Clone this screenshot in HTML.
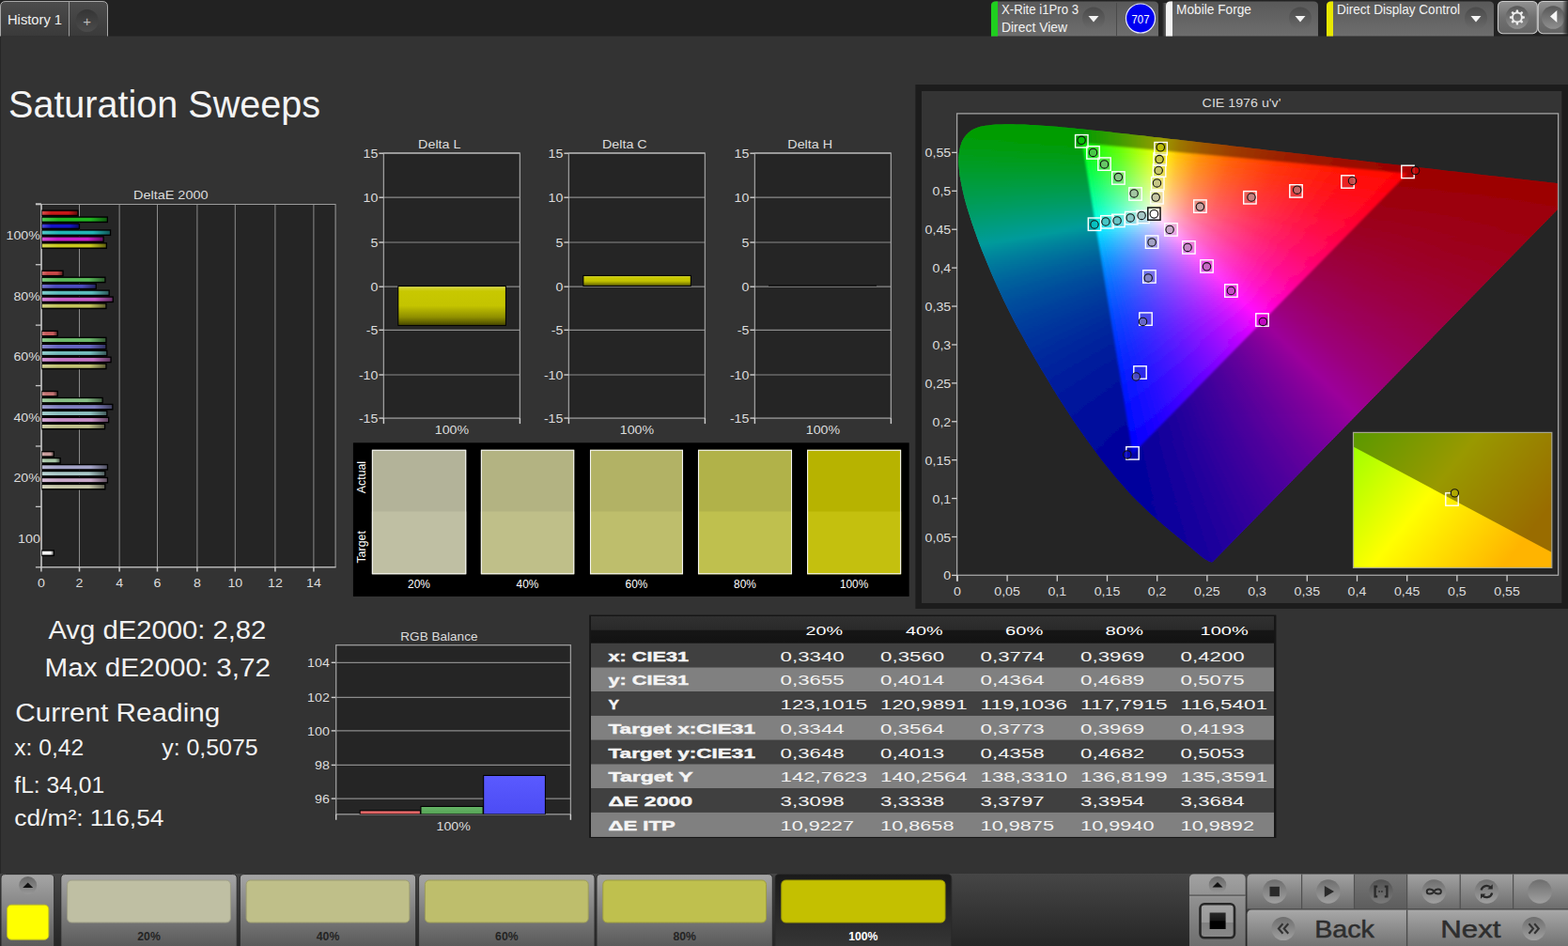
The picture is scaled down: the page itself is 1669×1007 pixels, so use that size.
<!DOCTYPE html>
<html><head><meta charset="utf-8"><title>Saturation Sweeps</title>
<style>html,body{margin:0;padding:0;background:#333;overflow:hidden}svg{display:block;font-family:"Liberation Sans", sans-serif}</style>
</head><body>
<svg width="1669" height="1007" viewBox="0 0 1669 1007">
<defs>
<linearGradient id="gTab" x1="0" y1="0" x2="0" y2="1"><stop offset="0" stop-color="#4c4c4c"/><stop offset="1" stop-color="#3a3a3a"/></linearGradient>
<linearGradient id="gPlus" x1="0" y1="0" x2="0" y2="1"><stop offset="0" stop-color="#353535"/><stop offset="1" stop-color="#4b4b4b"/></linearGradient>
<linearGradient id="gDev" x1="0" y1="0" x2="0" y2="1"><stop offset="0" stop-color="#595959"/><stop offset="1" stop-color="#6e6e6e"/></linearGradient>
<linearGradient id="gDevBtn" x1="0" y1="0" x2="0" y2="1"><stop offset="0" stop-color="#4a4a4a"/><stop offset="1" stop-color="#6a6a6a"/></linearGradient>
<linearGradient id="gGlow" x1="0" y1="0" x2="1" y2="0"><stop offset="0" stop-color="#fff" stop-opacity="0"/><stop offset="1" stop-color="#fff" stop-opacity="0.35"/></linearGradient>
<linearGradient id="gBtn" x1="0" y1="0" x2="0" y2="1"><stop offset="0" stop-color="#929292"/><stop offset="0.5" stop-color="#707070"/><stop offset="1" stop-color="#646464"/></linearGradient>
<linearGradient id="gBtnC" x1="0" y1="0" x2="0" y2="1"><stop offset="0" stop-color="#565656"/><stop offset="1" stop-color="#909090"/></linearGradient>
<linearGradient id="gEdge" x1="0" y1="0" x2="0" y2="1"><stop offset="0" stop-color="#000000"/><stop offset="1" stop-color="#000000"/></linearGradient>
<linearGradient id="gREdge" x1="0" y1="0" x2="1" y2="0"><stop offset="0" stop-color="#202020" stop-opacity="0"/><stop offset="1" stop-color="#202020" stop-opacity="0.9"/></linearGradient>
<linearGradient id="hb100_0" x1="0" y1="0" x2="1" y2="0"><stop offset="0" stop-color="#d44b4b"/><stop offset="0.25" stop-color="#c81818"/><stop offset="0.75" stop-color="#c81818"/><stop offset="1" stop-color="#640c0c"/></linearGradient>
<linearGradient id="hb100_1" x1="0" y1="0" x2="1" y2="0"><stop offset="0" stop-color="#51c451"/><stop offset="0.25" stop-color="#20b420"/><stop offset="0.75" stop-color="#20b420"/><stop offset="1" stop-color="#105a10"/></linearGradient>
<linearGradient id="hb100_2" x1="0" y1="0" x2="1" y2="0"><stop offset="0" stop-color="#4848d4"/><stop offset="0.25" stop-color="#1414c8"/><stop offset="0.75" stop-color="#1414c8"/><stop offset="1" stop-color="#0a0a64"/></linearGradient>
<linearGradient id="hb100_3" x1="0" y1="0" x2="1" y2="0"><stop offset="0" stop-color="#51c4c4"/><stop offset="0.25" stop-color="#20b4b4"/><stop offset="0.75" stop-color="#20b4b4"/><stop offset="1" stop-color="#105a5a"/></linearGradient>
<linearGradient id="hb100_4" x1="0" y1="0" x2="1" y2="0"><stop offset="0" stop-color="#d450d4"/><stop offset="0.25" stop-color="#c81ec8"/><stop offset="0.75" stop-color="#c81ec8"/><stop offset="1" stop-color="#640f64"/></linearGradient>
<linearGradient id="hb100_5" x1="0" y1="0" x2="1" y2="0"><stop offset="0" stop-color="#d4d450"/><stop offset="0.25" stop-color="#c8c81e"/><stop offset="0.75" stop-color="#c8c81e"/><stop offset="1" stop-color="#64640f"/></linearGradient>
<linearGradient id="hb80_0" x1="0" y1="0" x2="1" y2="0"><stop offset="0" stop-color="#d47070"/><stop offset="0.25" stop-color="#c84848"/><stop offset="0.75" stop-color="#c84848"/><stop offset="1" stop-color="#642424"/></linearGradient>
<linearGradient id="hb80_1" x1="0" y1="0" x2="1" y2="0"><stop offset="0" stop-color="#7dc87d"/><stop offset="0.25" stop-color="#58b858"/><stop offset="0.75" stop-color="#58b858"/><stop offset="1" stop-color="#2c5c2c"/></linearGradient>
<linearGradient id="hb80_2" x1="0" y1="0" x2="1" y2="0"><stop offset="0" stop-color="#7373ce"/><stop offset="0.25" stop-color="#4c4cc0"/><stop offset="0.75" stop-color="#4c4cc0"/><stop offset="1" stop-color="#262660"/></linearGradient>
<linearGradient id="hb80_3" x1="0" y1="0" x2="1" y2="0"><stop offset="0" stop-color="#80cbcb"/><stop offset="0.25" stop-color="#5cbcbc"/><stop offset="0.75" stop-color="#5cbcbc"/><stop offset="1" stop-color="#2e5e5e"/></linearGradient>
<linearGradient id="hb80_4" x1="0" y1="0" x2="1" y2="0"><stop offset="0" stop-color="#d480d4"/><stop offset="0.25" stop-color="#c85cc8"/><stop offset="0.75" stop-color="#c85cc8"/><stop offset="1" stop-color="#642e64"/></linearGradient>
<linearGradient id="hb80_5" x1="0" y1="0" x2="1" y2="0"><stop offset="0" stop-color="#d1d180"/><stop offset="0.25" stop-color="#c4c45c"/><stop offset="0.75" stop-color="#c4c45c"/><stop offset="1" stop-color="#62622e"/></linearGradient>
<linearGradient id="hb60_0" x1="0" y1="0" x2="1" y2="0"><stop offset="0" stop-color="#d38080"/><stop offset="0.25" stop-color="#c65c5c"/><stop offset="0.75" stop-color="#c65c5c"/><stop offset="1" stop-color="#632e2e"/></linearGradient>
<linearGradient id="hb60_1" x1="0" y1="0" x2="1" y2="0"><stop offset="0" stop-color="#8cc98c"/><stop offset="0.25" stop-color="#6cba6c"/><stop offset="0.75" stop-color="#6cba6c"/><stop offset="1" stop-color="#365d36"/></linearGradient>
<linearGradient id="hb60_2" x1="0" y1="0" x2="1" y2="0"><stop offset="0" stop-color="#8888cf"/><stop offset="0.25" stop-color="#6666c2"/><stop offset="0.75" stop-color="#6666c2"/><stop offset="1" stop-color="#333361"/></linearGradient>
<linearGradient id="hb60_3" x1="0" y1="0" x2="1" y2="0"><stop offset="0" stop-color="#93cbcb"/><stop offset="0.25" stop-color="#74bcbc"/><stop offset="0.75" stop-color="#74bcbc"/><stop offset="1" stop-color="#3a5e5e"/></linearGradient>
<linearGradient id="hb60_4" x1="0" y1="0" x2="1" y2="0"><stop offset="0" stop-color="#d193d1"/><stop offset="0.25" stop-color="#c474c4"/><stop offset="0.75" stop-color="#c474c4"/><stop offset="1" stop-color="#623a62"/></linearGradient>
<linearGradient id="hb60_5" x1="0" y1="0" x2="1" y2="0"><stop offset="0" stop-color="#cfcf93"/><stop offset="0.25" stop-color="#c2c274"/><stop offset="0.75" stop-color="#c2c274"/><stop offset="1" stop-color="#61613a"/></linearGradient>
<linearGradient id="hb40_0" x1="0" y1="0" x2="1" y2="0"><stop offset="0" stop-color="#d19393"/><stop offset="0.25" stop-color="#c47474"/><stop offset="0.75" stop-color="#c47474"/><stop offset="1" stop-color="#623a3a"/></linearGradient>
<linearGradient id="hb40_1" x1="0" y1="0" x2="1" y2="0"><stop offset="0" stop-color="#a1cca1"/><stop offset="0.25" stop-color="#86be86"/><stop offset="0.75" stop-color="#86be86"/><stop offset="1" stop-color="#435f43"/></linearGradient>
<linearGradient id="hb40_2" x1="0" y1="0" x2="1" y2="0"><stop offset="0" stop-color="#9c9cce"/><stop offset="0.25" stop-color="#8080c0"/><stop offset="0.75" stop-color="#8080c0"/><stop offset="1" stop-color="#404060"/></linearGradient>
<linearGradient id="hb40_3" x1="0" y1="0" x2="1" y2="0"><stop offset="0" stop-color="#a5cece"/><stop offset="0.25" stop-color="#8cc0c0"/><stop offset="0.75" stop-color="#8cc0c0"/><stop offset="1" stop-color="#466060"/></linearGradient>
<linearGradient id="hb40_4" x1="0" y1="0" x2="1" y2="0"><stop offset="0" stop-color="#d1a5d1"/><stop offset="0.25" stop-color="#c48cc4"/><stop offset="0.75" stop-color="#c48cc4"/><stop offset="1" stop-color="#624662"/></linearGradient>
<linearGradient id="hb40_5" x1="0" y1="0" x2="1" y2="0"><stop offset="0" stop-color="#cecea5"/><stop offset="0.25" stop-color="#c0c08c"/><stop offset="0.75" stop-color="#c0c08c"/><stop offset="1" stop-color="#606046"/></linearGradient>
<linearGradient id="hb20_0" x1="0" y1="0" x2="1" y2="0"><stop offset="0" stop-color="#d4b2b2"/><stop offset="0.25" stop-color="#c89c9c"/><stop offset="0.75" stop-color="#c89c9c"/><stop offset="1" stop-color="#644e4e"/></linearGradient>
<linearGradient id="hb20_1" x1="0" y1="0" x2="1" y2="0"><stop offset="0" stop-color="#b8d1b8"/><stop offset="0.25" stop-color="#a4c4a4"/><stop offset="0.75" stop-color="#a4c4a4"/><stop offset="1" stop-color="#526252"/></linearGradient>
<linearGradient id="hb20_2" x1="0" y1="0" x2="1" y2="0"><stop offset="0" stop-color="#b8b8d4"/><stop offset="0.25" stop-color="#a4a4c8"/><stop offset="0.75" stop-color="#a4a4c8"/><stop offset="1" stop-color="#525264"/></linearGradient>
<linearGradient id="hb20_3" x1="0" y1="0" x2="1" y2="0"><stop offset="0" stop-color="#bbd4d4"/><stop offset="0.25" stop-color="#a8c8c8"/><stop offset="0.75" stop-color="#a8c8c8"/><stop offset="1" stop-color="#546464"/></linearGradient>
<linearGradient id="hb20_4" x1="0" y1="0" x2="1" y2="0"><stop offset="0" stop-color="#d4bbd4"/><stop offset="0.25" stop-color="#c8a8c8"/><stop offset="0.75" stop-color="#c8a8c8"/><stop offset="1" stop-color="#645464"/></linearGradient>
<linearGradient id="hb20_5" x1="0" y1="0" x2="1" y2="0"><stop offset="0" stop-color="#d3d3bb"/><stop offset="0.25" stop-color="#c6c6a8"/><stop offset="0.75" stop-color="#c6c6a8"/><stop offset="1" stop-color="#636354"/></linearGradient>
<linearGradient id="hbw" x1="0" y1="0" x2="1" y2="0"><stop offset="0" stop-color="#f6f6f6"/><stop offset="0.25" stop-color="#f4f4f4"/><stop offset="0.75" stop-color="#f4f4f4"/><stop offset="1" stop-color="#7a7a7a"/></linearGradient>
<linearGradient id="gYbar" x1="0" y1="0" x2="0" y2="1"><stop offset="0" stop-color="#dede58"/><stop offset="0.04" stop-color="#d2d230"/><stop offset="0.12" stop-color="#c8c800"/><stop offset="0.5" stop-color="#c4c400"/><stop offset="0.8" stop-color="#8e8e00"/><stop offset="1" stop-color="#4a4a00"/></linearGradient>
<clipPath id="cLocus"><path d="M1290.9,598.0 L1290.7,598.1 L1290.4,598.3 L1290.1,598.5 L1289.6,598.6 L1288.7,598.3 L1287.6,597.8 L1286.2,597.2 L1284.5,596.3 L1282.7,595.2 L1280.8,593.9 L1278.6,592.2 L1276.0,590.1 L1273.4,587.9 L1270.9,585.7 L1268.6,583.8 L1266.7,582.2 L1265.0,580.8 L1263.5,579.5 L1261.9,578.2 L1260.0,576.7 L1258.0,575.0 L1255.8,573.2 L1253.6,571.4 L1251.2,569.5 L1248.8,567.4 L1246.3,565.4 L1243.7,563.2 L1241.0,561.0 L1238.2,558.7 L1235.3,556.1 L1232.2,553.4 L1229.0,550.6 L1225.7,547.7 L1222.2,544.5 L1218.6,541.1 L1215.0,537.6 L1211.2,533.9 L1207.3,530.0 L1203.1,525.7 L1198.7,520.8 L1193.9,515.3 L1188.8,509.4 L1183.4,503.0 L1177.9,496.2 L1172.2,488.9 L1166.3,481.1 L1160.2,472.7 L1153.9,464.0 L1147.4,454.8 L1140.9,445.2 L1134.3,435.1 L1127.5,424.4 L1120.6,413.4 L1113.8,402.1 L1107.0,390.8 L1100.3,379.3 L1093.5,367.5 L1086.9,355.6 L1080.4,343.7 L1074.4,332.0 L1068.7,320.4 L1063.3,308.8 L1058.1,297.4 L1053.3,286.2 L1048.9,275.6 L1044.7,265.3 L1040.9,255.3 L1037.5,245.7 L1034.3,236.6 L1031.6,228.0 L1029.1,219.9 L1027.0,212.4 L1025.3,205.4 L1023.8,198.8 L1022.6,192.6 L1021.6,186.9 L1021.0,181.6 L1020.6,176.8 L1020.4,172.2 L1020.4,168.0 L1020.7,164.0 L1021.2,160.4 L1021.9,157.0 L1022.8,153.9 L1023.8,151.1 L1025.1,148.4 L1026.6,146.1 L1028.2,143.9 L1030.1,142.0 L1032.0,140.3 L1034.0,138.8 L1036.2,137.6 L1038.6,136.5 L1041.0,135.6 L1043.5,134.8 L1046.1,134.2 L1048.8,133.7 L1051.5,133.4 L1054.4,133.1 L1057.2,132.8 L1060.1,132.6 L1063.1,132.5 L1066.1,132.4 L1069.1,132.3 L1072.2,132.3 L1075.2,132.3 L1078.2,132.3 L1081.2,132.4 L1084.3,132.4 L1087.4,132.5 L1090.5,132.6 L1093.6,132.7 L1096.7,132.9 L1099.9,133.1 L1103.2,133.2 L1106.5,133.5 L1109.9,133.7 L1113.3,133.9 L1116.7,134.2 L1120.3,134.5 L1123.9,134.8 L1127.5,135.1 L1131.2,135.4 L1135.0,135.8 L1138.8,136.2 L1142.7,136.5 L1146.7,136.9 L1150.8,137.3 L1154.9,137.8 L1159.2,138.2 L1163.5,138.7 L1168.0,139.1 L1172.5,139.6 L1177.1,140.1 L1181.8,140.6 L1186.6,141.2 L1191.5,141.7 L1196.5,142.3 L1201.6,142.8 L1206.8,143.4 L1212.1,144.0 L1217.5,144.6 L1223.1,145.3 L1228.7,145.9 L1234.5,146.5 L1240.3,147.2 L1246.3,147.9 L1252.4,148.6 L1258.6,149.3 L1264.9,150.0 L1271.3,150.8 L1277.8,151.5 L1284.4,152.3 L1291.2,153.1 L1298.0,153.8 L1305.0,154.6 L1312.1,155.5 L1319.2,156.3 L1326.5,157.1 L1333.8,158.0 L1341.2,158.8 L1348.7,159.7 L1356.3,160.5 L1364.0,161.4 L1371.6,162.3 L1379.4,163.2 L1387.2,164.1 L1395.0,165.0 L1402.8,165.9 L1410.5,166.8 L1418.1,167.7 L1425.7,168.5 L1433.3,169.4 L1440.7,170.3 L1448.2,171.1 L1455.7,172.0 L1463.1,172.8 L1470.5,173.7 L1477.8,174.5 L1484.9,175.3 L1491.8,176.1 L1498.6,176.9 L1505.3,177.6 L1511.8,178.4 L1518.1,179.1 L1524.3,179.8 L1530.3,180.5 L1536.2,181.2 L1541.9,181.9 L1547.5,182.5 L1552.8,183.1 L1558.0,183.7 L1563.0,184.3 L1567.8,184.8 L1572.5,185.4 L1577.0,185.9 L1581.3,186.4 L1585.4,186.9 L1589.5,187.3 L1593.4,187.8 L1596.9,188.2 L1600.2,188.6 L1603.4,188.9 L1606.9,189.3 L1611.0,189.8 L1616.1,190.4 L1622.0,191.1 L1628.1,191.8 L1634.1,192.5 L1639.3,193.1 L1643.7,193.6 L1647.7,194.0 L1651.4,194.4 L1654.7,194.8 L1657.8,195.2 L1660.5,195.5 L1662.9,195.8 L1664.9,196.0 L1666.9,196.2 L1668.9,196.5 L1671.0,196.7 L1673.1,196.9 L1675.1,197.2 L1677.0,197.4 L1678.5,197.6 L1679.6,197.7 L1680.6,197.8 L1681.3,197.9 L1681.8,197.9 L1682.2,198.0 Z"/></clipPath>
<clipPath id="cPlot"><rect x="1018.6" y="120.9" width="639.9999999999999" height="491.4"/></clipPath>
<linearGradient id="r0" gradientUnits="userSpaceOnUse" x1="1055.4" y1="0" x2="1097.7" y2="0"><stop offset="0.0000" stop-color="#00ff00"/><stop offset="1.0000" stop-color="#00ff00"/></linearGradient>
<linearGradient id="r1" gradientUnits="userSpaceOnUse" x1="1042.4" y1="0" x2="1126.1" y2="0"><stop offset="0.0000" stop-color="#00ff00"/><stop offset="1.0000" stop-color="#00ff00"/></linearGradient>
<linearGradient id="r2" gradientUnits="userSpaceOnUse" x1="1036.8" y1="0" x2="1147.3" y2="0"><stop offset="0.0000" stop-color="#00ff00"/><stop offset="1.0000" stop-color="#00ff00"/></linearGradient>
<linearGradient id="r3" gradientUnits="userSpaceOnUse" x1="1032.9" y1="0" x2="1166.7" y2="0"><stop offset="0.0000" stop-color="#00ff00"/><stop offset="0.8806" stop-color="#02ff00"/><stop offset="1.0000" stop-color="#28ff00"/></linearGradient>
<linearGradient id="r4" gradientUnits="userSpaceOnUse" x1="1030.3" y1="0" x2="1185.1" y2="0"><stop offset="0.0000" stop-color="#00ff00"/><stop offset="0.7806" stop-color="#03ff00"/><stop offset="1.0000" stop-color="#57ff00"/></linearGradient>
<linearGradient id="r5" gradientUnits="userSpaceOnUse" x1="1028.2" y1="0" x2="1203.0" y2="0"><stop offset="0.0000" stop-color="#00ff02"/><stop offset="0.7029" stop-color="#02ff00"/><stop offset="0.9371" stop-color="#6aff00"/><stop offset="1.0000" stop-color="#8aff00"/></linearGradient>
<linearGradient id="r6" gradientUnits="userSpaceOnUse" x1="1026.5" y1="0" x2="1220.8" y2="0"><stop offset="0.0000" stop-color="#00ff06"/><stop offset="0.4154" stop-color="#00ff00"/><stop offset="0.6410" stop-color="#01ff00"/><stop offset="0.8513" stop-color="#6aff00"/><stop offset="1.0000" stop-color="#c4ff00"/></linearGradient>
<linearGradient id="r7" gradientUnits="userSpaceOnUse" x1="1025.1" y1="0" x2="1238.5" y2="0"><stop offset="0.0000" stop-color="#00ff09"/><stop offset="0.4206" stop-color="#00ff00"/><stop offset="0.5935" stop-color="#02ff00"/><stop offset="0.7850" stop-color="#6bff00"/><stop offset="0.9486" stop-color="#dbff00"/><stop offset="0.9953" stop-color="#fffe00"/><stop offset="1.0000" stop-color="#fffa00"/></linearGradient>
<linearGradient id="r8" gradientUnits="userSpaceOnUse" x1="1023.9" y1="0" x2="1255.9" y2="0"><stop offset="0.0000" stop-color="#00ff0c"/><stop offset="0.4678" stop-color="#00ff00"/><stop offset="0.5536" stop-color="#03ff00"/><stop offset="0.7296" stop-color="#6dff00"/><stop offset="0.8755" stop-color="#daff00"/><stop offset="0.9185" stop-color="#ffff00"/><stop offset="1.0000" stop-color="#ffc400"/></linearGradient>
<linearGradient id="r9" gradientUnits="userSpaceOnUse" x1="1022.9" y1="0" x2="1273.4" y2="0"><stop offset="0.0000" stop-color="#00ff10"/><stop offset="0.5139" stop-color="#00ff00"/><stop offset="0.6733" stop-color="#68ff00"/><stop offset="0.8088" stop-color="#d5ff00"/><stop offset="0.8566" stop-color="#fffd00"/><stop offset="0.9323" stop-color="#ffc200"/><stop offset="1.0000" stop-color="#ff9d00"/></linearGradient>
<linearGradient id="r10" gradientUnits="userSpaceOnUse" x1="1022.2" y1="0" x2="1290.7" y2="0"><stop offset="0.0000" stop-color="#00ff13"/><stop offset="0.4870" stop-color="#03ff00"/><stop offset="0.6357" stop-color="#6bff00"/><stop offset="0.7621" stop-color="#daff00"/><stop offset="0.7993" stop-color="#fffe00"/><stop offset="0.8662" stop-color="#ffc500"/><stop offset="0.9591" stop-color="#ff9000"/><stop offset="1.0000" stop-color="#ff7f00"/></linearGradient>
<linearGradient id="r11" gradientUnits="userSpaceOnUse" x1="1021.5" y1="0" x2="1308.1" y2="0"><stop offset="0.0000" stop-color="#00ff17"/><stop offset="0.4599" stop-color="#03ff04"/><stop offset="0.5993" stop-color="#6cff00"/><stop offset="0.7178" stop-color="#dcff00"/><stop offset="0.7526" stop-color="#fffc00"/><stop offset="0.8188" stop-color="#ffc100"/><stop offset="0.9094" stop-color="#ff8c00"/><stop offset="1.0000" stop-color="#ff6800"/></linearGradient>
<linearGradient id="r12" gradientUnits="userSpaceOnUse" x1="1020.9" y1="0" x2="1325.5" y2="0"><stop offset="0.0000" stop-color="#00ff1a"/><stop offset="0.4361" stop-color="#03ff08"/><stop offset="0.5639" stop-color="#6aff00"/><stop offset="0.6754" stop-color="#daff00"/><stop offset="0.7082" stop-color="#fffe00"/><stop offset="0.7672" stop-color="#ffc400"/><stop offset="0.8492" stop-color="#ff8f00"/><stop offset="0.9672" stop-color="#ff5f00"/><stop offset="1.0000" stop-color="#ff5600"/></linearGradient>
<linearGradient id="r13" gradientUnits="userSpaceOnUse" x1="1020.5" y1="0" x2="1342.9" y2="0"><stop offset="0.0000" stop-color="#00ff1d"/><stop offset="0.4118" stop-color="#01ff0c"/><stop offset="0.5325" stop-color="#69ff05"/><stop offset="0.6347" stop-color="#d5ff00"/><stop offset="0.6687" stop-color="#ffff00"/><stop offset="0.7245" stop-color="#ffc500"/><stop offset="0.8019" stop-color="#ff8f00"/><stop offset="0.9102" stop-color="#ff6000"/><stop offset="1.0000" stop-color="#ff4600"/></linearGradient>
<linearGradient id="r14" gradientUnits="userSpaceOnUse" x1="1020.1" y1="0" x2="1360.4" y2="0"><stop offset="0.0000" stop-color="#00ff21"/><stop offset="0.3930" stop-color="#02ff11"/><stop offset="0.5073" stop-color="#6aff0a"/><stop offset="0.6041" stop-color="#d8ff02"/><stop offset="0.6364" stop-color="#fffc00"/><stop offset="0.6891" stop-color="#ffc200"/><stop offset="0.7625" stop-color="#ff8e00"/><stop offset="0.8680" stop-color="#ff5e00"/><stop offset="1.0000" stop-color="#ff3a00"/></linearGradient>
<linearGradient id="r15" gradientUnits="userSpaceOnUse" x1="1019.8" y1="0" x2="1377.8" y2="0"><stop offset="0.0000" stop-color="#00ff24"/><stop offset="0.3743" stop-color="#01ff15"/><stop offset="0.4832" stop-color="#6aff0f"/><stop offset="0.5754" stop-color="#d9ff08"/><stop offset="0.6034" stop-color="#ffff05"/><stop offset="0.6536" stop-color="#ffc400"/><stop offset="0.7235" stop-color="#ff8e00"/><stop offset="0.8212" stop-color="#ff5f00"/><stop offset="0.9693" stop-color="#ff3500"/><stop offset="1.0000" stop-color="#ff2f00"/></linearGradient>
<linearGradient id="r16" gradientUnits="userSpaceOnUse" x1="1019.6" y1="0" x2="1395.1" y2="0"><stop offset="0.0000" stop-color="#00ff28"/><stop offset="0.3590" stop-color="#02ff1a"/><stop offset="0.4628" stop-color="#6bff14"/><stop offset="0.5505" stop-color="#dbff0d"/><stop offset="0.5771" stop-color="#fffc0b"/><stop offset="0.6250" stop-color="#ffc205"/><stop offset="0.6915" stop-color="#ff8c00"/><stop offset="0.7872" stop-color="#ff5d00"/><stop offset="0.9309" stop-color="#ff3300"/><stop offset="1.0000" stop-color="#ff2600"/></linearGradient>
<linearGradient id="r17" gradientUnits="userSpaceOnUse" x1="1019.5" y1="0" x2="1412.4" y2="0"><stop offset="0.0000" stop-color="#00ff2b"/><stop offset="0.3435" stop-color="#01ff1f"/><stop offset="0.4402" stop-color="#68ff19"/><stop offset="0.5242" stop-color="#d8ff13"/><stop offset="0.5496" stop-color="#ffff11"/><stop offset="0.5954" stop-color="#ffc30a"/><stop offset="0.6565" stop-color="#ff8f04"/><stop offset="0.7455" stop-color="#ff5f00"/><stop offset="0.8779" stop-color="#ff3500"/><stop offset="1.0000" stop-color="#ff1e00"/></linearGradient>
<linearGradient id="r18" gradientUnits="userSpaceOnUse" x1="1019.4" y1="0" x2="1429.8" y2="0"><stop offset="0.0000" stop-color="#00ff2f"/><stop offset="0.3309" stop-color="#02ff23"/><stop offset="0.4234" stop-color="#6aff1e"/><stop offset="0.5012" stop-color="#d8ff19"/><stop offset="0.5255" stop-color="#ffff17"/><stop offset="0.5693" stop-color="#ffc30f"/><stop offset="0.6277" stop-color="#ff8f08"/><stop offset="0.7105" stop-color="#ff6001"/><stop offset="0.8345" stop-color="#ff3600"/><stop offset="1.0000" stop-color="#ff1700"/></linearGradient>
<linearGradient id="r19" gradientUnits="userSpaceOnUse" x1="1019.4" y1="0" x2="1447.2" y2="0"><stop offset="0.0000" stop-color="#00ff32"/><stop offset="0.3178" stop-color="#01ff28"/><stop offset="0.4065" stop-color="#6bff24"/><stop offset="0.4813" stop-color="#d9ff1f"/><stop offset="0.5047" stop-color="#fffe1d"/><stop offset="0.5444" stop-color="#ffc514"/><stop offset="0.6005" stop-color="#ff8f0c"/><stop offset="0.6799" stop-color="#ff6004"/><stop offset="0.7991" stop-color="#ff3600"/><stop offset="0.9883" stop-color="#ff1200"/><stop offset="1.0000" stop-color="#ff1100"/></linearGradient>
<linearGradient id="r20" gradientUnits="userSpaceOnUse" x1="1019.4" y1="0" x2="1464.6" y2="0"><stop offset="0.0000" stop-color="#00ff36"/><stop offset="0.3072" stop-color="#03ff2d"/><stop offset="0.3924" stop-color="#6dff29"/><stop offset="0.4641" stop-color="#dcff25"/><stop offset="0.4843" stop-color="#fffe24"/><stop offset="0.5224" stop-color="#ffc519"/><stop offset="0.5762" stop-color="#ff8f10"/><stop offset="0.6525" stop-color="#ff6008"/><stop offset="0.7668" stop-color="#ff3600"/><stop offset="0.9484" stop-color="#ff1200"/><stop offset="1.0000" stop-color="#ff0b00"/></linearGradient>
<linearGradient id="r21" gradientUnits="userSpaceOnUse" x1="1019.4" y1="0" x2="1482.0" y2="0"><stop offset="0.0000" stop-color="#00ff39"/><stop offset="0.2959" stop-color="#02ff32"/><stop offset="0.3758" stop-color="#6aff2f"/><stop offset="0.4449" stop-color="#daff2b"/><stop offset="0.4665" stop-color="#fffc29"/><stop offset="0.5032" stop-color="#ffc31e"/><stop offset="0.5551" stop-color="#ff8e14"/><stop offset="0.6285" stop-color="#ff5f0b"/><stop offset="0.7387" stop-color="#ff3503"/><stop offset="0.9136" stop-color="#ff1100"/><stop offset="1.0000" stop-color="#ff0600"/></linearGradient>
<linearGradient id="r22" gradientUnits="userSpaceOnUse" x1="1019.5" y1="0" x2="1499.6" y2="0"><stop offset="0.0000" stop-color="#00ff3d"/><stop offset="0.2848" stop-color="#01ff37"/><stop offset="0.3617" stop-color="#69ff34"/><stop offset="0.4262" stop-color="#d6ff31"/><stop offset="0.4491" stop-color="#fffc30"/><stop offset="0.4844" stop-color="#ffc323"/><stop offset="0.5343" stop-color="#ff8d18"/><stop offset="0.6050" stop-color="#ff5e0e"/><stop offset="0.7110" stop-color="#ff3405"/><stop offset="0.8794" stop-color="#ff1100"/><stop offset="1.0000" stop-color="#ff0200"/></linearGradient>
<linearGradient id="r23" gradientUnits="userSpaceOnUse" x1="1019.6" y1="0" x2="1517.1" y2="0"><stop offset="0.0000" stop-color="#00ff41"/><stop offset="0.2751" stop-color="#01ff3c"/><stop offset="0.3494" stop-color="#6aff3a"/><stop offset="0.4116" stop-color="#d7ff38"/><stop offset="0.4317" stop-color="#fffe37"/><stop offset="0.4659" stop-color="#ffc429"/><stop offset="0.5120" stop-color="#ff901d"/><stop offset="0.5783" stop-color="#ff6012"/><stop offset="0.6767" stop-color="#ff3708"/><stop offset="0.8333" stop-color="#ff1300"/><stop offset="1.0000" stop-color="#ff0000"/></linearGradient>
<linearGradient id="r24" gradientUnits="userSpaceOnUse" x1="1019.7" y1="0" x2="1534.5" y2="0"><stop offset="0.0000" stop-color="#00ff44"/><stop offset="0.2660" stop-color="#01ff41"/><stop offset="0.3379" stop-color="#6aff3f"/><stop offset="0.3981" stop-color="#d9ff3e"/><stop offset="0.4175" stop-color="#fffc3d"/><stop offset="0.4505" stop-color="#ffc22e"/><stop offset="0.4951" stop-color="#ff8e21"/><stop offset="0.5592" stop-color="#ff5f15"/><stop offset="0.6563" stop-color="#ff350a"/><stop offset="0.8097" stop-color="#ff1101"/><stop offset="0.9650" stop-color="#ff0000"/><stop offset="1.0000" stop-color="#ff0000"/></linearGradient>
<linearGradient id="r25" gradientUnits="userSpaceOnUse" x1="1019.9" y1="0" x2="1551.8" y2="0"><stop offset="0.0000" stop-color="#00ff48"/><stop offset="0.2594" stop-color="#03ff46"/><stop offset="0.3271" stop-color="#6bff45"/><stop offset="0.3853" stop-color="#daff44"/><stop offset="0.4023" stop-color="#ffff44"/><stop offset="0.4342" stop-color="#ffc434"/><stop offset="0.4774" stop-color="#ff8f25"/><stop offset="0.5395" stop-color="#ff5f18"/><stop offset="0.6316" stop-color="#ff360d"/><stop offset="0.7782" stop-color="#ff1203"/><stop offset="0.9286" stop-color="#ff0000"/><stop offset="1.0000" stop-color="#ff0000"/></linearGradient>
<linearGradient id="r26" gradientUnits="userSpaceOnUse" x1="1020.1" y1="0" x2="1569.1" y2="0"><stop offset="0.0000" stop-color="#00ff4c"/><stop offset="0.2509" stop-color="#02ff4b"/><stop offset="0.3164" stop-color="#6aff4b"/><stop offset="0.3727" stop-color="#daff4b"/><stop offset="0.3891" stop-color="#ffff4b"/><stop offset="0.4200" stop-color="#ffc339"/><stop offset="0.4618" stop-color="#ff8e29"/><stop offset="0.5218" stop-color="#ff5f1b"/><stop offset="0.6109" stop-color="#ff350f"/><stop offset="0.7527" stop-color="#ff1205"/><stop offset="0.8964" stop-color="#ff0000"/><stop offset="1.0000" stop-color="#ff0000"/></linearGradient>
<linearGradient id="r27" gradientUnits="userSpaceOnUse" x1="1020.4" y1="0" x2="1586.6" y2="0"><stop offset="0.0000" stop-color="#00ff4f"/><stop offset="0.2434" stop-color="#02ff50"/><stop offset="0.3069" stop-color="#6bff51"/><stop offset="0.3598" stop-color="#d8ff51"/><stop offset="0.3774" stop-color="#fffc51"/><stop offset="0.4074" stop-color="#ffc13e"/><stop offset="0.4480" stop-color="#ff8d2d"/><stop offset="0.5062" stop-color="#ff5e1f"/><stop offset="0.5926" stop-color="#ff3412"/><stop offset="0.7319" stop-color="#ff1106"/><stop offset="0.8660" stop-color="#ff0000"/><stop offset="1.0000" stop-color="#ff0000"/></linearGradient>
<linearGradient id="r28" gradientUnits="userSpaceOnUse" x1="1020.6" y1="0" x2="1604.1" y2="0"><stop offset="0.0000" stop-color="#00ff53"/><stop offset="0.2363" stop-color="#02ff56"/><stop offset="0.2979" stop-color="#6cff57"/><stop offset="0.3493" stop-color="#daff58"/><stop offset="0.3647" stop-color="#fffe58"/><stop offset="0.3921" stop-color="#ffc545"/><stop offset="0.4298" stop-color="#ff9133"/><stop offset="0.4846" stop-color="#ff6123"/><stop offset="0.5668" stop-color="#ff3715"/><stop offset="0.6969" stop-color="#ff1309"/><stop offset="0.8339" stop-color="#ff0002"/><stop offset="1.0000" stop-color="#ff0000"/></linearGradient>
<linearGradient id="r29" gradientUnits="userSpaceOnUse" x1="1021.0" y1="0" x2="1621.4" y2="0"><stop offset="0.0000" stop-color="#00ff57"/><stop offset="0.2296" stop-color="#02ff5b"/><stop offset="0.2879" stop-color="#6aff5d"/><stop offset="0.3378" stop-color="#d8ff5f"/><stop offset="0.3544" stop-color="#fffc5e"/><stop offset="0.3810" stop-color="#ffc34a"/><stop offset="0.4176" stop-color="#ff8f37"/><stop offset="0.4709" stop-color="#ff6026"/><stop offset="0.5507" stop-color="#ff3617"/><stop offset="0.6772" stop-color="#ff120b"/><stop offset="0.8070" stop-color="#ff0003"/><stop offset="1.0000" stop-color="#ff0000"/></linearGradient>
<linearGradient id="r30" gradientUnits="userSpaceOnUse" x1="1021.3" y1="0" x2="1638.7" y2="0"><stop offset="0.0000" stop-color="#00ff5b"/><stop offset="0.2233" stop-color="#02ff61"/><stop offset="0.2799" stop-color="#6aff63"/><stop offset="0.3285" stop-color="#daff66"/><stop offset="0.3430" stop-color="#fffe66"/><stop offset="0.3689" stop-color="#ffc450"/><stop offset="0.4045" stop-color="#ff903c"/><stop offset="0.4563" stop-color="#ff602a"/><stop offset="0.5324" stop-color="#ff361a"/><stop offset="0.6537" stop-color="#ff120d"/><stop offset="0.7816" stop-color="#ff0005"/><stop offset="1.0000" stop-color="#ff0000"/></linearGradient>
<linearGradient id="r31" gradientUnits="userSpaceOnUse" x1="1021.7" y1="0" x2="1656.3" y2="0"><stop offset="0.0000" stop-color="#00ff5f"/><stop offset="0.2173" stop-color="#02ff66"/><stop offset="0.2724" stop-color="#6cff69"/><stop offset="0.3181" stop-color="#d8ff6c"/><stop offset="0.3323" stop-color="#feff6e"/><stop offset="0.3591" stop-color="#ffc255"/><stop offset="0.3937" stop-color="#ff8e40"/><stop offset="0.4441" stop-color="#ff5e2d"/><stop offset="0.5197" stop-color="#ff351c"/><stop offset="0.6394" stop-color="#ff110e"/><stop offset="0.7575" stop-color="#ff0006"/><stop offset="1.0000" stop-color="#ff0000"/></linearGradient>
<linearGradient id="r32" gradientUnits="userSpaceOnUse" x1="1022.0" y1="0" x2="1658.6" y2="0"><stop offset="0.0000" stop-color="#00ff63"/><stop offset="0.2166" stop-color="#03ff6c"/><stop offset="0.2716" stop-color="#6dff70"/><stop offset="0.3171" stop-color="#daff74"/><stop offset="0.3312" stop-color="#fffd74"/><stop offset="0.3564" stop-color="#ffc35c"/><stop offset="0.3909" stop-color="#ff8e45"/><stop offset="0.4396" stop-color="#ff6031"/><stop offset="0.5133" stop-color="#ff3620"/><stop offset="0.6311" stop-color="#ff1210"/><stop offset="0.7504" stop-color="#ff0008"/><stop offset="1.0000" stop-color="#ff0000"/></linearGradient>
<linearGradient id="r33" gradientUnits="userSpaceOnUse" x1="1022.4" y1="0" x2="1658.6" y2="0"><stop offset="0.0000" stop-color="#00ff67"/><stop offset="0.2166" stop-color="#03ff72"/><stop offset="0.2700" stop-color="#6aff76"/><stop offset="0.3155" stop-color="#d7ff7b"/><stop offset="0.3297" stop-color="#feff7c"/><stop offset="0.3564" stop-color="#ffc261"/><stop offset="0.3909" stop-color="#ff8d49"/><stop offset="0.4411" stop-color="#ff5d34"/><stop offset="0.5165" stop-color="#ff3422"/><stop offset="0.6358" stop-color="#ff1012"/><stop offset="0.7488" stop-color="#ff0009"/><stop offset="1.0000" stop-color="#ff0000"/></linearGradient>
<linearGradient id="r34" gradientUnits="userSpaceOnUse" x1="1022.8" y1="0" x2="1658.6" y2="0"><stop offset="0.0000" stop-color="#00ff6b"/><stop offset="0.2154" stop-color="#00ff78"/><stop offset="0.2689" stop-color="#68ff7c"/><stop offset="0.3145" stop-color="#d6ff82"/><stop offset="0.3302" stop-color="#fffc82"/><stop offset="0.3553" stop-color="#ffc267"/><stop offset="0.3899" stop-color="#ff8d4e"/><stop offset="0.4387" stop-color="#ff5e38"/><stop offset="0.5126" stop-color="#ff3425"/><stop offset="0.6305" stop-color="#ff1114"/><stop offset="0.7453" stop-color="#ff000b"/><stop offset="1.0000" stop-color="#ff0000"/></linearGradient>
<linearGradient id="r35" gradientUnits="userSpaceOnUse" x1="1023.3" y1="0" x2="1658.6" y2="0"><stop offset="0.0000" stop-color="#00ff6f"/><stop offset="0.2154" stop-color="#00ff7d"/><stop offset="0.2689" stop-color="#69ff83"/><stop offset="0.3145" stop-color="#d8ff89"/><stop offset="0.3286" stop-color="#ffff8b"/><stop offset="0.3538" stop-color="#ffc36e"/><stop offset="0.3884" stop-color="#ff8d53"/><stop offset="0.4371" stop-color="#ff5e3c"/><stop offset="0.5094" stop-color="#ff3528"/><stop offset="0.6258" stop-color="#ff1116"/><stop offset="0.7406" stop-color="#ff000d"/><stop offset="1.0000" stop-color="#ff0001"/></linearGradient>
<linearGradient id="r36" gradientUnits="userSpaceOnUse" x1="1023.7" y1="0" x2="1658.6" y2="0"><stop offset="0.0000" stop-color="#00ff73"/><stop offset="0.2157" stop-color="#01ff83"/><stop offset="0.2693" stop-color="#6bff8a"/><stop offset="0.3134" stop-color="#d7ff91"/><stop offset="0.3276" stop-color="#ffff93"/><stop offset="0.3528" stop-color="#ffc374"/><stop offset="0.3858" stop-color="#ff8f59"/><stop offset="0.4331" stop-color="#ff6041"/><stop offset="0.5039" stop-color="#ff372c"/><stop offset="0.6173" stop-color="#ff1219"/><stop offset="0.7370" stop-color="#ff000e"/><stop offset="1.0000" stop-color="#ff0002"/></linearGradient>
<linearGradient id="r37" gradientUnits="userSpaceOnUse" x1="1024.2" y1="0" x2="1658.6" y2="0"><stop offset="0.0000" stop-color="#00ff77"/><stop offset="0.2157" stop-color="#01ff8a"/><stop offset="0.2677" stop-color="#68ff91"/><stop offset="0.3118" stop-color="#d4ff98"/><stop offset="0.3276" stop-color="#fffd9a"/><stop offset="0.3512" stop-color="#ffc47b"/><stop offset="0.3843" stop-color="#ff905f"/><stop offset="0.4315" stop-color="#ff6045"/><stop offset="0.5024" stop-color="#ff362f"/><stop offset="0.6142" stop-color="#ff131b"/><stop offset="0.7323" stop-color="#ff0010"/><stop offset="1.0000" stop-color="#ff0003"/></linearGradient>
<linearGradient id="r38" gradientUnits="userSpaceOnUse" x1="1024.7" y1="0" x2="1658.6" y2="0"><stop offset="0.0000" stop-color="#00ff7b"/><stop offset="0.2161" stop-color="#02ff90"/><stop offset="0.2681" stop-color="#6aff98"/><stop offset="0.3123" stop-color="#d8ffa0"/><stop offset="0.3265" stop-color="#fffea2"/><stop offset="0.3502" stop-color="#ffc582"/><stop offset="0.3833" stop-color="#ff8f64"/><stop offset="0.4306" stop-color="#ff6049"/><stop offset="0.5016" stop-color="#ff3632"/><stop offset="0.6136" stop-color="#ff121d"/><stop offset="0.7303" stop-color="#ff0012"/><stop offset="1.0000" stop-color="#ff0004"/></linearGradient>
<linearGradient id="r39" gradientUnits="userSpaceOnUse" x1="1025.2" y1="0" x2="1658.6" y2="0"><stop offset="0.0000" stop-color="#00ff80"/><stop offset="0.2161" stop-color="#02ff96"/><stop offset="0.2681" stop-color="#6bff9f"/><stop offset="0.3123" stop-color="#daffa8"/><stop offset="0.3249" stop-color="#feffab"/><stop offset="0.3517" stop-color="#ffc086"/><stop offset="0.3849" stop-color="#ff8c67"/><stop offset="0.4322" stop-color="#ff5d4c"/><stop offset="0.5032" stop-color="#ff3434"/><stop offset="0.6167" stop-color="#ff111f"/><stop offset="0.7271" stop-color="#ff0013"/><stop offset="1.0000" stop-color="#ff0005"/></linearGradient>
<linearGradient id="r40" gradientUnits="userSpaceOnUse" x1="1025.7" y1="0" x2="1658.6" y2="0"><stop offset="0.0000" stop-color="#00ff84"/><stop offset="0.2164" stop-color="#03ff9c"/><stop offset="0.2686" stop-color="#6dffa6"/><stop offset="0.3128" stop-color="#ddffb0"/><stop offset="0.3254" stop-color="#fffcb1"/><stop offset="0.3491" stop-color="#ffc38e"/><stop offset="0.3823" stop-color="#ff8e6e"/><stop offset="0.4297" stop-color="#ff5e50"/><stop offset="0.5008" stop-color="#ff3437"/><stop offset="0.6145" stop-color="#ff1121"/><stop offset="0.7235" stop-color="#ff0015"/><stop offset="1.0000" stop-color="#ff0006"/></linearGradient>
<linearGradient id="r41" gradientUnits="userSpaceOnUse" x1="1026.2" y1="0" x2="1658.6" y2="0"><stop offset="0.0000" stop-color="#00ff88"/><stop offset="0.2148" stop-color="#00ffa3"/><stop offset="0.2654" stop-color="#67ffad"/><stop offset="0.3096" stop-color="#d6ffb7"/><stop offset="0.3239" stop-color="#fffebb"/><stop offset="0.3476" stop-color="#ffc496"/><stop offset="0.3807" stop-color="#ff8e73"/><stop offset="0.4281" stop-color="#ff5e55"/><stop offset="0.4976" stop-color="#ff353a"/><stop offset="0.6098" stop-color="#ff1124"/><stop offset="0.7204" stop-color="#ff0017"/><stop offset="1.0000" stop-color="#ff0007"/></linearGradient>
<linearGradient id="r42" gradientUnits="userSpaceOnUse" x1="1026.7" y1="0" x2="1658.6" y2="0"><stop offset="0.0000" stop-color="#00ff8d"/><stop offset="0.2152" stop-color="#01ffa9"/><stop offset="0.2658" stop-color="#69ffb4"/><stop offset="0.3085" stop-color="#d6ffbf"/><stop offset="0.3228" stop-color="#ffffc4"/><stop offset="0.3465" stop-color="#ffc49c"/><stop offset="0.3782" stop-color="#ff907a"/><stop offset="0.4241" stop-color="#ff605a"/><stop offset="0.4921" stop-color="#ff373f"/><stop offset="0.6013" stop-color="#ff1227"/><stop offset="0.7152" stop-color="#ff0019"/><stop offset="1.0000" stop-color="#ff0008"/></linearGradient>
<linearGradient id="r43" gradientUnits="userSpaceOnUse" x1="1027.3" y1="0" x2="1658.6" y2="0"><stop offset="0.0000" stop-color="#00ff91"/><stop offset="0.2152" stop-color="#02ffb0"/><stop offset="0.2658" stop-color="#6affbc"/><stop offset="0.3085" stop-color="#d8ffc8"/><stop offset="0.3228" stop-color="#fffcca"/><stop offset="0.3465" stop-color="#ffc2a2"/><stop offset="0.3782" stop-color="#ff8e7e"/><stop offset="0.4241" stop-color="#ff5f5e"/><stop offset="0.4921" stop-color="#ff3641"/><stop offset="0.6013" stop-color="#ff1229"/><stop offset="0.7120" stop-color="#ff001b"/><stop offset="1.0000" stop-color="#ff0009"/></linearGradient>
<linearGradient id="r44" gradientUnits="userSpaceOnUse" x1="1027.8" y1="0" x2="1658.6" y2="0"><stop offset="0.0000" stop-color="#00ff96"/><stop offset="0.2124" stop-color="#00ffb6"/><stop offset="0.2330" stop-color="#24ffbb"/><stop offset="0.2805" stop-color="#8fffc7"/><stop offset="0.3217" stop-color="#fffdd3"/><stop offset="0.3455" stop-color="#ffc2a9"/><stop offset="0.3772" stop-color="#ff8e84"/><stop offset="0.4231" stop-color="#ff5e62"/><stop offset="0.4913" stop-color="#ff3544"/><stop offset="0.6006" stop-color="#ff112b"/><stop offset="0.7100" stop-color="#ff001c"/><stop offset="1.0000" stop-color="#ff000a"/></linearGradient>
<linearGradient id="r45" gradientUnits="userSpaceOnUse" x1="1028.4" y1="0" x2="1658.6" y2="0"><stop offset="0.0000" stop-color="#00ff9a"/><stop offset="0.2076" stop-color="#00ffbc"/><stop offset="0.2155" stop-color="#03ffbe"/><stop offset="0.2647" stop-color="#6affcb"/><stop offset="0.3074" stop-color="#d9ffd9"/><stop offset="0.3201" stop-color="#ffffdd"/><stop offset="0.3423" stop-color="#ffc6b3"/><stop offset="0.3740" stop-color="#ff908b"/><stop offset="0.4184" stop-color="#ff6168"/><stop offset="0.4849" stop-color="#ff3749"/><stop offset="0.5911" stop-color="#ff132e"/><stop offset="0.7052" stop-color="#ff001e"/><stop offset="1.0000" stop-color="#ff000b"/></linearGradient>
<linearGradient id="r46" gradientUnits="userSpaceOnUse" x1="1029.0" y1="0" x2="1658.6" y2="0"><stop offset="0.0000" stop-color="#00ff9f"/><stop offset="0.2016" stop-color="#00ffc1"/><stop offset="0.2143" stop-color="#01ffc4"/><stop offset="0.2635" stop-color="#69ffd2"/><stop offset="0.3048" stop-color="#d4ffe1"/><stop offset="0.3190" stop-color="#ffffe7"/><stop offset="0.3413" stop-color="#ffc6bb"/><stop offset="0.3730" stop-color="#ff9091"/><stop offset="0.4175" stop-color="#ff606d"/><stop offset="0.4841" stop-color="#ff374c"/><stop offset="0.5905" stop-color="#ff1231"/><stop offset="0.7016" stop-color="#ff0020"/><stop offset="1.0000" stop-color="#ff000c"/></linearGradient>
<linearGradient id="r47" gradientUnits="userSpaceOnUse" x1="1029.6" y1="0" x2="1656.9" y2="0"><stop offset="0.0000" stop-color="#00ffa4"/><stop offset="0.1975" stop-color="#00ffc7"/><stop offset="0.2150" stop-color="#02ffcb"/><stop offset="0.2643" stop-color="#6affda"/><stop offset="0.3057" stop-color="#d7ffea"/><stop offset="0.3201" stop-color="#fffced"/><stop offset="0.3424" stop-color="#ffc3c0"/><stop offset="0.3742" stop-color="#ff8e95"/><stop offset="0.4188" stop-color="#ff5f70"/><stop offset="0.4857" stop-color="#ff354f"/><stop offset="0.5924" stop-color="#ff1232"/><stop offset="0.7006" stop-color="#ff0022"/><stop offset="1.0000" stop-color="#ff000d"/></linearGradient>
<linearGradient id="r48" gradientUnits="userSpaceOnUse" x1="1030.2" y1="0" x2="1654.9" y2="0"><stop offset="0.0000" stop-color="#00ffa8"/><stop offset="0.1920" stop-color="#00ffcc"/><stop offset="0.2160" stop-color="#03ffd3"/><stop offset="0.2656" stop-color="#6dffe3"/><stop offset="0.3072" stop-color="#dbfff3"/><stop offset="0.3200" stop-color="#fffcf6"/><stop offset="0.3424" stop-color="#ffc3c7"/><stop offset="0.3744" stop-color="#ff8d9b"/><stop offset="0.4192" stop-color="#ff5e74"/><stop offset="0.4864" stop-color="#ff3552"/><stop offset="0.5936" stop-color="#ff1135"/><stop offset="0.6992" stop-color="#ff0024"/><stop offset="1.0000" stop-color="#ff000e"/></linearGradient>
<linearGradient id="r49" gradientUnits="userSpaceOnUse" x1="1030.9" y1="0" x2="1652.9" y2="0"><stop offset="0.0000" stop-color="#00ffad"/><stop offset="0.1878" stop-color="#00ffd2"/><stop offset="0.2151" stop-color="#00ffda"/><stop offset="0.2648" stop-color="#6affeb"/><stop offset="0.3066" stop-color="#d9fffc"/><stop offset="0.3210" stop-color="#fff9fd"/><stop offset="0.3435" stop-color="#ffc1cd"/><stop offset="0.3756" stop-color="#ff8ba0"/><stop offset="0.4205" stop-color="#ff5d78"/><stop offset="0.4880" stop-color="#ff3455"/><stop offset="0.5955" stop-color="#ff1037"/><stop offset="0.6982" stop-color="#ff0026"/><stop offset="1.0000" stop-color="#ff000f"/></linearGradient>
<linearGradient id="r50" gradientUnits="userSpaceOnUse" x1="1031.5" y1="0" x2="1651.0" y2="0"><stop offset="0.0000" stop-color="#00ffb2"/><stop offset="0.1839" stop-color="#00ffd8"/><stop offset="0.2161" stop-color="#02ffe1"/><stop offset="0.2645" stop-color="#69fff3"/><stop offset="0.3016" stop-color="#c7fbff"/><stop offset="0.3242" stop-color="#fff0fe"/><stop offset="0.3484" stop-color="#ffb7cc"/><stop offset="0.3823" stop-color="#ff839e"/><stop offset="0.4306" stop-color="#ff5576"/><stop offset="0.5048" stop-color="#ff2c52"/><stop offset="0.6242" stop-color="#ff0a33"/><stop offset="0.7016" stop-color="#ff0028"/><stop offset="1.0000" stop-color="#ff0010"/></linearGradient>
<linearGradient id="r51" gradientUnits="userSpaceOnUse" x1="1032.2" y1="0" x2="1649.0" y2="0"><stop offset="0.0000" stop-color="#00ffb7"/><stop offset="0.1799" stop-color="#00ffdd"/><stop offset="0.2172" stop-color="#03ffe9"/><stop offset="0.2658" stop-color="#6cfffb"/><stop offset="0.3096" stop-color="#d3efff"/><stop offset="0.3274" stop-color="#ffe6ff"/><stop offset="0.3533" stop-color="#ffadcb"/><stop offset="0.3890" stop-color="#ff7a9d"/><stop offset="0.4408" stop-color="#ff4d73"/><stop offset="0.5203" stop-color="#ff2650"/><stop offset="0.6499" stop-color="#ff0531"/><stop offset="0.7261" stop-color="#ff0026"/><stop offset="1.0000" stop-color="#ff0011"/></linearGradient>
<linearGradient id="r52" gradientUnits="userSpaceOnUse" x1="1032.8" y1="0" x2="1647.1" y2="0"><stop offset="0.0000" stop-color="#00ffbc"/><stop offset="0.1772" stop-color="#00ffe3"/><stop offset="0.2163" stop-color="#01fff0"/><stop offset="0.2618" stop-color="#61fcff"/><stop offset="0.3317" stop-color="#ffdbfd"/><stop offset="0.3577" stop-color="#ffa5cb"/><stop offset="0.3951" stop-color="#ff739c"/><stop offset="0.4504" stop-color="#ff4772"/><stop offset="0.5350" stop-color="#ff214e"/><stop offset="0.6764" stop-color="#ff002f"/><stop offset="0.9496" stop-color="#ff0015"/><stop offset="1.0000" stop-color="#ff0012"/></linearGradient>
<linearGradient id="r53" gradientUnits="userSpaceOnUse" x1="1033.5" y1="0" x2="1645.1" y2="0"><stop offset="0.0000" stop-color="#00ffc1"/><stop offset="0.1732" stop-color="#00ffe9"/><stop offset="0.2173" stop-color="#02fff8"/><stop offset="0.2467" stop-color="#3efaff"/><stop offset="0.3350" stop-color="#ffd3fe"/><stop offset="0.3627" stop-color="#ff9dca"/><stop offset="0.4020" stop-color="#ff6c9a"/><stop offset="0.4592" stop-color="#ff4171"/><stop offset="0.5490" stop-color="#ff1c4c"/><stop offset="0.6814" stop-color="#ff0030"/><stop offset="0.9542" stop-color="#ff0016"/><stop offset="1.0000" stop-color="#ff0014"/></linearGradient>
<linearGradient id="r54" gradientUnits="userSpaceOnUse" x1="1034.2" y1="0" x2="1643.2" y2="0"><stop offset="0.0000" stop-color="#00ffc6"/><stop offset="0.1705" stop-color="#00ffef"/><stop offset="0.2180" stop-color="#03feff"/><stop offset="0.3098" stop-color="#bfd8ff"/><stop offset="0.3393" stop-color="#ffc8fd"/><stop offset="0.3689" stop-color="#ff93c7"/><stop offset="0.4115" stop-color="#ff6397"/><stop offset="0.4738" stop-color="#ff396d"/><stop offset="0.5721" stop-color="#ff1549"/><stop offset="0.6885" stop-color="#ff0031"/><stop offset="0.9623" stop-color="#ff0017"/><stop offset="1.0000" stop-color="#ff0015"/></linearGradient>
<linearGradient id="r55" gradientUnits="userSpaceOnUse" x1="1034.8" y1="0" x2="1641.2" y2="0"><stop offset="0.0000" stop-color="#00ffcb"/><stop offset="0.1664" stop-color="#00fff5"/><stop offset="0.2059" stop-color="#00fbff"/><stop offset="0.2191" stop-color="#04f6ff"/><stop offset="0.3130" stop-color="#c0cfff"/><stop offset="0.3427" stop-color="#ffc1fd"/><stop offset="0.3723" stop-color="#ff8ec9"/><stop offset="0.4152" stop-color="#ff5f99"/><stop offset="0.4794" stop-color="#ff366e"/><stop offset="0.5799" stop-color="#ff1349"/><stop offset="0.6886" stop-color="#ff0033"/><stop offset="0.9572" stop-color="#ff0019"/><stop offset="1.0000" stop-color="#ff0016"/></linearGradient>
<linearGradient id="r56" gradientUnits="userSpaceOnUse" x1="1035.5" y1="0" x2="1639.2" y2="0"><stop offset="0.0000" stop-color="#00ffd1"/><stop offset="0.1639" stop-color="#00fffb"/><stop offset="0.2119" stop-color="#00f1ff"/><stop offset="0.2185" stop-color="#02efff"/><stop offset="0.3146" stop-color="#bdc8ff"/><stop offset="0.3460" stop-color="#ffbafe"/><stop offset="0.3775" stop-color="#ff87c8"/><stop offset="0.4222" stop-color="#ff5997"/><stop offset="0.4884" stop-color="#ff316d"/><stop offset="0.5927" stop-color="#ff0f48"/><stop offset="0.6887" stop-color="#ff0035"/><stop offset="0.9520" stop-color="#ff001a"/><stop offset="1.0000" stop-color="#ff0017"/></linearGradient>
<linearGradient id="r57" gradientUnits="userSpaceOnUse" x1="1036.2" y1="0" x2="1637.3" y2="0"><stop offset="0.0000" stop-color="#00ffd6"/><stop offset="0.1628" stop-color="#00fcff"/><stop offset="0.2193" stop-color="#03e8ff"/><stop offset="0.3189" stop-color="#c0c0ff"/><stop offset="0.3505" stop-color="#ffb1fd"/><stop offset="0.3821" stop-color="#ff81c8"/><stop offset="0.4269" stop-color="#ff5598"/><stop offset="0.4934" stop-color="#ff2f6e"/><stop offset="0.5997" stop-color="#ff0d49"/><stop offset="0.6877" stop-color="#ff0037"/><stop offset="0.9452" stop-color="#ff001c"/><stop offset="1.0000" stop-color="#ff0018"/></linearGradient>
<linearGradient id="r58" gradientUnits="userSpaceOnUse" x1="1036.9" y1="0" x2="1635.3" y2="0"><stop offset="0.0000" stop-color="#00ffdb"/><stop offset="0.1419" stop-color="#00fcff"/><stop offset="0.2187" stop-color="#01e1ff"/><stop offset="0.3205" stop-color="#beb9ff"/><stop offset="0.3539" stop-color="#ffaafd"/><stop offset="0.3873" stop-color="#ff7ac7"/><stop offset="0.4341" stop-color="#ff5097"/><stop offset="0.5042" stop-color="#ff2a6d"/><stop offset="0.6144" stop-color="#ff0a48"/><stop offset="0.6895" stop-color="#ff0039"/><stop offset="0.9432" stop-color="#ff001d"/><stop offset="1.0000" stop-color="#ff001a"/></linearGradient>
<linearGradient id="r59" gradientUnits="userSpaceOnUse" x1="1037.6" y1="0" x2="1633.4" y2="0"><stop offset="0.0000" stop-color="#00ffe1"/><stop offset="0.1225" stop-color="#00fcff"/><stop offset="0.2198" stop-color="#02daff"/><stop offset="0.3238" stop-color="#beb2ff"/><stop offset="0.3574" stop-color="#ffa3fe"/><stop offset="0.3909" stop-color="#ff75c8"/><stop offset="0.4379" stop-color="#ff4c99"/><stop offset="0.5084" stop-color="#ff286e"/><stop offset="0.6191" stop-color="#ff094a"/><stop offset="0.6896" stop-color="#ff003b"/><stop offset="0.9396" stop-color="#ff001f"/><stop offset="1.0000" stop-color="#ff001b"/></linearGradient>
<linearGradient id="r60" gradientUnits="userSpaceOnUse" x1="1038.4" y1="0" x2="1631.4" y2="0"><stop offset="0.0000" stop-color="#00ffe6"/><stop offset="0.1010" stop-color="#00fcff"/><stop offset="0.2205" stop-color="#03d4ff"/><stop offset="0.3283" stop-color="#c1abff"/><stop offset="0.3620" stop-color="#ff9bfc"/><stop offset="0.3973" stop-color="#ff6ec6"/><stop offset="0.4461" stop-color="#ff4797"/><stop offset="0.5202" stop-color="#ff236c"/><stop offset="0.6364" stop-color="#ff0548"/><stop offset="0.7071" stop-color="#ff003a"/><stop offset="0.9680" stop-color="#ff001e"/><stop offset="1.0000" stop-color="#ff001c"/></linearGradient>
<linearGradient id="r61" gradientUnits="userSpaceOnUse" x1="1039.1" y1="0" x2="1629.5" y2="0"><stop offset="0.0000" stop-color="#00ffec"/><stop offset="0.0812" stop-color="#00fcff"/><stop offset="0.2200" stop-color="#01ceff"/><stop offset="0.3299" stop-color="#bfa5ff"/><stop offset="0.3655" stop-color="#ff95fd"/><stop offset="0.4010" stop-color="#ff6ac7"/><stop offset="0.4518" stop-color="#ff4397"/><stop offset="0.5262" stop-color="#ff216d"/><stop offset="0.6447" stop-color="#ff0348"/><stop offset="0.8477" stop-color="#ff002a"/><stop offset="1.0000" stop-color="#ff001d"/></linearGradient>
<linearGradient id="r62" gradientUnits="userSpaceOnUse" x1="1039.8" y1="0" x2="1627.5" y2="0"><stop offset="0.0000" stop-color="#00fff2"/><stop offset="0.0612" stop-color="#00fbff"/><stop offset="0.2211" stop-color="#03c8ff"/><stop offset="0.3333" stop-color="#bf9fff"/><stop offset="0.3690" stop-color="#ff90fe"/><stop offset="0.4048" stop-color="#ff66c8"/><stop offset="0.4558" stop-color="#ff4098"/><stop offset="0.5323" stop-color="#ff1e6e"/><stop offset="0.6531" stop-color="#ff0149"/><stop offset="0.8588" stop-color="#ff002a"/><stop offset="1.0000" stop-color="#ff001f"/></linearGradient>
<linearGradient id="r63" gradientUnits="userSpaceOnUse" x1="1040.6" y1="0" x2="1625.5" y2="0"><stop offset="0.0000" stop-color="#00fff8"/><stop offset="0.0444" stop-color="#00faff"/><stop offset="0.2205" stop-color="#01c3ff"/><stop offset="0.3350" stop-color="#bd99ff"/><stop offset="0.3726" stop-color="#ff8afe"/><stop offset="0.4103" stop-color="#ff60c8"/><stop offset="0.4632" stop-color="#ff3b97"/><stop offset="0.5419" stop-color="#ff1b6d"/><stop offset="0.6667" stop-color="#ff0048"/><stop offset="0.8803" stop-color="#ff002a"/><stop offset="1.0000" stop-color="#ff0020"/></linearGradient>
<linearGradient id="r64" gradientUnits="userSpaceOnUse" x1="1041.3" y1="0" x2="1623.6" y2="0"><stop offset="0.0000" stop-color="#00fffe"/><stop offset="0.2213" stop-color="#02beff"/><stop offset="0.3396" stop-color="#c093ff"/><stop offset="0.3774" stop-color="#ff83fd"/><stop offset="0.4151" stop-color="#ff5cc7"/><stop offset="0.4683" stop-color="#ff3898"/><stop offset="0.5489" stop-color="#ff186d"/><stop offset="0.6690" stop-color="#ff004a"/><stop offset="0.8816" stop-color="#ff002b"/><stop offset="1.0000" stop-color="#ff0021"/></linearGradient>
<linearGradient id="r65" gradientUnits="userSpaceOnUse" x1="1042.1" y1="0" x2="1621.6" y2="0"><stop offset="0.0000" stop-color="#00fbff"/><stop offset="0.2207" stop-color="#01b9ff"/><stop offset="0.3414" stop-color="#bd8eff"/><stop offset="0.3810" stop-color="#ff7efd"/><stop offset="0.4207" stop-color="#ff57c7"/><stop offset="0.4759" stop-color="#ff3497"/><stop offset="0.5586" stop-color="#ff156d"/><stop offset="0.6707" stop-color="#ff004c"/><stop offset="0.8810" stop-color="#ff002d"/><stop offset="1.0000" stop-color="#ff0023"/></linearGradient>
<linearGradient id="r66" gradientUnits="userSpaceOnUse" x1="1042.8" y1="0" x2="1619.7" y2="0"><stop offset="0.0000" stop-color="#00f5ff"/><stop offset="0.2218" stop-color="#02b4ff"/><stop offset="0.3449" stop-color="#be89ff"/><stop offset="0.3847" stop-color="#ff79fe"/><stop offset="0.4246" stop-color="#ff53c8"/><stop offset="0.4818" stop-color="#ff3197"/><stop offset="0.5667" stop-color="#ff136d"/><stop offset="0.6707" stop-color="#ff004e"/><stop offset="0.8769" stop-color="#ff002f"/><stop offset="1.0000" stop-color="#ff0024"/></linearGradient>
<linearGradient id="r67" gradientUnits="userSpaceOnUse" x1="1043.6" y1="0" x2="1617.7" y2="0"><stop offset="0.0000" stop-color="#00efff"/><stop offset="0.2226" stop-color="#03afff"/><stop offset="0.3496" stop-color="#c183ff"/><stop offset="0.3896" stop-color="#ff73fc"/><stop offset="0.4296" stop-color="#ff4fc8"/><stop offset="0.4870" stop-color="#ff2e98"/><stop offset="0.5722" stop-color="#ff116e"/><stop offset="0.6696" stop-color="#ff0051"/><stop offset="0.8713" stop-color="#ff0031"/><stop offset="1.0000" stop-color="#ff0025"/></linearGradient>
<linearGradient id="r68" gradientUnits="userSpaceOnUse" x1="1044.4" y1="0" x2="1615.8" y2="0"><stop offset="0.0000" stop-color="#00eaff"/><stop offset="0.2220" stop-color="#01aaff"/><stop offset="0.3514" stop-color="#bf7fff"/><stop offset="0.3934" stop-color="#ff6efd"/><stop offset="0.4353" stop-color="#ff4ac7"/><stop offset="0.4948" stop-color="#ff2a97"/><stop offset="0.5839" stop-color="#ff0e6c"/><stop offset="0.6696" stop-color="#ff0053"/><stop offset="0.8689" stop-color="#ff0033"/><stop offset="1.0000" stop-color="#ff0027"/></linearGradient>
<linearGradient id="r69" gradientUnits="userSpaceOnUse" x1="1045.2" y1="0" x2="1613.8" y2="0"><stop offset="0.0000" stop-color="#00e5ff"/><stop offset="0.2232" stop-color="#03a6ff"/><stop offset="0.3550" stop-color="#bf7aff"/><stop offset="0.3972" stop-color="#ff6afd"/><stop offset="0.4394" stop-color="#ff47c8"/><stop offset="0.4991" stop-color="#ff2898"/><stop offset="0.5888" stop-color="#ff0c6e"/><stop offset="0.6696" stop-color="#ff0056"/><stop offset="0.8664" stop-color="#ff0035"/><stop offset="1.0000" stop-color="#ff0028"/></linearGradient>
<linearGradient id="r70" gradientUnits="userSpaceOnUse" x1="1046.0" y1="0" x2="1611.9" y2="0"><stop offset="0.0000" stop-color="#00e0ff"/><stop offset="0.2226" stop-color="#02a1ff"/><stop offset="0.3569" stop-color="#bd76ff"/><stop offset="0.4011" stop-color="#ff65fd"/><stop offset="0.4452" stop-color="#ff43c7"/><stop offset="0.5071" stop-color="#ff2497"/><stop offset="0.5989" stop-color="#ff0a6d"/><stop offset="0.6696" stop-color="#ff0058"/><stop offset="0.8622" stop-color="#ff0037"/><stop offset="1.0000" stop-color="#ff0029"/></linearGradient>
<linearGradient id="r71" gradientUnits="userSpaceOnUse" x1="1046.8" y1="0" x2="1609.9" y2="0"><stop offset="0.0000" stop-color="#00dbff"/><stop offset="0.2234" stop-color="#029dff"/><stop offset="0.3617" stop-color="#c071ff"/><stop offset="0.4060" stop-color="#ff60fc"/><stop offset="0.4504" stop-color="#ff3fc7"/><stop offset="0.5142" stop-color="#ff2197"/><stop offset="0.6082" stop-color="#ff076d"/><stop offset="0.6738" stop-color="#ff005a"/><stop offset="0.8670" stop-color="#ff0038"/><stop offset="1.0000" stop-color="#ff002b"/></linearGradient>
<linearGradient id="r72" gradientUnits="userSpaceOnUse" x1="1047.6" y1="0" x2="1607.9" y2="0"><stop offset="0.0000" stop-color="#00d6ff"/><stop offset="0.2228" stop-color="#0199ff"/><stop offset="0.3636" stop-color="#be6dff"/><stop offset="0.4100" stop-color="#ff5cfc"/><stop offset="0.4563" stop-color="#ff3bc6"/><stop offset="0.5223" stop-color="#ff1e96"/><stop offset="0.6203" stop-color="#ff056b"/><stop offset="0.6934" stop-color="#ff0057"/><stop offset="0.8984" stop-color="#ff0036"/><stop offset="1.0000" stop-color="#ff002c"/></linearGradient>
<linearGradient id="r73" gradientUnits="userSpaceOnUse" x1="1048.4" y1="0" x2="1606.0" y2="0"><stop offset="0.0000" stop-color="#00d1ff"/><stop offset="0.2240" stop-color="#0295ff"/><stop offset="0.3674" stop-color="#bf68ff"/><stop offset="0.4140" stop-color="#ff58fd"/><stop offset="0.4606" stop-color="#ff38c7"/><stop offset="0.5269" stop-color="#ff1c97"/><stop offset="0.6254" stop-color="#ff036d"/><stop offset="0.7814" stop-color="#ff0048"/><stop offset="1.0000" stop-color="#ff002e"/></linearGradient>
<linearGradient id="r74" gradientUnits="userSpaceOnUse" x1="1049.3" y1="0" x2="1604.0" y2="0"><stop offset="0.0000" stop-color="#00cdff"/><stop offset="0.2234" stop-color="#0192ff"/><stop offset="0.3712" stop-color="#bf64ff"/><stop offset="0.4180" stop-color="#ff54fd"/><stop offset="0.4649" stop-color="#ff36c8"/><stop offset="0.5315" stop-color="#ff1a98"/><stop offset="0.6306" stop-color="#ff026e"/><stop offset="0.7874" stop-color="#ff0049"/><stop offset="1.0000" stop-color="#ff002f"/></linearGradient>
<linearGradient id="r75" gradientUnits="userSpaceOnUse" x1="1050.1" y1="0" x2="1602.1" y2="0"><stop offset="0.0000" stop-color="#00c8ff"/><stop offset="0.2246" stop-color="#028eff"/><stop offset="0.3750" stop-color="#c060ff"/><stop offset="0.4221" stop-color="#ff50fd"/><stop offset="0.4710" stop-color="#ff32c7"/><stop offset="0.5399" stop-color="#ff1797"/><stop offset="0.6431" stop-color="#ff006c"/><stop offset="0.8062" stop-color="#ff0048"/><stop offset="1.0000" stop-color="#ff0030"/></linearGradient>
<linearGradient id="r76" gradientUnits="userSpaceOnUse" x1="1050.9" y1="0" x2="1600.1" y2="0"><stop offset="0.0000" stop-color="#00c4ff"/><stop offset="0.2236" stop-color="#018aff"/><stop offset="0.3764" stop-color="#be5dff"/><stop offset="0.4273" stop-color="#ff4cfc"/><stop offset="0.4764" stop-color="#ff2fc7"/><stop offset="0.5473" stop-color="#ff1497"/><stop offset="0.6509" stop-color="#ff006d"/><stop offset="0.8164" stop-color="#ff0048"/><stop offset="1.0000" stop-color="#ff0032"/></linearGradient>
<linearGradient id="r77" gradientUnits="userSpaceOnUse" x1="1051.8" y1="0" x2="1598.2" y2="0"><stop offset="0.0000" stop-color="#00c0ff"/><stop offset="0.2249" stop-color="#0287ff"/><stop offset="0.3821" stop-color="#c159ff"/><stop offset="0.4314" stop-color="#ff48fc"/><stop offset="0.4826" stop-color="#ff2bc6"/><stop offset="0.5539" stop-color="#ff1297"/><stop offset="0.6508" stop-color="#ff0070"/><stop offset="0.8135" stop-color="#ff004b"/><stop offset="1.0000" stop-color="#ff0033"/></linearGradient>
<linearGradient id="r78" gradientUnits="userSpaceOnUse" x1="1052.6" y1="0" x2="1596.2" y2="0"><stop offset="0.0000" stop-color="#00bcff"/><stop offset="0.2243" stop-color="#0184ff"/><stop offset="0.3842" stop-color="#bf55ff"/><stop offset="0.4357" stop-color="#ff45fd"/><stop offset="0.4871" stop-color="#ff29c7"/><stop offset="0.5607" stop-color="#ff1097"/><stop offset="0.6507" stop-color="#ff0072"/><stop offset="0.8107" stop-color="#ff004d"/><stop offset="1.0000" stop-color="#ff0035"/></linearGradient>
<linearGradient id="r79" gradientUnits="userSpaceOnUse" x1="1053.5" y1="0" x2="1594.2" y2="0"><stop offset="0.0000" stop-color="#00b8ff"/><stop offset="0.2255" stop-color="#0280ff"/><stop offset="0.3882" stop-color="#c052ff"/><stop offset="0.4399" stop-color="#ff41fd"/><stop offset="0.4917" stop-color="#ff26c8"/><stop offset="0.5656" stop-color="#ff0e98"/><stop offset="0.6488" stop-color="#ff0076"/><stop offset="0.8059" stop-color="#ff0050"/><stop offset="1.0000" stop-color="#ff0036"/></linearGradient>
<linearGradient id="r80" gradientUnits="userSpaceOnUse" x1="1054.3" y1="0" x2="1592.3" y2="0"><stop offset="0.0000" stop-color="#00b4ff"/><stop offset="0.2249" stop-color="#027dff"/><stop offset="0.3903" stop-color="#be4fff"/><stop offset="0.4442" stop-color="#ff3efd"/><stop offset="0.4981" stop-color="#ff23c7"/><stop offset="0.5743" stop-color="#ff0c97"/><stop offset="0.6487" stop-color="#ff0079"/><stop offset="0.8048" stop-color="#ff0052"/><stop offset="1.0000" stop-color="#ff0038"/></linearGradient>
<linearGradient id="r81" gradientUnits="userSpaceOnUse" x1="1055.2" y1="0" x2="1590.3" y2="0"><stop offset="0.0000" stop-color="#00b0ff"/><stop offset="0.2257" stop-color="#027aff"/><stop offset="0.3955" stop-color="#c04bff"/><stop offset="0.4496" stop-color="#ff3afc"/><stop offset="0.5037" stop-color="#ff21c7"/><stop offset="0.5821" stop-color="#ff0997"/><stop offset="0.6493" stop-color="#ff007b"/><stop offset="0.8022" stop-color="#ff0055"/><stop offset="1.0000" stop-color="#ff003a"/></linearGradient>
<linearGradient id="r82" gradientUnits="userSpaceOnUse" x1="1056.1" y1="0" x2="1588.4" y2="0"><stop offset="0.0000" stop-color="#00acff"/><stop offset="0.2251" stop-color="#0177ff"/><stop offset="0.3977" stop-color="#bf48ff"/><stop offset="0.4540" stop-color="#ff37fc"/><stop offset="0.5103" stop-color="#ff1ec6"/><stop offset="0.5891" stop-color="#ff0797"/><stop offset="0.6510" stop-color="#ff007e"/><stop offset="0.8030" stop-color="#ff0057"/><stop offset="1.0000" stop-color="#ff003b"/></linearGradient>
<linearGradient id="r83" gradientUnits="userSpaceOnUse" x1="1056.9" y1="0" x2="1586.4" y2="0"><stop offset="0.0000" stop-color="#00a9ff"/><stop offset="0.2264" stop-color="#0274ff"/><stop offset="0.4019" stop-color="#bf45ff"/><stop offset="0.4585" stop-color="#ff34fc"/><stop offset="0.5151" stop-color="#ff1cc7"/><stop offset="0.5962" stop-color="#ff0697"/><stop offset="0.6566" stop-color="#ff007f"/><stop offset="0.8113" stop-color="#ff0057"/><stop offset="1.0000" stop-color="#ff003d"/></linearGradient>
<linearGradient id="r84" gradientUnits="userSpaceOnUse" x1="1057.8" y1="0" x2="1584.5" y2="0"><stop offset="0.0000" stop-color="#00a5ff"/><stop offset="0.2258" stop-color="#0271ff"/><stop offset="0.4061" stop-color="#c042ff"/><stop offset="0.4630" stop-color="#ff31fc"/><stop offset="0.5218" stop-color="#ff19c6"/><stop offset="0.6053" stop-color="#ff0396"/><stop offset="0.7287" stop-color="#ff006c"/><stop offset="0.9241" stop-color="#ff0048"/><stop offset="1.0000" stop-color="#ff003e"/></linearGradient>
<linearGradient id="r85" gradientUnits="userSpaceOnUse" x1="1058.7" y1="0" x2="1582.5" y2="0"><stop offset="0.0000" stop-color="#00a2ff"/><stop offset="0.2271" stop-color="#036eff"/><stop offset="0.4103" stop-color="#c13fff"/><stop offset="0.4676" stop-color="#ff2efd"/><stop offset="0.5267" stop-color="#ff17c7"/><stop offset="0.6107" stop-color="#ff0297"/><stop offset="0.7366" stop-color="#ff006c"/><stop offset="0.9351" stop-color="#ff0048"/><stop offset="1.0000" stop-color="#ff0040"/></linearGradient>
<linearGradient id="r86" gradientUnits="userSpaceOnUse" x1="1059.6" y1="0" x2="1580.5" y2="0"><stop offset="0.0000" stop-color="#009fff"/><stop offset="0.2265" stop-color="#026cff"/><stop offset="0.4127" stop-color="#bf3cff"/><stop offset="0.4722" stop-color="#ff2bfd"/><stop offset="0.5317" stop-color="#ff15c7"/><stop offset="0.6161" stop-color="#ff0098"/><stop offset="0.7428" stop-color="#ff006d"/><stop offset="0.9424" stop-color="#ff0049"/><stop offset="1.0000" stop-color="#ff0042"/></linearGradient>
<linearGradient id="r87" gradientUnits="userSpaceOnUse" x1="1060.5" y1="0" x2="1578.6" y2="0"><stop offset="0.0000" stop-color="#009bff"/><stop offset="0.2274" stop-color="#0369ff"/><stop offset="0.4162" stop-color="#bf39ff"/><stop offset="0.4759" stop-color="#ff29fe"/><stop offset="0.5376" stop-color="#ff12c7"/><stop offset="0.6243" stop-color="#ff0097"/><stop offset="0.7534" stop-color="#ff006d"/><stop offset="0.9576" stop-color="#ff0048"/><stop offset="1.0000" stop-color="#ff0043"/></linearGradient>
<linearGradient id="r88" gradientUnits="userSpaceOnUse" x1="1061.4" y1="0" x2="1576.6" y2="0"><stop offset="0.0000" stop-color="#0098ff"/><stop offset="0.2267" stop-color="#0267ff"/><stop offset="0.4205" stop-color="#c037ff"/><stop offset="0.4826" stop-color="#ff25fc"/><stop offset="0.5446" stop-color="#ff10c7"/><stop offset="0.6279" stop-color="#ff0099"/><stop offset="0.7578" stop-color="#ff006e"/><stop offset="0.9632" stop-color="#ff004a"/><stop offset="1.0000" stop-color="#ff0045"/></linearGradient>
<linearGradient id="r89" gradientUnits="userSpaceOnUse" x1="1062.3" y1="0" x2="1574.7" y2="0"><stop offset="0.0000" stop-color="#0095ff"/><stop offset="0.2281" stop-color="#0364ff"/><stop offset="0.4250" stop-color="#c134ff"/><stop offset="0.4873" stop-color="#ff23fc"/><stop offset="0.5517" stop-color="#ff0dc6"/><stop offset="0.6277" stop-color="#ff009c"/><stop offset="0.7563" stop-color="#ff0071"/><stop offset="0.9571" stop-color="#ff004c"/><stop offset="1.0000" stop-color="#ff0047"/></linearGradient>
<linearGradient id="r90" gradientUnits="userSpaceOnUse" x1="1063.2" y1="0" x2="1572.7" y2="0"><stop offset="0.0000" stop-color="#0092ff"/><stop offset="0.2275" stop-color="#0262ff"/><stop offset="0.4275" stop-color="#bf32ff"/><stop offset="0.4922" stop-color="#ff20fc"/><stop offset="0.5569" stop-color="#ff0cc7"/><stop offset="0.6275" stop-color="#ff00a0"/><stop offset="0.7529" stop-color="#ff0075"/><stop offset="0.9490" stop-color="#ff004f"/><stop offset="1.0000" stop-color="#ff0048"/></linearGradient>
<linearGradient id="r91" gradientUnits="userSpaceOnUse" x1="1064.2" y1="0" x2="1570.8" y2="0"><stop offset="0.0000" stop-color="#008fff"/><stop offset="0.2268" stop-color="#0260ff"/><stop offset="0.4320" stop-color="#c02fff"/><stop offset="0.4970" stop-color="#ff1efc"/><stop offset="0.5641" stop-color="#ff09c6"/><stop offset="0.6272" stop-color="#ff00a3"/><stop offset="0.7515" stop-color="#ff0078"/><stop offset="0.9448" stop-color="#ff0052"/><stop offset="1.0000" stop-color="#ff004a"/></linearGradient>
<linearGradient id="r92" gradientUnits="userSpaceOnUse" x1="1065.1" y1="0" x2="1568.8" y2="0"><stop offset="0.0000" stop-color="#008cff"/><stop offset="0.2282" stop-color="#035dff"/><stop offset="0.4365" stop-color="#c12cff"/><stop offset="0.5020" stop-color="#ff1bfc"/><stop offset="0.5694" stop-color="#ff08c7"/><stop offset="0.6270" stop-color="#ff00a7"/><stop offset="0.7500" stop-color="#ff007b"/><stop offset="0.9405" stop-color="#ff0054"/><stop offset="1.0000" stop-color="#ff004c"/></linearGradient>
<linearGradient id="r93" gradientUnits="userSpaceOnUse" x1="1066.0" y1="0" x2="1566.8" y2="0"><stop offset="0.0000" stop-color="#0089ff"/><stop offset="0.2275" stop-color="#025bff"/><stop offset="0.4391" stop-color="#c02aff"/><stop offset="0.5070" stop-color="#ff19fc"/><stop offset="0.5749" stop-color="#ff06c7"/><stop offset="0.6307" stop-color="#ff00a9"/><stop offset="0.7545" stop-color="#ff007c"/><stop offset="0.9461" stop-color="#ff0055"/><stop offset="1.0000" stop-color="#ff004e"/></linearGradient>
<linearGradient id="r94" gradientUnits="userSpaceOnUse" x1="1067.0" y1="0" x2="1564.9" y2="0"><stop offset="0.0000" stop-color="#0086ff"/><stop offset="0.2269" stop-color="#0159ff"/><stop offset="0.4418" stop-color="#be28ff"/><stop offset="0.5120" stop-color="#ff17fc"/><stop offset="0.5823" stop-color="#ff04c6"/><stop offset="0.6807" stop-color="#ff0097"/><stop offset="0.8293" stop-color="#ff006c"/><stop offset="1.0000" stop-color="#ff004f"/></linearGradient>
<linearGradient id="r95" gradientUnits="userSpaceOnUse" x1="1067.9" y1="0" x2="1562.9" y2="0"><stop offset="0.0000" stop-color="#0084ff"/><stop offset="0.2278" stop-color="#0257ff"/><stop offset="0.4476" stop-color="#c025ff"/><stop offset="0.5161" stop-color="#ff15fd"/><stop offset="0.5867" stop-color="#ff02c8"/><stop offset="0.6875" stop-color="#ff0097"/><stop offset="0.8367" stop-color="#ff006d"/><stop offset="1.0000" stop-color="#ff0051"/></linearGradient>
<linearGradient id="r96" gradientUnits="userSpaceOnUse" x1="1068.9" y1="0" x2="1561.0" y2="0"><stop offset="0.0000" stop-color="#0081ff"/><stop offset="0.2272" stop-color="#0255ff"/><stop offset="0.4503" stop-color="#bf24ff"/><stop offset="0.5213" stop-color="#ff12fe"/><stop offset="0.5923" stop-color="#ff01c8"/><stop offset="0.6937" stop-color="#ff0098"/><stop offset="0.8458" stop-color="#ff006d"/><stop offset="1.0000" stop-color="#ff0053"/></linearGradient>
<linearGradient id="r97" gradientUnits="userSpaceOnUse" x1="1069.9" y1="0" x2="1559.0" y2="0"><stop offset="0.0000" stop-color="#007eff"/><stop offset="0.2286" stop-color="#0352ff"/><stop offset="0.4551" stop-color="#c021ff"/><stop offset="0.5265" stop-color="#ff10fe"/><stop offset="0.6000" stop-color="#ff00c7"/><stop offset="0.7041" stop-color="#ff0097"/><stop offset="0.8592" stop-color="#ff006d"/><stop offset="1.0000" stop-color="#ff0055"/></linearGradient>
<linearGradient id="r98" gradientUnits="userSpaceOnUse" x1="1070.9" y1="0" x2="1557.1" y2="0"><stop offset="0.0000" stop-color="#007cff"/><stop offset="0.2279" stop-color="#0251ff"/><stop offset="0.4600" stop-color="#c01fff"/><stop offset="0.5318" stop-color="#ff0efe"/><stop offset="0.6057" stop-color="#ff00c8"/><stop offset="0.7105" stop-color="#ff0098"/><stop offset="0.8665" stop-color="#ff006e"/><stop offset="1.0000" stop-color="#ff0057"/></linearGradient>
<linearGradient id="r99" gradientUnits="userSpaceOnUse" x1="1071.8" y1="0" x2="1555.1" y2="0"><stop offset="0.0000" stop-color="#0079ff"/><stop offset="0.2273" stop-color="#014fff"/><stop offset="0.4628" stop-color="#bf1dff"/><stop offset="0.5372" stop-color="#ff0cfe"/><stop offset="0.6033" stop-color="#ff00cd"/><stop offset="0.7066" stop-color="#ff009c"/><stop offset="0.8595" stop-color="#ff0071"/><stop offset="1.0000" stop-color="#ff0059"/></linearGradient>
<linearGradient id="r100" gradientUnits="userSpaceOnUse" x1="1072.8" y1="0" x2="1553.2" y2="0"><stop offset="0.0000" stop-color="#0077ff"/><stop offset="0.2287" stop-color="#034dff"/><stop offset="0.4678" stop-color="#c01bff"/><stop offset="0.5426" stop-color="#ff0afe"/><stop offset="0.6029" stop-color="#ff00d2"/><stop offset="0.7048" stop-color="#ff00a0"/><stop offset="0.8545" stop-color="#ff0075"/><stop offset="1.0000" stop-color="#ff005b"/></linearGradient>
<linearGradient id="r101" gradientUnits="userSpaceOnUse" x1="1073.8" y1="0" x2="1551.2" y2="0"><stop offset="0.0000" stop-color="#0074ff"/><stop offset="0.2280" stop-color="#024bff"/><stop offset="0.4707" stop-color="#bf19ff"/><stop offset="0.5481" stop-color="#ff08fe"/><stop offset="0.6046" stop-color="#ff00d5"/><stop offset="0.7071" stop-color="#ff00a3"/><stop offset="0.8577" stop-color="#ff0077"/><stop offset="1.0000" stop-color="#ff005d"/></linearGradient>
<linearGradient id="r102" gradientUnits="userSpaceOnUse" x1="1074.9" y1="0" x2="1549.2" y2="0"><stop offset="0.0000" stop-color="#0072ff"/><stop offset="0.2295" stop-color="#0349ff"/><stop offset="0.4779" stop-color="#c117ff"/><stop offset="0.5537" stop-color="#ff06fe"/><stop offset="0.6084" stop-color="#ff00d6"/><stop offset="0.7116" stop-color="#ff00a4"/><stop offset="0.8632" stop-color="#ff0078"/><stop offset="1.0000" stop-color="#ff005f"/></linearGradient>
<linearGradient id="r103" gradientUnits="userSpaceOnUse" x1="1075.9" y1="0" x2="1547.3" y2="0"><stop offset="0.0000" stop-color="#0070ff"/><stop offset="0.2288" stop-color="#0347ff"/><stop offset="0.4809" stop-color="#c015ff"/><stop offset="0.5593" stop-color="#ff04fe"/><stop offset="0.6335" stop-color="#ff00cb"/><stop offset="0.7458" stop-color="#ff009b"/><stop offset="0.9131" stop-color="#ff0070"/><stop offset="1.0000" stop-color="#ff0061"/></linearGradient>
<linearGradient id="r104" gradientUnits="userSpaceOnUse" x1="1076.9" y1="0" x2="1545.3" y2="0"><stop offset="0.0000" stop-color="#006dff"/><stop offset="0.2281" stop-color="#0245ff"/><stop offset="0.4840" stop-color="#bf13ff"/><stop offset="0.5650" stop-color="#ff02fd"/><stop offset="0.6482" stop-color="#ff00c7"/><stop offset="0.7655" stop-color="#ff0097"/><stop offset="0.9403" stop-color="#ff006d"/><stop offset="1.0000" stop-color="#ff0063"/></linearGradient>
<linearGradient id="r105" gradientUnits="userSpaceOnUse" x1="1078.0" y1="0" x2="1543.4" y2="0"><stop offset="0.0000" stop-color="#006bff"/><stop offset="0.2275" stop-color="#0244ff"/><stop offset="0.4893" stop-color="#c011ff"/><stop offset="0.5708" stop-color="#ff00fd"/><stop offset="0.6545" stop-color="#ff00c8"/><stop offset="0.7747" stop-color="#ff0097"/><stop offset="0.9528" stop-color="#ff006d"/><stop offset="1.0000" stop-color="#ff0065"/></linearGradient>
<linearGradient id="r106" gradientUnits="userSpaceOnUse" x1="1079.0" y1="0" x2="1541.4" y2="0"><stop offset="0.0000" stop-color="#0069ff"/><stop offset="0.2289" stop-color="#0342ff"/><stop offset="0.4946" stop-color="#c10fff"/><stop offset="0.5767" stop-color="#ff00fd"/><stop offset="0.6631" stop-color="#ff00c7"/><stop offset="0.7840" stop-color="#ff0097"/><stop offset="0.9654" stop-color="#ff006d"/><stop offset="1.0000" stop-color="#ff0067"/></linearGradient>
<linearGradient id="r107" gradientUnits="userSpaceOnUse" x1="1080.1" y1="0" x2="1539.5" y2="0"><stop offset="0.0000" stop-color="#0067ff"/><stop offset="0.2283" stop-color="#0240ff"/><stop offset="0.4978" stop-color="#c00eff"/><stop offset="0.5826" stop-color="#ff00fd"/><stop offset="0.6696" stop-color="#ff00c8"/><stop offset="0.7935" stop-color="#ff0097"/><stop offset="0.9783" stop-color="#ff006d"/><stop offset="1.0000" stop-color="#ff0069"/></linearGradient>
<linearGradient id="r108" gradientUnits="userSpaceOnUse" x1="1081.2" y1="0" x2="1537.5" y2="0"><stop offset="0.0000" stop-color="#0064ff"/><stop offset="0.2276" stop-color="#023fff"/><stop offset="0.5011" stop-color="#bf0cff"/><stop offset="0.5821" stop-color="#fc00ff"/><stop offset="0.6236" stop-color="#ff00e5"/><stop offset="0.7265" stop-color="#ff00b2"/><stop offset="0.8753" stop-color="#ff0084"/><stop offset="1.0000" stop-color="#ff006b"/></linearGradient>
<linearGradient id="r109" gradientUnits="userSpaceOnUse" x1="1082.2" y1="0" x2="1535.5" y2="0"><stop offset="0.0000" stop-color="#0062ff"/><stop offset="0.2291" stop-color="#033dff"/><stop offset="0.5088" stop-color="#c10aff"/><stop offset="0.5815" stop-color="#f700ff"/><stop offset="0.5969" stop-color="#ff00fc"/><stop offset="0.6872" stop-color="#ff00c6"/><stop offset="0.8172" stop-color="#ff0096"/><stop offset="1.0000" stop-color="#ff006d"/></linearGradient>
<linearGradient id="r110" gradientUnits="userSpaceOnUse" x1="1083.3" y1="0" x2="1533.6" y2="0"><stop offset="0.0000" stop-color="#0060ff"/><stop offset="0.2284" stop-color="#033cff"/><stop offset="0.5122" stop-color="#c009ff"/><stop offset="0.5809" stop-color="#f200ff"/><stop offset="0.6031" stop-color="#ff00fc"/><stop offset="0.6962" stop-color="#ff00c6"/><stop offset="0.8293" stop-color="#ff0095"/><stop offset="1.0000" stop-color="#ff0070"/></linearGradient>
<linearGradient id="r111" gradientUnits="userSpaceOnUse" x1="1084.4" y1="0" x2="1531.6" y2="0"><stop offset="0.0000" stop-color="#005eff"/><stop offset="0.2277" stop-color="#023aff"/><stop offset="0.5156" stop-color="#bf07ff"/><stop offset="0.5804" stop-color="#ed00ff"/><stop offset="0.6094" stop-color="#ff00fc"/><stop offset="0.7031" stop-color="#ff00c6"/><stop offset="0.8371" stop-color="#ff0096"/><stop offset="1.0000" stop-color="#ff0072"/></linearGradient>
<linearGradient id="r112" gradientUnits="userSpaceOnUse" x1="1085.5" y1="0" x2="1529.7" y2="0"><stop offset="0.0000" stop-color="#005cff"/><stop offset="0.2270" stop-color="#0239ff"/><stop offset="0.5213" stop-color="#c006ff"/><stop offset="0.5865" stop-color="#ee00ff"/><stop offset="0.6157" stop-color="#ff00fc"/><stop offset="0.7124" stop-color="#ff00c5"/><stop offset="0.8494" stop-color="#ff0095"/><stop offset="1.0000" stop-color="#ff0074"/></linearGradient>
<linearGradient id="r113" gradientUnits="userSpaceOnUse" x1="1086.6" y1="0" x2="1527.7" y2="0"><stop offset="0.0000" stop-color="#005aff"/><stop offset="0.2285" stop-color="#0337ff"/><stop offset="0.5271" stop-color="#c104ff"/><stop offset="0.6199" stop-color="#ff00fd"/><stop offset="0.7172" stop-color="#ff00c7"/><stop offset="0.8552" stop-color="#ff0097"/><stop offset="1.0000" stop-color="#ff0076"/></linearGradient>
<linearGradient id="r114" gradientUnits="userSpaceOnUse" x1="1087.7" y1="0" x2="1525.8" y2="0"><stop offset="0.0000" stop-color="#0058ff"/><stop offset="0.2278" stop-color="#0336ff"/><stop offset="0.5308" stop-color="#c003ff"/><stop offset="0.6264" stop-color="#ff00fd"/><stop offset="0.7244" stop-color="#ff00c7"/><stop offset="0.8633" stop-color="#ff0097"/><stop offset="1.0000" stop-color="#ff0079"/></linearGradient>
<linearGradient id="r115" gradientUnits="userSpaceOnUse" x1="1088.8" y1="0" x2="1523.8" y2="0"><stop offset="0.0000" stop-color="#0056ff"/><stop offset="0.2276" stop-color="#0334ff"/><stop offset="0.5356" stop-color="#c001ff"/><stop offset="0.6345" stop-color="#ff00fc"/><stop offset="0.7356" stop-color="#ff00c6"/><stop offset="0.8782" stop-color="#ff0096"/><stop offset="1.0000" stop-color="#ff007b"/></linearGradient>
<linearGradient id="r116" gradientUnits="userSpaceOnUse" x1="1090.0" y1="0" x2="1521.8" y2="0"><stop offset="0.0000" stop-color="#0054ff"/><stop offset="0.2269" stop-color="#0233ff"/><stop offset="0.5417" stop-color="#c100ff"/><stop offset="0.6412" stop-color="#ff00fc"/><stop offset="0.7431" stop-color="#ff00c6"/><stop offset="0.8889" stop-color="#ff0096"/><stop offset="1.0000" stop-color="#ff007d"/></linearGradient>
<linearGradient id="r117" gradientUnits="userSpaceOnUse" x1="1091.1" y1="0" x2="1519.9" y2="0"><stop offset="0.0000" stop-color="#0053ff"/><stop offset="0.2261" stop-color="#0232ff"/><stop offset="0.5455" stop-color="#c000ff"/><stop offset="0.6480" stop-color="#ff00fc"/><stop offset="0.7529" stop-color="#ff00c6"/><stop offset="0.9021" stop-color="#ff0095"/><stop offset="1.0000" stop-color="#ff0080"/></linearGradient>
<linearGradient id="r118" gradientUnits="userSpaceOnUse" x1="1092.2" y1="0" x2="1517.9" y2="0"><stop offset="0.0000" stop-color="#0051ff"/><stop offset="0.2277" stop-color="#0330ff"/><stop offset="0.5516" stop-color="#c100ff"/><stop offset="0.6549" stop-color="#ff00fc"/><stop offset="0.7606" stop-color="#ff00c6"/><stop offset="0.9108" stop-color="#ff0096"/><stop offset="1.0000" stop-color="#ff0082"/></linearGradient>
<linearGradient id="r119" gradientUnits="userSpaceOnUse" x1="1093.3" y1="0" x2="1516.0" y2="0"><stop offset="0.0000" stop-color="#004fff"/><stop offset="0.2270" stop-color="#032fff"/><stop offset="0.5485" stop-color="#bb00ff"/><stop offset="0.6596" stop-color="#ff00fd"/><stop offset="0.7660" stop-color="#ff00c7"/><stop offset="0.9173" stop-color="#ff0097"/><stop offset="1.0000" stop-color="#ff0085"/></linearGradient>
<linearGradient id="r120" gradientUnits="userSpaceOnUse" x1="1094.5" y1="0" x2="1514.0" y2="0"><stop offset="0.0000" stop-color="#004dff"/><stop offset="0.2262" stop-color="#022eff"/><stop offset="0.5452" stop-color="#b600ff"/><stop offset="0.6667" stop-color="#ff00fd"/><stop offset="0.7762" stop-color="#ff00c7"/><stop offset="0.9310" stop-color="#ff0097"/><stop offset="1.0000" stop-color="#ff0087"/></linearGradient>
<linearGradient id="r121" gradientUnits="userSpaceOnUse" x1="1095.6" y1="0" x2="1512.1" y2="0"><stop offset="0.0000" stop-color="#004cff"/><stop offset="0.2254" stop-color="#022dff"/><stop offset="0.5420" stop-color="#b200ff"/><stop offset="0.6739" stop-color="#ff00fd"/><stop offset="0.7842" stop-color="#ff00c7"/><stop offset="0.9400" stop-color="#ff0097"/><stop offset="1.0000" stop-color="#ff008a"/></linearGradient>
<linearGradient id="r122" gradientUnits="userSpaceOnUse" x1="1096.8" y1="0" x2="1510.1" y2="0"><stop offset="0.0000" stop-color="#004aff"/><stop offset="0.2271" stop-color="#032bff"/><stop offset="0.5386" stop-color="#ad00ff"/><stop offset="0.6812" stop-color="#ff00fd"/><stop offset="0.7923" stop-color="#ff00c7"/><stop offset="0.9517" stop-color="#ff0097"/><stop offset="1.0000" stop-color="#ff008c"/></linearGradient>
<linearGradient id="r123" gradientUnits="userSpaceOnUse" x1="1097.9" y1="0" x2="1508.2" y2="0"><stop offset="0.0000" stop-color="#0048ff"/><stop offset="0.2263" stop-color="#032aff"/><stop offset="0.5353" stop-color="#a800ff"/><stop offset="0.6886" stop-color="#ff00fd"/><stop offset="0.8029" stop-color="#ff00c7"/><stop offset="0.9659" stop-color="#ff0096"/><stop offset="1.0000" stop-color="#ff008f"/></linearGradient>
<linearGradient id="r124" gradientUnits="userSpaceOnUse" x1="1099.1" y1="0" x2="1506.2" y2="0"><stop offset="0.0000" stop-color="#0047ff"/><stop offset="0.2255" stop-color="#0229ff"/><stop offset="0.5319" stop-color="#a300ff"/><stop offset="0.6961" stop-color="#ff00fd"/><stop offset="0.8113" stop-color="#ff00c7"/><stop offset="0.9755" stop-color="#ff0097"/><stop offset="1.0000" stop-color="#ff0092"/></linearGradient>
<linearGradient id="r125" gradientUnits="userSpaceOnUse" x1="1100.2" y1="0" x2="1504.2" y2="0"><stop offset="0.0000" stop-color="#0045ff"/><stop offset="0.2247" stop-color="#0228ff"/><stop offset="0.5284" stop-color="#9f00ff"/><stop offset="0.7037" stop-color="#ff00fd"/><stop offset="0.8222" stop-color="#ff00c7"/><stop offset="0.9901" stop-color="#ff0096"/><stop offset="1.0000" stop-color="#ff0094"/></linearGradient>
<linearGradient id="r126" gradientUnits="userSpaceOnUse" x1="1101.4" y1="0" x2="1502.3" y2="0"><stop offset="0.0000" stop-color="#0043ff"/><stop offset="0.2244" stop-color="#0227ff"/><stop offset="0.5262" stop-color="#9b00ff"/><stop offset="0.7107" stop-color="#ff00fd"/><stop offset="0.8304" stop-color="#ff00c7"/><stop offset="1.0000" stop-color="#ff0097"/></linearGradient>
<linearGradient id="r127" gradientUnits="userSpaceOnUse" x1="1102.6" y1="0" x2="1500.3" y2="0"><stop offset="0.0000" stop-color="#0042ff"/><stop offset="0.2236" stop-color="#0226ff"/><stop offset="0.5226" stop-color="#9700ff"/><stop offset="0.7186" stop-color="#ff00fd"/><stop offset="0.8417" stop-color="#ff00c7"/><stop offset="1.0000" stop-color="#ff009a"/></linearGradient>
<linearGradient id="r128" gradientUnits="userSpaceOnUse" x1="1103.7" y1="0" x2="1498.4" y2="0"><stop offset="0.0000" stop-color="#0040ff"/><stop offset="0.2253" stop-color="#0324ff"/><stop offset="0.5190" stop-color="#9300ff"/><stop offset="0.7266" stop-color="#ff00fd"/><stop offset="0.8506" stop-color="#ff00c7"/><stop offset="1.0000" stop-color="#ff009d"/></linearGradient>
<linearGradient id="r129" gradientUnits="userSpaceOnUse" x1="1104.9" y1="0" x2="1496.4" y2="0"><stop offset="0.0000" stop-color="#003fff"/><stop offset="0.2245" stop-color="#0323ff"/><stop offset="0.5153" stop-color="#8f00ff"/><stop offset="0.7347" stop-color="#ff00fd"/><stop offset="0.8597" stop-color="#ff00c7"/><stop offset="1.0000" stop-color="#ff00a0"/></linearGradient>
<linearGradient id="r130" gradientUnits="userSpaceOnUse" x1="1106.1" y1="0" x2="1494.5" y2="0"><stop offset="0.0000" stop-color="#003dff"/><stop offset="0.2237" stop-color="#0322ff"/><stop offset="0.5116" stop-color="#8a00ff"/><stop offset="0.7429" stop-color="#ff00fd"/><stop offset="0.8715" stop-color="#ff00c7"/><stop offset="1.0000" stop-color="#ff00a2"/></linearGradient>
<linearGradient id="r131" gradientUnits="userSpaceOnUse" x1="1107.3" y1="0" x2="1492.5" y2="0"><stop offset="0.0000" stop-color="#003cff"/><stop offset="0.2228" stop-color="#0221ff"/><stop offset="0.5078" stop-color="#8600ff"/><stop offset="0.7513" stop-color="#ff00fd"/><stop offset="0.8808" stop-color="#ff00c7"/><stop offset="1.0000" stop-color="#ff00a5"/></linearGradient>
<linearGradient id="r132" gradientUnits="userSpaceOnUse" x1="1108.5" y1="0" x2="1490.5" y2="0"><stop offset="0.0000" stop-color="#003aff"/><stop offset="0.2219" stop-color="#0220ff"/><stop offset="0.5039" stop-color="#8300ff"/><stop offset="0.7598" stop-color="#ff00fd"/><stop offset="0.8930" stop-color="#ff00c7"/><stop offset="1.0000" stop-color="#ff00a8"/></linearGradient>
<linearGradient id="r133" gradientUnits="userSpaceOnUse" x1="1109.6" y1="0" x2="1488.6" y2="0"><stop offset="0.0000" stop-color="#0039ff"/><stop offset="0.2216" stop-color="#021fff"/><stop offset="0.4987" stop-color="#7e00ff"/><stop offset="0.7678" stop-color="#ff00fd"/><stop offset="0.9024" stop-color="#ff00c7"/><stop offset="1.0000" stop-color="#ff00ab"/></linearGradient>
<linearGradient id="r134" gradientUnits="userSpaceOnUse" x1="1110.8" y1="0" x2="1486.6" y2="0"><stop offset="0.0000" stop-color="#0037ff"/><stop offset="0.2234" stop-color="#031eff"/><stop offset="0.4947" stop-color="#7a00ff"/><stop offset="0.7766" stop-color="#ff00fd"/><stop offset="0.9149" stop-color="#ff00c6"/><stop offset="1.0000" stop-color="#ff00ae"/></linearGradient>
<linearGradient id="r135" gradientUnits="userSpaceOnUse" x1="1112.0" y1="0" x2="1484.7" y2="0"><stop offset="0.0000" stop-color="#0036ff"/><stop offset="0.2225" stop-color="#031dff"/><stop offset="0.4906" stop-color="#7700ff"/><stop offset="0.7855" stop-color="#ff00fd"/><stop offset="0.9249" stop-color="#ff00c7"/><stop offset="1.0000" stop-color="#ff00b2"/></linearGradient>
<linearGradient id="r136" gradientUnits="userSpaceOnUse" x1="1113.2" y1="0" x2="1482.7" y2="0"><stop offset="0.0000" stop-color="#0035ff"/><stop offset="0.2216" stop-color="#031cff"/><stop offset="0.4865" stop-color="#7300ff"/><stop offset="0.7946" stop-color="#ff00fd"/><stop offset="0.9351" stop-color="#ff00c7"/><stop offset="1.0000" stop-color="#ff00b5"/></linearGradient>
<linearGradient id="r137" gradientUnits="userSpaceOnUse" x1="1114.5" y1="0" x2="1480.8" y2="0"><stop offset="0.0000" stop-color="#0033ff"/><stop offset="0.2207" stop-color="#021bff"/><stop offset="0.4850" stop-color="#7100ff"/><stop offset="0.8038" stop-color="#ff00fd"/><stop offset="0.9482" stop-color="#ff00c7"/><stop offset="1.0000" stop-color="#ff00b8"/></linearGradient>
<linearGradient id="r138" gradientUnits="userSpaceOnUse" x1="1115.7" y1="0" x2="1478.8" y2="0"><stop offset="0.0000" stop-color="#0032ff"/><stop offset="0.2198" stop-color="#021aff"/><stop offset="0.4808" stop-color="#6d00ff"/><stop offset="0.8132" stop-color="#ff00fd"/><stop offset="0.9588" stop-color="#ff00c7"/><stop offset="1.0000" stop-color="#ff00bb"/></linearGradient>
<linearGradient id="r139" gradientUnits="userSpaceOnUse" x1="1116.9" y1="0" x2="1476.8" y2="0"><stop offset="0.0000" stop-color="#0031ff"/><stop offset="0.2194" stop-color="#0219ff"/><stop offset="0.4750" stop-color="#6900ff"/><stop offset="0.8222" stop-color="#ff00fd"/><stop offset="0.9722" stop-color="#ff00c6"/><stop offset="1.0000" stop-color="#ff00bf"/></linearGradient>
<linearGradient id="r140" gradientUnits="userSpaceOnUse" x1="1118.1" y1="0" x2="1474.9" y2="0"><stop offset="0.0000" stop-color="#002fff"/><stop offset="0.2185" stop-color="#0219ff"/><stop offset="0.4706" stop-color="#6600ff"/><stop offset="0.8319" stop-color="#ff00fd"/><stop offset="0.9832" stop-color="#ff00c7"/><stop offset="1.0000" stop-color="#ff00c2"/></linearGradient>
<linearGradient id="r141" gradientUnits="userSpaceOnUse" x1="1119.3" y1="0" x2="1472.9" y2="0"><stop offset="0.0000" stop-color="#002eff"/><stop offset="0.2203" stop-color="#0317ff"/><stop offset="0.4661" stop-color="#6300ff"/><stop offset="0.8418" stop-color="#ff00fd"/><stop offset="0.9972" stop-color="#ff00c6"/><stop offset="1.0000" stop-color="#ff00c6"/></linearGradient>
<linearGradient id="r142" gradientUnits="userSpaceOnUse" x1="1120.6" y1="0" x2="1471.0" y2="0"><stop offset="0.0000" stop-color="#002dff"/><stop offset="0.2194" stop-color="#0317ff"/><stop offset="0.4615" stop-color="#5f00ff"/><stop offset="0.8519" stop-color="#ff00fd"/><stop offset="1.0000" stop-color="#ff00c9"/></linearGradient>
<linearGradient id="r143" gradientUnits="userSpaceOnUse" x1="1121.8" y1="0" x2="1469.0" y2="0"><stop offset="0.0000" stop-color="#002bff"/><stop offset="0.2184" stop-color="#0316ff"/><stop offset="0.4569" stop-color="#5c00ff"/><stop offset="0.8621" stop-color="#ff00fd"/><stop offset="1.0000" stop-color="#ff00cd"/></linearGradient>
<linearGradient id="r144" gradientUnits="userSpaceOnUse" x1="1123.1" y1="0" x2="1467.1" y2="0"><stop offset="0.0000" stop-color="#002aff"/><stop offset="0.2180" stop-color="#0315ff"/><stop offset="0.4535" stop-color="#5a00ff"/><stop offset="0.8721" stop-color="#ff00fd"/><stop offset="1.0000" stop-color="#ff00d0"/></linearGradient>
<linearGradient id="r145" gradientUnits="userSpaceOnUse" x1="1124.3" y1="0" x2="1465.1" y2="0"><stop offset="0.0000" stop-color="#0029ff"/><stop offset="0.2170" stop-color="#0314ff"/><stop offset="0.4487" stop-color="#5700ff"/><stop offset="0.8827" stop-color="#ff00fd"/><stop offset="1.0000" stop-color="#ff00d4"/></linearGradient>
<linearGradient id="r146" gradientUnits="userSpaceOnUse" x1="1125.6" y1="0" x2="1463.1" y2="0"><stop offset="0.0000" stop-color="#0028ff"/><stop offset="0.2160" stop-color="#0313ff"/><stop offset="0.4438" stop-color="#5400ff"/><stop offset="0.8935" stop-color="#ff00fd"/><stop offset="1.0000" stop-color="#ff00d8"/></linearGradient>
<linearGradient id="r147" gradientUnits="userSpaceOnUse" x1="1126.8" y1="0" x2="1461.2" y2="0"><stop offset="0.0000" stop-color="#0027ff"/><stop offset="0.2149" stop-color="#0213ff"/><stop offset="0.4388" stop-color="#5100ff"/><stop offset="0.9045" stop-color="#ff00fd"/><stop offset="1.0000" stop-color="#ff00db"/></linearGradient>
<linearGradient id="r148" gradientUnits="userSpaceOnUse" x1="1128.1" y1="0" x2="1459.2" y2="0"><stop offset="0.0000" stop-color="#0025ff"/><stop offset="0.2139" stop-color="#0212ff"/><stop offset="0.4337" stop-color="#4e00ff"/><stop offset="0.9157" stop-color="#ff00fd"/><stop offset="1.0000" stop-color="#ff00df"/></linearGradient>
<linearGradient id="r149" gradientUnits="userSpaceOnUse" x1="1129.4" y1="0" x2="1457.3" y2="0"><stop offset="0.0000" stop-color="#0024ff"/><stop offset="0.2134" stop-color="#0211ff"/><stop offset="0.4299" stop-color="#4b00ff"/><stop offset="0.9268" stop-color="#ff00fd"/><stop offset="1.0000" stop-color="#ff00e3"/></linearGradient>
<linearGradient id="r150" gradientUnits="userSpaceOnUse" x1="1130.6" y1="0" x2="1455.3" y2="0"><stop offset="0.0000" stop-color="#0023ff"/><stop offset="0.2123" stop-color="#0210ff"/><stop offset="0.4246" stop-color="#4900ff"/><stop offset="0.9385" stop-color="#ff00fd"/><stop offset="1.0000" stop-color="#ff00e7"/></linearGradient>
<linearGradient id="r151" gradientUnits="userSpaceOnUse" x1="1131.9" y1="0" x2="1453.4" y2="0"><stop offset="0.0000" stop-color="#0022ff"/><stop offset="0.2143" stop-color="#030fff"/><stop offset="0.4193" stop-color="#4600ff"/><stop offset="0.9503" stop-color="#ff00fd"/><stop offset="1.0000" stop-color="#ff00eb"/></linearGradient>
<linearGradient id="r152" gradientUnits="userSpaceOnUse" x1="1133.2" y1="0" x2="1451.4" y2="0"><stop offset="0.0000" stop-color="#0021ff"/><stop offset="0.2132" stop-color="#030eff"/><stop offset="0.4138" stop-color="#4300ff"/><stop offset="0.9624" stop-color="#ff00fd"/><stop offset="1.0000" stop-color="#ff00f0"/></linearGradient>
<linearGradient id="r153" gradientUnits="userSpaceOnUse" x1="1134.5" y1="0" x2="1449.5" y2="0"><stop offset="0.0000" stop-color="#0020ff"/><stop offset="0.2127" stop-color="#030eff"/><stop offset="0.4095" stop-color="#4100ff"/><stop offset="0.9746" stop-color="#ff00fd"/><stop offset="1.0000" stop-color="#ff00f4"/></linearGradient>
<linearGradient id="r154" gradientUnits="userSpaceOnUse" x1="1135.8" y1="0" x2="1447.5" y2="0"><stop offset="0.0000" stop-color="#001fff"/><stop offset="0.2115" stop-color="#030dff"/><stop offset="0.4038" stop-color="#3e00ff"/><stop offset="0.9872" stop-color="#ff00fd"/><stop offset="1.0000" stop-color="#ff00f8"/></linearGradient>
<linearGradient id="r155" gradientUnits="userSpaceOnUse" x1="1137.1" y1="0" x2="1445.5" y2="0"><stop offset="0.0000" stop-color="#001eff"/><stop offset="0.2104" stop-color="#030cff"/><stop offset="0.3981" stop-color="#3c00ff"/><stop offset="0.9838" stop-color="#fc00ff"/><stop offset="1.0000" stop-color="#ff00fc"/></linearGradient>
<linearGradient id="r156" gradientUnits="userSpaceOnUse" x1="1138.4" y1="0" x2="1443.6" y2="0"><stop offset="0.0000" stop-color="#001cff"/><stop offset="0.2092" stop-color="#030cff"/><stop offset="0.3922" stop-color="#3900ff"/><stop offset="0.9869" stop-color="#f900ff"/><stop offset="1.0000" stop-color="#fd00ff"/></linearGradient>
<linearGradient id="r157" gradientUnits="userSpaceOnUse" x1="1139.8" y1="0" x2="1441.6" y2="0"><stop offset="0.0000" stop-color="#001bff"/><stop offset="0.2086" stop-color="#030bff"/><stop offset="0.3874" stop-color="#3700ff"/><stop offset="0.9934" stop-color="#f600ff"/><stop offset="1.0000" stop-color="#f900ff"/></linearGradient>
<linearGradient id="r158" gradientUnits="userSpaceOnUse" x1="1141.1" y1="0" x2="1439.7" y2="0"><stop offset="0.0000" stop-color="#001aff"/><stop offset="0.2074" stop-color="#030aff"/><stop offset="0.3846" stop-color="#3600ff"/><stop offset="1.0000" stop-color="#f400ff"/></linearGradient>
<linearGradient id="r159" gradientUnits="userSpaceOnUse" x1="1142.5" y1="0" x2="1437.7" y2="0"><stop offset="0.0000" stop-color="#0019ff"/><stop offset="0.2061" stop-color="#0309ff"/><stop offset="0.3784" stop-color="#3300ff"/><stop offset="1.0000" stop-color="#f000ff"/></linearGradient>
<linearGradient id="r160" gradientUnits="userSpaceOnUse" x1="1143.8" y1="0" x2="1435.8" y2="0"><stop offset="0.0000" stop-color="#0018ff"/><stop offset="0.2055" stop-color="#0309ff"/><stop offset="0.3767" stop-color="#3200ff"/><stop offset="1.0000" stop-color="#ec00ff"/></linearGradient>
<linearGradient id="r161" gradientUnits="userSpaceOnUse" x1="1145.2" y1="0" x2="1433.8" y2="0"><stop offset="0.0000" stop-color="#0017ff"/><stop offset="0.2042" stop-color="#0308ff"/><stop offset="0.3702" stop-color="#3000ff"/><stop offset="1.0000" stop-color="#e800ff"/></linearGradient>
<linearGradient id="r162" gradientUnits="userSpaceOnUse" x1="1146.5" y1="0" x2="1431.8" y2="0"><stop offset="0.0000" stop-color="#0016ff"/><stop offset="0.2028" stop-color="#0307ff"/><stop offset="0.3671" stop-color="#2f00ff"/><stop offset="1.0000" stop-color="#e400ff"/></linearGradient>
<linearGradient id="r163" gradientUnits="userSpaceOnUse" x1="1147.9" y1="0" x2="1429.9" y2="0"><stop offset="0.0000" stop-color="#0015ff"/><stop offset="0.2021" stop-color="#0307ff"/><stop offset="0.3652" stop-color="#2e00ff"/><stop offset="1.0000" stop-color="#e000ff"/></linearGradient>
<linearGradient id="r164" gradientUnits="userSpaceOnUse" x1="1149.3" y1="0" x2="1427.9" y2="0"><stop offset="0.0000" stop-color="#0014ff"/><stop offset="0.2007" stop-color="#0306ff"/><stop offset="0.3656" stop-color="#2d00ff"/><stop offset="1.0000" stop-color="#dc00ff"/></linearGradient>
<linearGradient id="r165" gradientUnits="userSpaceOnUse" x1="1150.7" y1="0" x2="1426.0" y2="0"><stop offset="0.0000" stop-color="#0013ff"/><stop offset="0.1993" stop-color="#0305ff"/><stop offset="0.3696" stop-color="#2e00ff"/><stop offset="1.0000" stop-color="#d800ff"/></linearGradient>
<linearGradient id="r166" gradientUnits="userSpaceOnUse" x1="1152.1" y1="0" x2="1424.0" y2="0"><stop offset="0.0000" stop-color="#0012ff"/><stop offset="0.1949" stop-color="#0205ff"/><stop offset="0.3750" stop-color="#2f00ff"/><stop offset="1.0000" stop-color="#d400ff"/></linearGradient>
<linearGradient id="r167" gradientUnits="userSpaceOnUse" x1="1153.5" y1="0" x2="1422.1" y2="0"><stop offset="0.0000" stop-color="#0011ff"/><stop offset="0.1933" stop-color="#0204ff"/><stop offset="0.3978" stop-color="#3400ff"/><stop offset="1.0000" stop-color="#d000ff"/></linearGradient>
<linearGradient id="r168" gradientUnits="userSpaceOnUse" x1="1155.0" y1="0" x2="1420.1" y2="0"><stop offset="0.0000" stop-color="#0010ff"/><stop offset="0.1917" stop-color="#0204ff"/><stop offset="0.4699" stop-color="#4500ff"/><stop offset="1.0000" stop-color="#cc00ff"/></linearGradient>
<linearGradient id="r169" gradientUnits="userSpaceOnUse" x1="1156.4" y1="0" x2="1418.1" y2="0"><stop offset="0.0000" stop-color="#000fff"/><stop offset="0.1908" stop-color="#0303ff"/><stop offset="0.9695" stop-color="#c100ff"/><stop offset="1.0000" stop-color="#c900ff"/></linearGradient>
<linearGradient id="r170" gradientUnits="userSpaceOnUse" x1="1157.8" y1="0" x2="1416.2" y2="0"><stop offset="0.0000" stop-color="#000fff"/><stop offset="0.1892" stop-color="#0302ff"/><stop offset="0.9807" stop-color="#c000ff"/><stop offset="1.0000" stop-color="#c500ff"/></linearGradient>
<linearGradient id="r171" gradientUnits="userSpaceOnUse" x1="1159.3" y1="0" x2="1414.2" y2="0"><stop offset="0.0000" stop-color="#000eff"/><stop offset="0.1882" stop-color="#0302ff"/><stop offset="0.9961" stop-color="#c100ff"/><stop offset="1.0000" stop-color="#c200ff"/></linearGradient>
<linearGradient id="r172" gradientUnits="userSpaceOnUse" x1="1160.8" y1="0" x2="1412.3" y2="0"><stop offset="0.0000" stop-color="#000dff"/><stop offset="0.1865" stop-color="#0301ff"/><stop offset="1.0000" stop-color="#be00ff"/></linearGradient>
<linearGradient id="r173" gradientUnits="userSpaceOnUse" x1="1162.2" y1="0" x2="1410.3" y2="0"><stop offset="0.0000" stop-color="#000cff"/><stop offset="0.1847" stop-color="#0301ff"/><stop offset="1.0000" stop-color="#bb00ff"/></linearGradient>
<linearGradient id="r174" gradientUnits="userSpaceOnUse" x1="1163.7" y1="0" x2="1408.4" y2="0"><stop offset="0.0000" stop-color="#000bff"/><stop offset="0.1837" stop-color="#0300ff"/><stop offset="1.0000" stop-color="#b700ff"/></linearGradient>
<linearGradient id="r175" gradientUnits="userSpaceOnUse" x1="1165.2" y1="0" x2="1406.4" y2="0"><stop offset="0.0000" stop-color="#000aff"/><stop offset="0.1818" stop-color="#0300ff"/><stop offset="1.0000" stop-color="#b400ff"/></linearGradient>
<linearGradient id="r176" gradientUnits="userSpaceOnUse" x1="1166.7" y1="0" x2="1404.5" y2="0"><stop offset="0.0000" stop-color="#0009ff"/><stop offset="0.1765" stop-color="#0200ff"/><stop offset="1.0000" stop-color="#b100ff"/></linearGradient>
<linearGradient id="r177" gradientUnits="userSpaceOnUse" x1="1168.2" y1="0" x2="1402.5" y2="0"><stop offset="0.0000" stop-color="#0008ff"/><stop offset="0.1745" stop-color="#0300ff"/><stop offset="1.0000" stop-color="#ad00ff"/></linearGradient>
<linearGradient id="r178" gradientUnits="userSpaceOnUse" x1="1169.7" y1="0" x2="1400.5" y2="0"><stop offset="0.0000" stop-color="#0007ff"/><stop offset="0.1732" stop-color="#0300ff"/><stop offset="1.0000" stop-color="#aa00ff"/></linearGradient>
<linearGradient id="r179" gradientUnits="userSpaceOnUse" x1="1171.2" y1="0" x2="1398.6" y2="0"><stop offset="0.0000" stop-color="#0007ff"/><stop offset="0.1711" stop-color="#0300ff"/><stop offset="1.0000" stop-color="#a700ff"/></linearGradient>
<linearGradient id="r180" gradientUnits="userSpaceOnUse" x1="1172.8" y1="0" x2="1396.6" y2="0"><stop offset="0.0000" stop-color="#0006ff"/><stop offset="0.1696" stop-color="#0300ff"/><stop offset="1.0000" stop-color="#a400ff"/></linearGradient>
<linearGradient id="r181" gradientUnits="userSpaceOnUse" x1="1174.3" y1="0" x2="1394.7" y2="0"><stop offset="0.0000" stop-color="#0005ff"/><stop offset="0.1674" stop-color="#0300ff"/><stop offset="1.0000" stop-color="#a100ff"/></linearGradient>
<linearGradient id="r182" gradientUnits="userSpaceOnUse" x1="1175.9" y1="0" x2="1392.7" y2="0"><stop offset="0.0000" stop-color="#0004ff"/><stop offset="0.1659" stop-color="#0300ff"/><stop offset="1.0000" stop-color="#9e00ff"/></linearGradient>
<linearGradient id="r183" gradientUnits="userSpaceOnUse" x1="1177.5" y1="0" x2="1390.8" y2="0"><stop offset="0.0000" stop-color="#0003ff"/><stop offset="0.1589" stop-color="#0300ff"/><stop offset="1.0000" stop-color="#9b00ff"/></linearGradient>
<linearGradient id="r184" gradientUnits="userSpaceOnUse" x1="1179.1" y1="0" x2="1388.8" y2="0"><stop offset="0.0000" stop-color="#0002ff"/><stop offset="0.1571" stop-color="#0300ff"/><stop offset="1.0000" stop-color="#9800ff"/></linearGradient>
<linearGradient id="r185" gradientUnits="userSpaceOnUse" x1="1180.7" y1="0" x2="1386.8" y2="0"><stop offset="0.0000" stop-color="#0001ff"/><stop offset="0.1546" stop-color="#0300ff"/><stop offset="1.0000" stop-color="#9500ff"/></linearGradient>
<linearGradient id="r186" gradientUnits="userSpaceOnUse" x1="1182.3" y1="0" x2="1384.9" y2="0"><stop offset="0.0000" stop-color="#0001ff"/><stop offset="0.1527" stop-color="#0300ff"/><stop offset="1.0000" stop-color="#9200ff"/></linearGradient>
<linearGradient id="r187" gradientUnits="userSpaceOnUse" x1="1184.0" y1="0" x2="1382.9" y2="0"><stop offset="0.0000" stop-color="#0000ff"/><stop offset="0.1457" stop-color="#0300ff"/><stop offset="1.0000" stop-color="#8f00ff"/></linearGradient>
<linearGradient id="r188" gradientUnits="userSpaceOnUse" x1="1185.7" y1="0" x2="1381.0" y2="0"><stop offset="0.0000" stop-color="#0000ff"/><stop offset="0.1429" stop-color="#0300ff"/><stop offset="1.0000" stop-color="#8c00ff"/></linearGradient>
<linearGradient id="r189" gradientUnits="userSpaceOnUse" x1="1187.3" y1="0" x2="1379.0" y2="0"><stop offset="0.0000" stop-color="#0000ff"/><stop offset="0.1406" stop-color="#0300ff"/><stop offset="1.0000" stop-color="#8a00ff"/></linearGradient>
<linearGradient id="r190" gradientUnits="userSpaceOnUse" x1="1189.1" y1="0" x2="1377.1" y2="0"><stop offset="0.0000" stop-color="#0000ff"/><stop offset="0.1376" stop-color="#0400ff"/><stop offset="1.0000" stop-color="#8700ff"/></linearGradient>
<linearGradient id="r191" gradientUnits="userSpaceOnUse" x1="1190.8" y1="0" x2="1375.1" y2="0"><stop offset="0.0000" stop-color="#0000ff"/><stop offset="0.1297" stop-color="#0300ff"/><stop offset="1.0000" stop-color="#8400ff"/></linearGradient>
<linearGradient id="r192" gradientUnits="userSpaceOnUse" x1="1192.5" y1="0" x2="1373.1" y2="0"><stop offset="0.0000" stop-color="#0000ff"/><stop offset="0.1271" stop-color="#0300ff"/><stop offset="1.0000" stop-color="#8200ff"/></linearGradient>
<linearGradient id="r193" gradientUnits="userSpaceOnUse" x1="1194.2" y1="0" x2="1371.2" y2="0"><stop offset="0.0000" stop-color="#0000ff"/><stop offset="0.1243" stop-color="#0400ff"/><stop offset="1.0000" stop-color="#7f00ff"/></linearGradient>
<linearGradient id="r194" gradientUnits="userSpaceOnUse" x1="1196.0" y1="0" x2="1369.2" y2="0"><stop offset="0.0000" stop-color="#0000ff"/><stop offset="0.1207" stop-color="#0400ff"/><stop offset="1.0000" stop-color="#7c00ff"/></linearGradient>
<linearGradient id="r195" gradientUnits="userSpaceOnUse" x1="1197.8" y1="0" x2="1367.3" y2="0"><stop offset="0.0000" stop-color="#0000ff"/><stop offset="0.1118" stop-color="#0400ff"/><stop offset="1.0000" stop-color="#7a00ff"/></linearGradient>
<linearGradient id="r196" gradientUnits="userSpaceOnUse" x1="1199.6" y1="0" x2="1365.3" y2="0"><stop offset="0.0000" stop-color="#0000ff"/><stop offset="0.1084" stop-color="#0400ff"/><stop offset="1.0000" stop-color="#7700ff"/></linearGradient>
<linearGradient id="r197" gradientUnits="userSpaceOnUse" x1="1201.4" y1="0" x2="1363.4" y2="0"><stop offset="0.0000" stop-color="#0000ff"/><stop offset="0.1049" stop-color="#0400ff"/><stop offset="1.0000" stop-color="#7500ff"/></linearGradient>
<linearGradient id="r198" gradientUnits="userSpaceOnUse" x1="1203.3" y1="0" x2="1361.4" y2="0"><stop offset="0.0000" stop-color="#0000ff"/><stop offset="0.1069" stop-color="#0500ff"/><stop offset="1.0000" stop-color="#7200ff"/></linearGradient>
<linearGradient id="r199" gradientUnits="userSpaceOnUse" x1="1205.2" y1="0" x2="1359.4" y2="0"><stop offset="0.0000" stop-color="#0000ff"/><stop offset="0.1032" stop-color="#0600ff"/><stop offset="1.0000" stop-color="#7000ff"/></linearGradient>
<linearGradient id="r200" gradientUnits="userSpaceOnUse" x1="1207.2" y1="0" x2="1357.5" y2="0"><stop offset="0.0000" stop-color="#0000ff"/><stop offset="0.1258" stop-color="#0900ff"/><stop offset="1.0000" stop-color="#6d00ff"/></linearGradient>
<linearGradient id="r201" gradientUnits="userSpaceOnUse" x1="1209.2" y1="0" x2="1355.5" y2="0"><stop offset="0.0000" stop-color="#0000ff"/><stop offset="0.2857" stop-color="#1b00ff"/><stop offset="1.0000" stop-color="#6b00ff"/></linearGradient>
<linearGradient id="r202" gradientUnits="userSpaceOnUse" x1="1211.2" y1="0" x2="1353.6" y2="0"><stop offset="0.0000" stop-color="#0000ff"/><stop offset="1.0000" stop-color="#6900ff"/></linearGradient>
<linearGradient id="r203" gradientUnits="userSpaceOnUse" x1="1213.3" y1="0" x2="1351.6" y2="0"><stop offset="0.0000" stop-color="#0000ff"/><stop offset="1.0000" stop-color="#6600ff"/></linearGradient>
<linearGradient id="r204" gradientUnits="userSpaceOnUse" x1="1215.3" y1="0" x2="1349.7" y2="0"><stop offset="0.0000" stop-color="#0000ff"/><stop offset="1.0000" stop-color="#6400ff"/></linearGradient>
<linearGradient id="r205" gradientUnits="userSpaceOnUse" x1="1217.4" y1="0" x2="1347.7" y2="0"><stop offset="0.0000" stop-color="#0200ff"/><stop offset="1.0000" stop-color="#6200ff"/></linearGradient>
<linearGradient id="r206" gradientUnits="userSpaceOnUse" x1="1219.5" y1="0" x2="1345.8" y2="0"><stop offset="0.0000" stop-color="#0300ff"/><stop offset="1.0000" stop-color="#6000ff"/></linearGradient>
<linearGradient id="r207" gradientUnits="userSpaceOnUse" x1="1221.6" y1="0" x2="1343.8" y2="0"><stop offset="0.0000" stop-color="#0400ff"/><stop offset="1.0000" stop-color="#5d00ff"/></linearGradient>
<linearGradient id="r208" gradientUnits="userSpaceOnUse" x1="1223.8" y1="0" x2="1341.8" y2="0"><stop offset="0.0000" stop-color="#0500ff"/><stop offset="1.0000" stop-color="#5b00ff"/></linearGradient>
<linearGradient id="r209" gradientUnits="userSpaceOnUse" x1="1226.0" y1="0" x2="1339.9" y2="0"><stop offset="0.0000" stop-color="#0700ff"/><stop offset="1.0000" stop-color="#5900ff"/></linearGradient>
<linearGradient id="r210" gradientUnits="userSpaceOnUse" x1="1228.3" y1="0" x2="1337.9" y2="0"><stop offset="0.0000" stop-color="#0800ff"/><stop offset="1.0000" stop-color="#5700ff"/></linearGradient>
<linearGradient id="r211" gradientUnits="userSpaceOnUse" x1="1230.6" y1="0" x2="1336.0" y2="0"><stop offset="0.0000" stop-color="#0900ff"/><stop offset="1.0000" stop-color="#5500ff"/></linearGradient>
<linearGradient id="r212" gradientUnits="userSpaceOnUse" x1="1232.9" y1="0" x2="1334.0" y2="0"><stop offset="0.0000" stop-color="#0b00ff"/><stop offset="1.0000" stop-color="#5300ff"/></linearGradient>
<linearGradient id="r213" gradientUnits="userSpaceOnUse" x1="1235.2" y1="0" x2="1332.1" y2="0"><stop offset="0.0000" stop-color="#0c00ff"/><stop offset="1.0000" stop-color="#5100ff"/></linearGradient>
<linearGradient id="r214" gradientUnits="userSpaceOnUse" x1="1237.5" y1="0" x2="1330.1" y2="0"><stop offset="0.0000" stop-color="#0d00ff"/><stop offset="1.0000" stop-color="#4e00ff"/></linearGradient>
<linearGradient id="r215" gradientUnits="userSpaceOnUse" x1="1239.9" y1="0" x2="1328.1" y2="0"><stop offset="0.0000" stop-color="#0f00ff"/><stop offset="1.0000" stop-color="#4c00ff"/></linearGradient>
<linearGradient id="r216" gradientUnits="userSpaceOnUse" x1="1242.3" y1="0" x2="1326.2" y2="0"><stop offset="0.0000" stop-color="#1000ff"/><stop offset="1.0000" stop-color="#4a00ff"/></linearGradient>
<linearGradient id="r217" gradientUnits="userSpaceOnUse" x1="1244.7" y1="0" x2="1324.2" y2="0"><stop offset="0.0000" stop-color="#1100ff"/><stop offset="1.0000" stop-color="#4800ff"/></linearGradient>
<linearGradient id="r218" gradientUnits="userSpaceOnUse" x1="1247.1" y1="0" x2="1322.3" y2="0"><stop offset="0.0000" stop-color="#1300ff"/><stop offset="1.0000" stop-color="#4700ff"/></linearGradient>
<linearGradient id="r219" gradientUnits="userSpaceOnUse" x1="1249.6" y1="0" x2="1320.3" y2="0"><stop offset="0.0000" stop-color="#1400ff"/><stop offset="1.0000" stop-color="#4500ff"/></linearGradient>
<linearGradient id="r220" gradientUnits="userSpaceOnUse" x1="1252.0" y1="0" x2="1318.4" y2="0"><stop offset="0.0000" stop-color="#1500ff"/><stop offset="1.0000" stop-color="#4300ff"/></linearGradient>
<linearGradient id="r221" gradientUnits="userSpaceOnUse" x1="1254.4" y1="0" x2="1316.4" y2="0"><stop offset="0.0000" stop-color="#1700ff"/><stop offset="1.0000" stop-color="#4100ff"/></linearGradient>
<linearGradient id="r222" gradientUnits="userSpaceOnUse" x1="1256.9" y1="0" x2="1314.4" y2="0"><stop offset="0.0000" stop-color="#1800ff"/><stop offset="1.0000" stop-color="#3f00ff"/></linearGradient>
<linearGradient id="r223" gradientUnits="userSpaceOnUse" x1="1259.3" y1="0" x2="1312.5" y2="0"><stop offset="0.0000" stop-color="#1900ff"/><stop offset="1.0000" stop-color="#3d00ff"/></linearGradient>
<linearGradient id="r224" gradientUnits="userSpaceOnUse" x1="1261.8" y1="0" x2="1310.5" y2="0"><stop offset="0.0000" stop-color="#1b00ff"/><stop offset="1.0000" stop-color="#3b00ff"/></linearGradient>
<linearGradient id="r225" gradientUnits="userSpaceOnUse" x1="1264.2" y1="0" x2="1308.6" y2="0"><stop offset="0.0000" stop-color="#1c00ff"/><stop offset="1.0000" stop-color="#3900ff"/></linearGradient>
<linearGradient id="r226" gradientUnits="userSpaceOnUse" x1="1266.6" y1="0" x2="1306.6" y2="0"><stop offset="0.0000" stop-color="#1d00ff"/><stop offset="1.0000" stop-color="#3800ff"/></linearGradient>
<linearGradient id="r227" gradientUnits="userSpaceOnUse" x1="1269.0" y1="0" x2="1304.7" y2="0"><stop offset="0.0000" stop-color="#1e00ff"/><stop offset="1.0000" stop-color="#3600ff"/></linearGradient>
<linearGradient id="r228" gradientUnits="userSpaceOnUse" x1="1271.3" y1="0" x2="1302.7" y2="0"><stop offset="0.0000" stop-color="#1f00ff"/><stop offset="1.0000" stop-color="#3400ff"/></linearGradient>
<linearGradient id="r229" gradientUnits="userSpaceOnUse" x1="1273.6" y1="0" x2="1300.8" y2="0"><stop offset="0.0000" stop-color="#2100ff"/><stop offset="1.0000" stop-color="#3200ff"/></linearGradient>
<linearGradient id="r230" gradientUnits="userSpaceOnUse" x1="1276.0" y1="0" x2="1298.8" y2="0"><stop offset="0.0000" stop-color="#2200ff"/><stop offset="1.0000" stop-color="#3100ff"/></linearGradient>
<linearGradient id="r231" gradientUnits="userSpaceOnUse" x1="1278.5" y1="0" x2="1296.8" y2="0"><stop offset="0.0000" stop-color="#2300ff"/><stop offset="1.0000" stop-color="#2f00ff"/></linearGradient>
<linearGradient id="r232" gradientUnits="userSpaceOnUse" x1="1281.3" y1="0" x2="1294.9" y2="0"><stop offset="0.0000" stop-color="#2400ff"/><stop offset="1.0000" stop-color="#2d00ff"/></linearGradient>
<linearGradient id="r233" gradientUnits="userSpaceOnUse" x1="1284.7" y1="0" x2="1292.9" y2="0"><stop offset="0.0000" stop-color="#2600ff"/><stop offset="1.0000" stop-color="#2c00ff"/></linearGradient>
<filter id="fSoft" x="-5%" y="-5%" width="110%" height="110%"><feGaussianBlur stdDeviation="0.8"/></filter>
<filter id="fEdge" filterUnits="userSpaceOnUse" x="1013.6" y="115.9" width="649.9999999999999" height="501.4"><feGaussianBlur stdDeviation="0.55"/></filter>
<linearGradient id="gInset" gradientUnits="userSpaceOnUse" x1="1440.5" y1="460.4" x2="1606.5" y2="594.4"><stop offset="0" stop-color="#96ff00"/><stop offset="0.49" stop-color="#ffff00"/><stop offset="1" stop-color="#ffb400"/></linearGradient>
<linearGradient id="gRb" x1="0" y1="0" x2="0" y2="1"><stop offset="0" stop-color="#ee7070"/><stop offset="1" stop-color="#d85c5c"/></linearGradient>
<linearGradient id="gGb" x1="0" y1="0" x2="0" y2="1"><stop offset="0" stop-color="#66b466"/><stop offset="1" stop-color="#56a456"/></linearGradient>
<linearGradient id="gBb" x1="0" y1="0" x2="0" y2="1"><stop offset="0" stop-color="#5a5aff"/><stop offset="1" stop-color="#4c4cf4"/></linearGradient>
<linearGradient id="gTh" x1="0" y1="0" x2="0" y2="1"><stop offset="0" stop-color="#303030"/><stop offset="0.5" stop-color="#2a2a2a"/><stop offset="0.52" stop-color="#161616"/><stop offset="1" stop-color="#121212"/></linearGradient>
<linearGradient id="gBar" x1="0" y1="0" x2="0" y2="1"><stop offset="0" stop-color="#464646"/><stop offset="1" stop-color="#262626"/></linearGradient>
<linearGradient id="gSw" x1="0" y1="0" x2="0" y2="1"><stop offset="0" stop-color="#a6a6a6"/><stop offset="0.5" stop-color="#808080"/><stop offset="1" stop-color="#585858"/></linearGradient>
<linearGradient id="gSwSel" x1="0" y1="0" x2="0" y2="1"><stop offset="0" stop-color="#1a1a1a"/><stop offset="1" stop-color="#363636"/></linearGradient>
<linearGradient id="gUp" x1="0" y1="0" x2="0" y2="1"><stop offset="0" stop-color="#666666"/><stop offset="1" stop-color="#989898"/></linearGradient>
<linearGradient id="gCt" x1="0" y1="0" x2="0" y2="1"><stop offset="0" stop-color="#a2a2a2"/><stop offset="1" stop-color="#6c6c6c"/></linearGradient>
<linearGradient id="gCtD" x1="0" y1="0" x2="0" y2="1"><stop offset="0" stop-color="#787878"/><stop offset="1" stop-color="#5c5c5c"/></linearGradient>
<linearGradient id="gCtB" x1="0" y1="0" x2="0" y2="1"><stop offset="0" stop-color="#a8a8a8"/><stop offset="1" stop-color="#707070"/></linearGradient>
<linearGradient id="gCirc" x1="0" y1="0" x2="0" y2="1"><stop offset="0" stop-color="#6e6e6e"/><stop offset="1" stop-color="#a0a0a0"/></linearGradient>
<linearGradient id="gCircD" x1="0" y1="0" x2="0" y2="1"><stop offset="0" stop-color="#505050"/><stop offset="1" stop-color="#7a7a7a"/></linearGradient>
<linearGradient id="gStopBox" x1="0" y1="0" x2="0" y2="1"><stop offset="0" stop-color="#a4a4a4"/><stop offset="0.55" stop-color="#9a9a9a"/><stop offset="0.56" stop-color="#808080"/><stop offset="1" stop-color="#8a8a8a"/></linearGradient>
<linearGradient id="gStopSq" x1="0" y1="0" x2="0" y2="1"><stop offset="0" stop-color="#2a2a2a"/><stop offset="0.5" stop-color="#141414"/><stop offset="0.52" stop-color="#000"/><stop offset="1" stop-color="#000"/></linearGradient>
</defs>
<rect x="0.00" y="0.00" width="1669.00" height="1007.00" fill="#333333"/>
<rect x="0.00" y="0.00" width="1669.00" height="38.50" fill="#222222"/>
<rect x="0.00" y="38.00" width="1.00" height="969.00" fill="#262626"/>
<path d="M0.5,38.5 V7 Q0.5,1.5 6,1.5 H109 Q114.5,1.5 114.5,7 V38.5" fill="url(#gTab)" stroke="#a8a8a8" stroke-width="1"/>
<line x1="73.50" y1="2.00" x2="73.50" y2="38.50" stroke="#9c9c9c" stroke-width="1"/>
<text x="8.0" y="26.3" font-size="14.2" fill="#efefef" textLength="58.0" lengthAdjust="spacingAndGlyphs">History 1</text>
<circle cx="92.7" cy="22" r="12" fill="url(#gPlus)"/>
<text x="92.7" y="28.0" font-size="15" fill="#b8b8b8" text-anchor="middle">+</text>
<path d="M1055,38.5 V6 Q1055,1.5 1060,1.5 H1228 Q1233,1.5 1233,6 V38.5 Z" fill="url(#gDev)"/>
<path d="M1055,38.5 V6 Q1055,1.5 1060,1.5 H1062 V38.5 Z" fill="#1fd01f"/>
<circle cx="1164" cy="19.5" r="12" fill="url(#gDevBtn)"/>
<path d="M1158.5,17 h11 l-5.5,6.5 z" fill="#f4f4f4"/>
<text x="1066.0" y="14.8" font-size="14.2" fill="#f2f2f2" textLength="82.0" lengthAdjust="spacingAndGlyphs">X-Rite i1Pro 3</text>
<text x="1066.0" y="33.8" font-size="14.2" fill="#f2f2f2" textLength="70.0" lengthAdjust="spacingAndGlyphs">Direct View</text>
<line x1="1188.50" y1="3.00" x2="1188.50" y2="38.50" stroke="#4a4a4a" stroke-width="1"/>
<circle cx="1214" cy="19.5" r="15.5" fill="#0000f0" stroke="#e8e8ff" stroke-width="1.2"/>
<text x="1214.0" y="24.5" font-size="13" fill="#ffffff" text-anchor="middle" textLength="19.0" lengthAdjust="spacingAndGlyphs">707</text>
<rect x="1237.00" y="3.00" width="4.50" height="35.50" fill="url(#gGlow)"/>
<path d="M1241,38.5 V6 Q1241,1.5 1246,1.5 H1398 Q1403,1.5 1403,6 V38.5 Z" fill="url(#gDev)"/>
<path d="M1241,38.5 V6 Q1241,1.5 1246,1.5 H1248 V38.5 Z" fill="#f2f2f2"/>
<circle cx="1384" cy="19.5" r="12" fill="url(#gDevBtn)"/>
<path d="M1378.5,17 h11 l-5.5,6.5 z" fill="#f4f4f4"/>
<text x="1252.0" y="14.8" font-size="14.2" fill="#f2f2f2" textLength="80.0" lengthAdjust="spacingAndGlyphs">Mobile Forge</text>
<path d="M1412,38.5 V6 Q1412,1.5 1417,1.5 H1585 Q1590,1.5 1590,6 V38.5 Z" fill="url(#gDev)"/>
<path d="M1412,38.5 V6 Q1412,1.5 1417,1.5 H1419 V38.5 Z" fill="#e8e800"/>
<circle cx="1571" cy="19.5" r="12" fill="url(#gDevBtn)"/>
<path d="M1565.5,17 h11 l-5.5,6.5 z" fill="#f4f4f4"/>
<text x="1423.0" y="14.8" font-size="14.2" fill="#f2f2f2" textLength="131.0" lengthAdjust="spacingAndGlyphs">Direct Display Control</text>
<rect x="1594.5" y="1.5" width="41.8" height="34.2" rx="5" fill="url(#gBtn)" stroke="#c8c8c8" stroke-width="1.1"/>
<rect x="1637.3" y="1.5" width="42" height="34.2" rx="5" fill="url(#gBtn)" stroke="#c8c8c8" stroke-width="1.1"/>
<circle cx="1614.9" cy="18.5" r="12.3" fill="url(#gBtnC)"/>
<circle cx="1653.2" cy="18.5" r="12.3" fill="url(#gBtnC)"/>
<g transform="translate(1614.9,18.4)"><path d="M-1.5,-5.2 L-1.0,-8.0 H1.0 L1.5,-5.2 Z" fill="#ececec" transform="rotate(0)"/><path d="M-1.5,-5.2 L-1.0,-8.0 H1.0 L1.5,-5.2 Z" fill="#ececec" transform="rotate(45)"/><path d="M-1.5,-5.2 L-1.0,-8.0 H1.0 L1.5,-5.2 Z" fill="#ececec" transform="rotate(90)"/><path d="M-1.5,-5.2 L-1.0,-8.0 H1.0 L1.5,-5.2 Z" fill="#ececec" transform="rotate(135)"/><path d="M-1.5,-5.2 L-1.0,-8.0 H1.0 L1.5,-5.2 Z" fill="#ececec" transform="rotate(180)"/><path d="M-1.5,-5.2 L-1.0,-8.0 H1.0 L1.5,-5.2 Z" fill="#ececec" transform="rotate(225)"/><path d="M-1.5,-5.2 L-1.0,-8.0 H1.0 L1.5,-5.2 Z" fill="#ececec" transform="rotate(270)"/><path d="M-1.5,-5.2 L-1.0,-8.0 H1.0 L1.5,-5.2 Z" fill="#ececec" transform="rotate(315)"/><circle r="4.95" fill="none" stroke="#ececec" stroke-width="1.9"/></g>
<path d="M1657.3,11.1 V23.9 L1650.0,17.5 Z" fill="#f6f6f6"/>
<rect x="1663.00" y="0.00" width="6.00" height="38.00" fill="url(#gREdge)"/>
<text x="9.0" y="124.8" font-size="39.8" fill="#f4f4f4" textLength="332.0" lengthAdjust="spacingAndGlyphs">Saturation Sweeps</text>
<rect x="43.90" y="217.00" width="312.70" height="386.50" fill="#252525"/>
<line x1="84.50" y1="217.00" x2="84.50" y2="603.50" stroke="#8c8c8c" stroke-width="1"/>
<line x1="127.10" y1="217.00" x2="127.10" y2="603.50" stroke="#8c8c8c" stroke-width="1"/>
<line x1="167.50" y1="217.00" x2="167.50" y2="603.50" stroke="#8c8c8c" stroke-width="1"/>
<line x1="209.90" y1="217.00" x2="209.90" y2="603.50" stroke="#8c8c8c" stroke-width="1"/>
<line x1="250.30" y1="217.00" x2="250.30" y2="603.50" stroke="#8c8c8c" stroke-width="1"/>
<line x1="292.90" y1="217.00" x2="292.90" y2="603.50" stroke="#8c8c8c" stroke-width="1"/>
<line x1="333.90" y1="217.00" x2="333.90" y2="603.50" stroke="#8c8c8c" stroke-width="1"/>
<rect x="44.4" y="217.5" width="312.70000000000005" height="386.0" fill="none" stroke="#9c9c9c" stroke-width="1"/>
<line x1="43.90" y1="217.00" x2="43.90" y2="604.50" stroke="#b4b4b4" stroke-width="1.6"/>
<line x1="43.90" y1="603.80" x2="357.60" y2="603.80" stroke="#b4b4b4" stroke-width="1.6"/>
<line x1="37.90" y1="217.30" x2="43.90" y2="217.30" stroke="#c8c8c8" stroke-width="2"/>
<line x1="37.90" y1="281.72" x2="43.90" y2="281.72" stroke="#c8c8c8" stroke-width="1.3"/>
<line x1="37.90" y1="346.13" x2="43.90" y2="346.13" stroke="#c8c8c8" stroke-width="1.3"/>
<line x1="37.90" y1="410.55" x2="43.90" y2="410.55" stroke="#c8c8c8" stroke-width="1.3"/>
<line x1="37.90" y1="474.97" x2="43.90" y2="474.97" stroke="#c8c8c8" stroke-width="1.3"/>
<line x1="37.90" y1="539.38" x2="43.90" y2="539.38" stroke="#c8c8c8" stroke-width="1.3"/>
<line x1="37.90" y1="603.80" x2="43.90" y2="603.80" stroke="#c8c8c8" stroke-width="1.3"/>
<line x1="43.90" y1="603.50" x2="43.90" y2="608.50" stroke="#c8c8c8" stroke-width="1.5"/>
<text x="40.0" y="624.9" font-size="13.4" fill="#dcdcdc" textLength="7.9" lengthAdjust="spacingAndGlyphs">0</text>
<line x1="84.50" y1="603.50" x2="84.50" y2="608.50" stroke="#c8c8c8" stroke-width="1.5"/>
<text x="80.6" y="624.9" font-size="13.4" fill="#dcdcdc" textLength="7.9" lengthAdjust="spacingAndGlyphs">2</text>
<line x1="127.10" y1="603.50" x2="127.10" y2="608.50" stroke="#c8c8c8" stroke-width="1.5"/>
<text x="123.2" y="624.9" font-size="13.4" fill="#dcdcdc" textLength="7.9" lengthAdjust="spacingAndGlyphs">4</text>
<line x1="167.50" y1="603.50" x2="167.50" y2="608.50" stroke="#c8c8c8" stroke-width="1.5"/>
<text x="163.6" y="624.9" font-size="13.4" fill="#dcdcdc" textLength="7.9" lengthAdjust="spacingAndGlyphs">6</text>
<line x1="209.90" y1="603.50" x2="209.90" y2="608.50" stroke="#c8c8c8" stroke-width="1.5"/>
<text x="206.0" y="624.9" font-size="13.4" fill="#dcdcdc" textLength="7.9" lengthAdjust="spacingAndGlyphs">8</text>
<line x1="250.30" y1="603.50" x2="250.30" y2="608.50" stroke="#c8c8c8" stroke-width="1.5"/>
<text x="242.4" y="624.9" font-size="13.4" fill="#dcdcdc" textLength="15.8" lengthAdjust="spacingAndGlyphs">10</text>
<line x1="292.90" y1="603.50" x2="292.90" y2="608.50" stroke="#c8c8c8" stroke-width="1.5"/>
<text x="285.0" y="624.9" font-size="13.4" fill="#dcdcdc" textLength="15.8" lengthAdjust="spacingAndGlyphs">12</text>
<line x1="333.90" y1="603.50" x2="333.90" y2="608.50" stroke="#c8c8c8" stroke-width="1.5"/>
<text x="326.0" y="624.9" font-size="13.4" fill="#dcdcdc" textLength="15.8" lengthAdjust="spacingAndGlyphs">14</text>
<text x="142.0" y="212.0" font-size="13.4" fill="#dcdcdc" textLength="79.5" lengthAdjust="spacingAndGlyphs">DeltaE 2000</text>
<rect x="44.3" y="223.40" width="39.4" height="6.80" fill="#000"/>
<rect x="44.9" y="224.80" width="37.5" height="3.90" fill="url(#hb100_0)"/>
<rect x="44.3" y="230.35" width="70.7" height="6.80" fill="#000"/>
<rect x="44.9" y="231.75" width="68.8" height="3.90" fill="url(#hb100_1)"/>
<rect x="44.3" y="237.30" width="40.8" height="6.80" fill="#000"/>
<rect x="44.9" y="238.70" width="38.9" height="3.90" fill="url(#hb100_2)"/>
<rect x="44.3" y="244.25" width="73.9" height="6.80" fill="#000"/>
<rect x="44.9" y="245.65" width="72.0" height="3.90" fill="url(#hb100_3)"/>
<rect x="44.3" y="251.20" width="66.5" height="6.80" fill="#000"/>
<rect x="44.9" y="252.60" width="64.6" height="3.90" fill="url(#hb100_4)"/>
<rect x="44.3" y="258.15" width="69.7" height="6.80" fill="#000"/>
<rect x="44.9" y="259.55" width="67.8" height="3.90" fill="url(#hb100_5)"/>
<rect x="44.3" y="287.55" width="23.4" height="6.80" fill="#000"/>
<rect x="44.9" y="288.95" width="21.5" height="3.90" fill="url(#hb80_0)"/>
<rect x="44.3" y="294.50" width="68.3" height="6.80" fill="#000"/>
<rect x="44.9" y="295.90" width="66.4" height="3.90" fill="url(#hb80_1)"/>
<rect x="44.3" y="301.45" width="58.6" height="6.80" fill="#000"/>
<rect x="44.9" y="302.85" width="56.7" height="3.90" fill="url(#hb80_2)"/>
<rect x="44.3" y="308.40" width="72.5" height="6.80" fill="#000"/>
<rect x="44.9" y="309.80" width="70.6" height="3.90" fill="url(#hb80_3)"/>
<rect x="44.3" y="315.35" width="76.6" height="6.80" fill="#000"/>
<rect x="44.9" y="316.75" width="74.7" height="3.90" fill="url(#hb80_4)"/>
<rect x="44.3" y="322.30" width="69.3" height="6.80" fill="#000"/>
<rect x="44.9" y="323.70" width="67.4" height="3.90" fill="url(#hb80_5)"/>
<rect x="44.3" y="351.70" width="17.6" height="6.80" fill="#000"/>
<rect x="44.9" y="353.10" width="15.7" height="3.90" fill="url(#hb60_0)"/>
<rect x="44.3" y="358.65" width="69.3" height="6.80" fill="#000"/>
<rect x="44.9" y="360.05" width="67.4" height="3.90" fill="url(#hb60_1)"/>
<rect x="44.3" y="365.60" width="69.3" height="6.80" fill="#000"/>
<rect x="44.9" y="367.00" width="67.4" height="3.90" fill="url(#hb60_2)"/>
<rect x="44.3" y="372.55" width="70.2" height="6.80" fill="#000"/>
<rect x="44.9" y="373.95" width="68.3" height="3.90" fill="url(#hb60_3)"/>
<rect x="44.3" y="379.50" width="74.4" height="6.80" fill="#000"/>
<rect x="44.9" y="380.90" width="72.5" height="3.90" fill="url(#hb60_4)"/>
<rect x="44.3" y="386.45" width="69.3" height="6.80" fill="#000"/>
<rect x="44.9" y="387.85" width="67.4" height="3.90" fill="url(#hb60_5)"/>
<rect x="44.3" y="415.85" width="17.6" height="6.80" fill="#000"/>
<rect x="44.9" y="417.25" width="15.7" height="3.90" fill="url(#hb40_0)"/>
<rect x="44.3" y="422.80" width="65.5" height="6.80" fill="#000"/>
<rect x="44.9" y="424.20" width="63.6" height="3.90" fill="url(#hb40_1)"/>
<rect x="44.3" y="429.75" width="76.2" height="6.80" fill="#000"/>
<rect x="44.9" y="431.15" width="74.3" height="3.90" fill="url(#hb40_2)"/>
<rect x="44.3" y="436.70" width="70.2" height="6.80" fill="#000"/>
<rect x="44.9" y="438.10" width="68.3" height="3.90" fill="url(#hb40_3)"/>
<rect x="44.3" y="443.65" width="72.0" height="6.80" fill="#000"/>
<rect x="44.9" y="445.05" width="70.1" height="3.90" fill="url(#hb40_4)"/>
<rect x="44.3" y="450.60" width="67.9" height="6.80" fill="#000"/>
<rect x="44.9" y="452.00" width="66.0" height="3.90" fill="url(#hb40_5)"/>
<rect x="44.3" y="480.00" width="13.7" height="6.80" fill="#000"/>
<rect x="44.9" y="481.40" width="11.8" height="3.90" fill="url(#hb20_0)"/>
<rect x="44.3" y="486.95" width="20.5" height="6.80" fill="#000"/>
<rect x="44.9" y="488.35" width="18.6" height="3.90" fill="url(#hb20_1)"/>
<rect x="44.3" y="493.90" width="70.8" height="6.80" fill="#000"/>
<rect x="44.9" y="495.30" width="68.9" height="3.90" fill="url(#hb20_2)"/>
<rect x="44.3" y="500.85" width="68.2" height="6.80" fill="#000"/>
<rect x="44.9" y="502.25" width="66.3" height="3.90" fill="url(#hb20_3)"/>
<rect x="44.3" y="507.80" width="70.8" height="6.80" fill="#000"/>
<rect x="44.9" y="509.20" width="68.9" height="3.90" fill="url(#hb20_4)"/>
<rect x="44.3" y="514.75" width="68.2" height="6.80" fill="#000"/>
<rect x="44.9" y="516.15" width="66.3" height="3.90" fill="url(#hb20_5)"/>
<rect x="44.3" y="585.30" width="13.7" height="6.80" fill="#000"/>
<rect x="44.9" y="586.70" width="11.8" height="3.90" fill="url(#hbw)"/>
<text x="6.5" y="255.3" font-size="13.4" fill="#dcdcdc" textLength="36.3" lengthAdjust="spacingAndGlyphs">100%</text>
<text x="14.4" y="319.7" font-size="13.4" fill="#dcdcdc" textLength="28.4" lengthAdjust="spacingAndGlyphs">80%</text>
<text x="14.4" y="384.1" font-size="13.4" fill="#dcdcdc" textLength="28.4" lengthAdjust="spacingAndGlyphs">60%</text>
<text x="14.4" y="448.6" font-size="13.4" fill="#dcdcdc" textLength="28.4" lengthAdjust="spacingAndGlyphs">40%</text>
<text x="14.4" y="513.0" font-size="13.4" fill="#dcdcdc" textLength="28.4" lengthAdjust="spacingAndGlyphs">20%</text>
<text x="19.1" y="578.3" font-size="13.4" fill="#dcdcdc" textLength="23.7" lengthAdjust="spacingAndGlyphs">100</text>
<rect x="408.40" y="163.20" width="145.00" height="281.90" fill="#252525"/>
<line x1="408.40" y1="210.20" x2="553.40" y2="210.20" stroke="#8c8c8c" stroke-width="1.2"/>
<line x1="408.40" y1="258.00" x2="553.40" y2="258.00" stroke="#8c8c8c" stroke-width="1.2"/>
<line x1="408.40" y1="305.20" x2="553.40" y2="305.20" stroke="#8c8c8c" stroke-width="1.2"/>
<line x1="408.40" y1="351.30" x2="553.40" y2="351.30" stroke="#8c8c8c" stroke-width="1.2"/>
<line x1="408.40" y1="399.00" x2="553.40" y2="399.00" stroke="#8c8c8c" stroke-width="1.2"/>
<rect x="408.4" y="163.2" width="145.0" height="281.9" fill="none" stroke="#9c9c9c" stroke-width="1.3"/>
<line x1="408.40" y1="162.90" x2="553.40" y2="162.90" stroke="#9c9c9c" stroke-width="1.8"/>
<line x1="403.40" y1="163.20" x2="408.40" y2="163.20" stroke="#d0d0d0" stroke-width="1.4"/>
<text x="386.6" y="168.1" font-size="13.4" fill="#dcdcdc" textLength="15.8" lengthAdjust="spacingAndGlyphs">15</text>
<line x1="403.40" y1="210.20" x2="408.40" y2="210.20" stroke="#d0d0d0" stroke-width="1.4"/>
<text x="386.6" y="215.1" font-size="13.4" fill="#dcdcdc" textLength="15.8" lengthAdjust="spacingAndGlyphs">10</text>
<line x1="403.40" y1="258.00" x2="408.40" y2="258.00" stroke="#d0d0d0" stroke-width="1.4"/>
<text x="394.5" y="262.9" font-size="13.4" fill="#dcdcdc" textLength="7.9" lengthAdjust="spacingAndGlyphs">5</text>
<line x1="403.40" y1="305.20" x2="408.40" y2="305.20" stroke="#d0d0d0" stroke-width="1.4"/>
<text x="394.5" y="310.1" font-size="13.4" fill="#dcdcdc" textLength="7.9" lengthAdjust="spacingAndGlyphs">0</text>
<line x1="403.40" y1="351.30" x2="408.40" y2="351.30" stroke="#d0d0d0" stroke-width="1.4"/>
<text x="389.8" y="356.2" font-size="13.4" fill="#dcdcdc" textLength="12.6" lengthAdjust="spacingAndGlyphs">-5</text>
<line x1="403.40" y1="399.00" x2="408.40" y2="399.00" stroke="#d0d0d0" stroke-width="1.4"/>
<text x="381.9" y="403.9" font-size="13.4" fill="#dcdcdc" textLength="20.5" lengthAdjust="spacingAndGlyphs">-10</text>
<line x1="403.40" y1="445.10" x2="408.40" y2="445.10" stroke="#d0d0d0" stroke-width="1.4"/>
<text x="381.9" y="450.0" font-size="13.4" fill="#dcdcdc" textLength="20.5" lengthAdjust="spacingAndGlyphs">-15</text>
<line x1="408.40" y1="445.10" x2="408.40" y2="451.10" stroke="#d0d0d0" stroke-width="1.4"/>
<line x1="553.40" y1="445.10" x2="553.40" y2="451.10" stroke="#d0d0d0" stroke-width="1.4"/>
<text x="462.8" y="461.6" font-size="13.4" fill="#dcdcdc" textLength="36.3" lengthAdjust="spacingAndGlyphs">100%</text>
<text x="445.1" y="157.9" font-size="13.4" fill="#dcdcdc" textLength="45.4" lengthAdjust="spacingAndGlyphs">Delta L</text>
<rect x="423.30" y="303.90" width="115.60" height="43.00" fill="#000"/>
<rect x="424.30" y="305.10" width="113.60" height="40.80" fill="url(#gYbar)"/>
<rect x="605.40" y="163.20" width="145.00" height="281.90" fill="#252525"/>
<line x1="605.40" y1="210.20" x2="750.40" y2="210.20" stroke="#8c8c8c" stroke-width="1.2"/>
<line x1="605.40" y1="258.00" x2="750.40" y2="258.00" stroke="#8c8c8c" stroke-width="1.2"/>
<line x1="605.40" y1="305.20" x2="750.40" y2="305.20" stroke="#8c8c8c" stroke-width="1.2"/>
<line x1="605.40" y1="351.30" x2="750.40" y2="351.30" stroke="#8c8c8c" stroke-width="1.2"/>
<line x1="605.40" y1="399.00" x2="750.40" y2="399.00" stroke="#8c8c8c" stroke-width="1.2"/>
<rect x="605.4" y="163.2" width="145.0" height="281.9" fill="none" stroke="#9c9c9c" stroke-width="1.3"/>
<line x1="605.40" y1="162.90" x2="750.40" y2="162.90" stroke="#9c9c9c" stroke-width="1.8"/>
<line x1="600.40" y1="163.20" x2="605.40" y2="163.20" stroke="#d0d0d0" stroke-width="1.4"/>
<text x="583.6" y="168.1" font-size="13.4" fill="#dcdcdc" textLength="15.8" lengthAdjust="spacingAndGlyphs">15</text>
<line x1="600.40" y1="210.20" x2="605.40" y2="210.20" stroke="#d0d0d0" stroke-width="1.4"/>
<text x="583.6" y="215.1" font-size="13.4" fill="#dcdcdc" textLength="15.8" lengthAdjust="spacingAndGlyphs">10</text>
<line x1="600.40" y1="258.00" x2="605.40" y2="258.00" stroke="#d0d0d0" stroke-width="1.4"/>
<text x="591.5" y="262.9" font-size="13.4" fill="#dcdcdc" textLength="7.9" lengthAdjust="spacingAndGlyphs">5</text>
<line x1="600.40" y1="305.20" x2="605.40" y2="305.20" stroke="#d0d0d0" stroke-width="1.4"/>
<text x="591.5" y="310.1" font-size="13.4" fill="#dcdcdc" textLength="7.9" lengthAdjust="spacingAndGlyphs">0</text>
<line x1="600.40" y1="351.30" x2="605.40" y2="351.30" stroke="#d0d0d0" stroke-width="1.4"/>
<text x="586.8" y="356.2" font-size="13.4" fill="#dcdcdc" textLength="12.6" lengthAdjust="spacingAndGlyphs">-5</text>
<line x1="600.40" y1="399.00" x2="605.40" y2="399.00" stroke="#d0d0d0" stroke-width="1.4"/>
<text x="578.9" y="403.9" font-size="13.4" fill="#dcdcdc" textLength="20.5" lengthAdjust="spacingAndGlyphs">-10</text>
<line x1="600.40" y1="445.10" x2="605.40" y2="445.10" stroke="#d0d0d0" stroke-width="1.4"/>
<text x="578.9" y="450.0" font-size="13.4" fill="#dcdcdc" textLength="20.5" lengthAdjust="spacingAndGlyphs">-15</text>
<line x1="605.40" y1="445.10" x2="605.40" y2="451.10" stroke="#d0d0d0" stroke-width="1.4"/>
<line x1="750.40" y1="445.10" x2="750.40" y2="451.10" stroke="#d0d0d0" stroke-width="1.4"/>
<text x="659.8" y="461.6" font-size="13.4" fill="#dcdcdc" textLength="36.3" lengthAdjust="spacingAndGlyphs">100%</text>
<text x="640.9" y="157.9" font-size="13.4" fill="#dcdcdc" textLength="47.8" lengthAdjust="spacingAndGlyphs">Delta C</text>
<rect x="620.40" y="292.80" width="115.40" height="12.20" fill="#000"/>
<rect x="621.40" y="294.00" width="113.40" height="10.00" fill="url(#gYbar)"/>
<rect x="803.40" y="163.20" width="145.00" height="281.90" fill="#252525"/>
<line x1="803.40" y1="210.20" x2="948.40" y2="210.20" stroke="#8c8c8c" stroke-width="1.2"/>
<line x1="803.40" y1="258.00" x2="948.40" y2="258.00" stroke="#8c8c8c" stroke-width="1.2"/>
<line x1="803.40" y1="305.20" x2="948.40" y2="305.20" stroke="#8c8c8c" stroke-width="1.2"/>
<line x1="803.40" y1="351.30" x2="948.40" y2="351.30" stroke="#8c8c8c" stroke-width="1.2"/>
<line x1="803.40" y1="399.00" x2="948.40" y2="399.00" stroke="#8c8c8c" stroke-width="1.2"/>
<rect x="803.4" y="163.2" width="145.0" height="281.9" fill="none" stroke="#9c9c9c" stroke-width="1.3"/>
<line x1="803.40" y1="162.90" x2="948.40" y2="162.90" stroke="#9c9c9c" stroke-width="1.8"/>
<line x1="798.40" y1="163.20" x2="803.40" y2="163.20" stroke="#d0d0d0" stroke-width="1.4"/>
<text x="781.6" y="168.1" font-size="13.4" fill="#dcdcdc" textLength="15.8" lengthAdjust="spacingAndGlyphs">15</text>
<line x1="798.40" y1="210.20" x2="803.40" y2="210.20" stroke="#d0d0d0" stroke-width="1.4"/>
<text x="781.6" y="215.1" font-size="13.4" fill="#dcdcdc" textLength="15.8" lengthAdjust="spacingAndGlyphs">10</text>
<line x1="798.40" y1="258.00" x2="803.40" y2="258.00" stroke="#d0d0d0" stroke-width="1.4"/>
<text x="789.5" y="262.9" font-size="13.4" fill="#dcdcdc" textLength="7.9" lengthAdjust="spacingAndGlyphs">5</text>
<line x1="798.40" y1="305.20" x2="803.40" y2="305.20" stroke="#d0d0d0" stroke-width="1.4"/>
<text x="789.5" y="310.1" font-size="13.4" fill="#dcdcdc" textLength="7.9" lengthAdjust="spacingAndGlyphs">0</text>
<line x1="798.40" y1="351.30" x2="803.40" y2="351.30" stroke="#d0d0d0" stroke-width="1.4"/>
<text x="784.8" y="356.2" font-size="13.4" fill="#dcdcdc" textLength="12.6" lengthAdjust="spacingAndGlyphs">-5</text>
<line x1="798.40" y1="399.00" x2="803.40" y2="399.00" stroke="#d0d0d0" stroke-width="1.4"/>
<text x="776.9" y="403.9" font-size="13.4" fill="#dcdcdc" textLength="20.5" lengthAdjust="spacingAndGlyphs">-10</text>
<line x1="798.40" y1="445.10" x2="803.40" y2="445.10" stroke="#d0d0d0" stroke-width="1.4"/>
<text x="776.9" y="450.0" font-size="13.4" fill="#dcdcdc" textLength="20.5" lengthAdjust="spacingAndGlyphs">-15</text>
<line x1="803.40" y1="445.10" x2="803.40" y2="451.10" stroke="#d0d0d0" stroke-width="1.4"/>
<line x1="948.40" y1="445.10" x2="948.40" y2="451.10" stroke="#d0d0d0" stroke-width="1.4"/>
<text x="857.8" y="461.6" font-size="13.4" fill="#dcdcdc" textLength="36.3" lengthAdjust="spacingAndGlyphs">100%</text>
<text x="838.3" y="157.9" font-size="13.4" fill="#dcdcdc" textLength="47.8" lengthAdjust="spacingAndGlyphs">Delta H</text>
<rect x="818.00" y="303.50" width="115.00" height="1.10" fill="#000"/>
<rect x="375.90" y="471.30" width="591.80" height="163.60" fill="#000000"/>
<rect x="395.90" y="478.80" width="100.30" height="132.40" fill="#b3b399"/>
<rect x="395.90" y="544.50" width="100.30" height="66.70" fill="#bfbfa3"/>
<rect x="396.4" y="479.3" width="99.3" height="131.4" fill="none" stroke="#f4f4f0" stroke-width="1.1"/>
<text x="434.1" y="625.8" font-size="11.9" fill="#ffffff" textLength="23.8" lengthAdjust="spacingAndGlyphs">20%</text>
<rect x="511.90" y="478.80" width="99.30" height="132.40" fill="#b3b382"/>
<rect x="511.90" y="544.50" width="99.30" height="66.70" fill="#bfbf89"/>
<rect x="512.4" y="479.3" width="98.3" height="131.4" fill="none" stroke="#f4f4f0" stroke-width="1.1"/>
<text x="549.6" y="625.8" font-size="11.9" fill="#ffffff" textLength="23.8" lengthAdjust="spacingAndGlyphs">40%</text>
<rect x="628.00" y="478.80" width="99.00" height="132.40" fill="#b2b265"/>
<rect x="628.00" y="544.50" width="99.00" height="66.70" fill="#bebe6c"/>
<rect x="628.5" y="479.3" width="98.0" height="131.4" fill="none" stroke="#f4f4f0" stroke-width="1.1"/>
<text x="665.6" y="625.8" font-size="11.9" fill="#ffffff" textLength="23.8" lengthAdjust="spacingAndGlyphs">60%</text>
<rect x="743.00" y="478.80" width="100.00" height="132.40" fill="#b1b249"/>
<rect x="743.00" y="544.50" width="100.00" height="66.70" fill="#bfc04e"/>
<rect x="743.5" y="479.3" width="99.0" height="131.4" fill="none" stroke="#f4f4f0" stroke-width="1.1"/>
<text x="781.1" y="625.8" font-size="11.9" fill="#ffffff" textLength="23.8" lengthAdjust="spacingAndGlyphs">80%</text>
<rect x="859.10" y="478.80" width="100.00" height="132.40" fill="#b7b300"/>
<rect x="859.10" y="544.50" width="100.00" height="66.70" fill="#c4c00e"/>
<rect x="859.6" y="479.3" width="99.0" height="131.4" fill="none" stroke="#f4f4f0" stroke-width="1.1"/>
<text x="893.9" y="625.8" font-size="11.9" fill="#ffffff" textLength="30.4" lengthAdjust="spacingAndGlyphs">100%</text>
<g transform="translate(388.6,525.2) rotate(-90)"><text x="0.0" y="0.0" font-size="13" fill="#ffffff" textLength="34.3" lengthAdjust="spacingAndGlyphs">Actual</text></g>
<g transform="translate(388.6,599.6) rotate(-90)"><text x="0.0" y="0.0" font-size="13" fill="#ffffff" textLength="34.6" lengthAdjust="spacingAndGlyphs">Target</text></g>
<rect x="974.40" y="90.00" width="694.60" height="558.00" fill="#1c1c1c"/>
<rect x="981.00" y="97.00" width="681.40" height="545.00" fill="#343434"/>
<rect x="1018.60" y="120.90" width="640.00" height="491.40" fill="#252525"/>
<g clip-path="url(#cPlot)"><g filter="url(#fEdge)"><g clip-path="url(#cLocus)"><rect x="1055.4" y="130.9" width="42.3" height="2.6" fill="url(#r0)"/><rect x="1042.4" y="132.9" width="83.8" height="2.6" fill="url(#r1)"/><rect x="1036.8" y="134.9" width="110.6" height="2.6" fill="url(#r2)"/><rect x="1032.9" y="136.9" width="133.7" height="2.6" fill="url(#r3)"/><rect x="1030.3" y="138.9" width="154.8" height="2.6" fill="url(#r4)"/><rect x="1028.2" y="140.9" width="174.8" height="2.6" fill="url(#r5)"/><rect x="1026.5" y="142.9" width="194.3" height="2.6" fill="url(#r6)"/><rect x="1025.1" y="144.9" width="213.4" height="2.6" fill="url(#r7)"/><rect x="1023.9" y="146.9" width="232.1" height="2.6" fill="url(#r8)"/><rect x="1022.9" y="148.9" width="250.4" height="2.6" fill="url(#r9)"/><rect x="1022.2" y="150.9" width="268.6" height="2.6" fill="url(#r10)"/><rect x="1021.5" y="152.9" width="286.6" height="2.6" fill="url(#r11)"/><rect x="1020.9" y="154.9" width="304.6" height="2.6" fill="url(#r12)"/><rect x="1020.5" y="156.9" width="322.4" height="2.6" fill="url(#r13)"/><rect x="1020.1" y="158.9" width="340.3" height="2.6" fill="url(#r14)"/><rect x="1019.8" y="160.9" width="358.0" height="2.6" fill="url(#r15)"/><rect x="1019.6" y="162.9" width="375.5" height="2.6" fill="url(#r16)"/><rect x="1019.5" y="164.9" width="392.9" height="2.6" fill="url(#r17)"/><rect x="1019.4" y="166.9" width="410.4" height="2.6" fill="url(#r18)"/><rect x="1019.4" y="168.9" width="427.8" height="2.6" fill="url(#r19)"/><rect x="1019.4" y="170.9" width="445.2" height="2.6" fill="url(#r20)"/><rect x="1019.4" y="172.9" width="462.6" height="2.6" fill="url(#r21)"/><rect x="1019.5" y="174.9" width="480.1" height="2.6" fill="url(#r22)"/><rect x="1019.6" y="176.9" width="497.6" height="2.6" fill="url(#r23)"/><rect x="1019.7" y="178.9" width="514.8" height="2.6" fill="url(#r24)"/><rect x="1019.9" y="180.9" width="531.9" height="2.6" fill="url(#r25)"/><rect x="1020.1" y="182.9" width="549.0" height="2.6" fill="url(#r26)"/><rect x="1020.4" y="184.9" width="566.2" height="2.6" fill="url(#r27)"/><rect x="1020.6" y="186.9" width="583.4" height="2.6" fill="url(#r28)"/><rect x="1021.0" y="188.9" width="600.4" height="2.6" fill="url(#r29)"/><rect x="1021.3" y="190.9" width="617.4" height="2.6" fill="url(#r30)"/><rect x="1021.7" y="192.9" width="634.6" height="2.6" fill="url(#r31)"/><rect x="1022.0" y="194.9" width="636.6" height="2.6" fill="url(#r32)"/><rect x="1022.4" y="196.9" width="636.2" height="2.6" fill="url(#r33)"/><rect x="1022.8" y="198.9" width="635.8" height="2.6" fill="url(#r34)"/><rect x="1023.3" y="200.9" width="635.3" height="2.6" fill="url(#r35)"/><rect x="1023.7" y="202.9" width="634.9" height="2.6" fill="url(#r36)"/><rect x="1024.2" y="204.9" width="634.4" height="2.6" fill="url(#r37)"/><rect x="1024.7" y="206.9" width="633.9" height="2.6" fill="url(#r38)"/><rect x="1025.2" y="208.9" width="633.4" height="2.6" fill="url(#r39)"/><rect x="1025.7" y="210.9" width="632.9" height="2.6" fill="url(#r40)"/><rect x="1026.2" y="212.9" width="632.4" height="2.6" fill="url(#r41)"/><rect x="1026.7" y="214.9" width="631.9" height="2.6" fill="url(#r42)"/><rect x="1027.3" y="216.9" width="631.3" height="2.6" fill="url(#r43)"/><rect x="1027.8" y="218.9" width="630.8" height="2.6" fill="url(#r44)"/><rect x="1028.4" y="220.9" width="630.2" height="2.6" fill="url(#r45)"/><rect x="1029.0" y="222.9" width="629.6" height="2.6" fill="url(#r46)"/><rect x="1029.6" y="224.9" width="627.2" height="2.6" fill="url(#r47)"/><rect x="1030.2" y="226.9" width="624.7" height="2.6" fill="url(#r48)"/><rect x="1030.9" y="228.9" width="622.1" height="2.6" fill="url(#r49)"/><rect x="1031.5" y="230.9" width="619.5" height="2.6" fill="url(#r50)"/><rect x="1032.2" y="232.9" width="616.9" height="2.6" fill="url(#r51)"/><rect x="1032.8" y="234.9" width="614.3" height="2.6" fill="url(#r52)"/><rect x="1033.5" y="236.9" width="611.6" height="2.6" fill="url(#r53)"/><rect x="1034.2" y="238.9" width="609.0" height="2.6" fill="url(#r54)"/><rect x="1034.8" y="240.9" width="606.4" height="2.6" fill="url(#r55)"/><rect x="1035.5" y="242.9" width="603.7" height="2.6" fill="url(#r56)"/><rect x="1036.2" y="244.9" width="601.1" height="2.6" fill="url(#r57)"/><rect x="1036.9" y="246.9" width="598.4" height="2.6" fill="url(#r58)"/><rect x="1037.6" y="248.9" width="595.7" height="2.6" fill="url(#r59)"/><rect x="1038.4" y="250.9" width="593.1" height="2.6" fill="url(#r60)"/><rect x="1039.1" y="252.9" width="590.4" height="2.6" fill="url(#r61)"/><rect x="1039.8" y="254.9" width="587.7" height="2.6" fill="url(#r62)"/><rect x="1040.6" y="256.9" width="585.0" height="2.6" fill="url(#r63)"/><rect x="1041.3" y="258.9" width="582.3" height="2.6" fill="url(#r64)"/><rect x="1042.1" y="260.9" width="579.6" height="2.6" fill="url(#r65)"/><rect x="1042.8" y="262.9" width="576.8" height="2.6" fill="url(#r66)"/><rect x="1043.6" y="264.9" width="574.1" height="2.6" fill="url(#r67)"/><rect x="1044.4" y="266.9" width="571.4" height="2.6" fill="url(#r68)"/><rect x="1045.2" y="268.9" width="568.6" height="2.6" fill="url(#r69)"/><rect x="1046.0" y="270.9" width="565.9" height="2.6" fill="url(#r70)"/><rect x="1046.8" y="272.9" width="563.1" height="2.6" fill="url(#r71)"/><rect x="1047.6" y="274.9" width="560.3" height="2.6" fill="url(#r72)"/><rect x="1048.4" y="276.9" width="557.6" height="2.6" fill="url(#r73)"/><rect x="1049.3" y="278.9" width="554.8" height="2.6" fill="url(#r74)"/><rect x="1050.1" y="280.9" width="552.0" height="2.6" fill="url(#r75)"/><rect x="1050.9" y="282.9" width="549.2" height="2.6" fill="url(#r76)"/><rect x="1051.8" y="284.9" width="546.4" height="2.6" fill="url(#r77)"/><rect x="1052.6" y="286.9" width="543.6" height="2.6" fill="url(#r78)"/><rect x="1053.5" y="288.9" width="540.8" height="2.6" fill="url(#r79)"/><rect x="1054.3" y="290.9" width="538.0" height="2.6" fill="url(#r80)"/><rect x="1055.2" y="292.9" width="535.1" height="2.6" fill="url(#r81)"/><rect x="1056.1" y="294.9" width="532.3" height="2.6" fill="url(#r82)"/><rect x="1056.9" y="296.9" width="529.5" height="2.6" fill="url(#r83)"/><rect x="1057.8" y="298.9" width="526.6" height="2.6" fill="url(#r84)"/><rect x="1058.7" y="300.9" width="523.8" height="2.6" fill="url(#r85)"/><rect x="1059.6" y="302.9" width="520.9" height="2.6" fill="url(#r86)"/><rect x="1060.5" y="304.9" width="518.1" height="2.6" fill="url(#r87)"/><rect x="1061.4" y="306.9" width="515.2" height="2.6" fill="url(#r88)"/><rect x="1062.3" y="308.9" width="512.4" height="2.6" fill="url(#r89)"/><rect x="1063.2" y="310.9" width="509.5" height="2.6" fill="url(#r90)"/><rect x="1064.2" y="312.9" width="506.6" height="2.6" fill="url(#r91)"/><rect x="1065.1" y="314.9" width="503.7" height="2.6" fill="url(#r92)"/><rect x="1066.0" y="316.9" width="500.8" height="2.6" fill="url(#r93)"/><rect x="1067.0" y="318.9" width="497.9" height="2.6" fill="url(#r94)"/><rect x="1067.9" y="320.9" width="495.0" height="2.6" fill="url(#r95)"/><rect x="1068.9" y="322.9" width="492.1" height="2.6" fill="url(#r96)"/><rect x="1069.9" y="324.9" width="489.1" height="2.6" fill="url(#r97)"/><rect x="1070.9" y="326.9" width="486.2" height="2.6" fill="url(#r98)"/><rect x="1071.8" y="328.9" width="483.3" height="2.6" fill="url(#r99)"/><rect x="1072.8" y="330.9" width="480.3" height="2.6" fill="url(#r100)"/><rect x="1073.8" y="332.9" width="477.4" height="2.6" fill="url(#r101)"/><rect x="1074.9" y="334.9" width="474.4" height="2.6" fill="url(#r102)"/><rect x="1075.9" y="336.9" width="471.4" height="2.6" fill="url(#r103)"/><rect x="1076.9" y="338.9" width="468.4" height="2.6" fill="url(#r104)"/><rect x="1078.0" y="340.9" width="465.4" height="2.6" fill="url(#r105)"/><rect x="1079.0" y="342.9" width="462.4" height="2.6" fill="url(#r106)"/><rect x="1080.1" y="344.9" width="459.4" height="2.6" fill="url(#r107)"/><rect x="1081.2" y="346.9" width="456.3" height="2.6" fill="url(#r108)"/><rect x="1082.2" y="348.9" width="453.3" height="2.6" fill="url(#r109)"/><rect x="1083.3" y="350.9" width="450.3" height="2.6" fill="url(#r110)"/><rect x="1084.4" y="352.9" width="447.2" height="2.6" fill="url(#r111)"/><rect x="1085.5" y="354.9" width="444.2" height="2.6" fill="url(#r112)"/><rect x="1086.6" y="356.9" width="441.1" height="2.6" fill="url(#r113)"/><rect x="1087.7" y="358.9" width="438.0" height="2.6" fill="url(#r114)"/><rect x="1088.8" y="360.9" width="435.0" height="2.6" fill="url(#r115)"/><rect x="1090.0" y="362.9" width="431.9" height="2.6" fill="url(#r116)"/><rect x="1091.1" y="364.9" width="428.8" height="2.6" fill="url(#r117)"/><rect x="1092.2" y="366.9" width="425.7" height="2.6" fill="url(#r118)"/><rect x="1093.3" y="368.9" width="422.6" height="2.6" fill="url(#r119)"/><rect x="1094.5" y="370.9" width="419.5" height="2.6" fill="url(#r120)"/><rect x="1095.6" y="372.9" width="416.4" height="2.6" fill="url(#r121)"/><rect x="1096.8" y="374.9" width="413.3" height="2.6" fill="url(#r122)"/><rect x="1097.9" y="376.9" width="410.2" height="2.6" fill="url(#r123)"/><rect x="1099.1" y="378.9" width="407.1" height="2.6" fill="url(#r124)"/><rect x="1100.2" y="380.9" width="404.0" height="2.6" fill="url(#r125)"/><rect x="1101.4" y="382.9" width="400.9" height="2.6" fill="url(#r126)"/><rect x="1102.6" y="384.9" width="397.8" height="2.6" fill="url(#r127)"/><rect x="1103.7" y="386.9" width="394.6" height="2.6" fill="url(#r128)"/><rect x="1104.9" y="388.9" width="391.5" height="2.6" fill="url(#r129)"/><rect x="1106.1" y="390.9" width="388.4" height="2.6" fill="url(#r130)"/><rect x="1107.3" y="392.9" width="385.2" height="2.6" fill="url(#r131)"/><rect x="1108.5" y="394.9" width="382.1" height="2.6" fill="url(#r132)"/><rect x="1109.6" y="396.9" width="378.9" height="2.6" fill="url(#r133)"/><rect x="1110.8" y="398.9" width="375.8" height="2.6" fill="url(#r134)"/><rect x="1112.0" y="400.9" width="372.6" height="2.6" fill="url(#r135)"/><rect x="1113.2" y="402.9" width="369.5" height="2.6" fill="url(#r136)"/><rect x="1114.5" y="404.9" width="366.3" height="2.6" fill="url(#r137)"/><rect x="1115.7" y="406.9" width="363.1" height="2.6" fill="url(#r138)"/><rect x="1116.9" y="408.9" width="360.0" height="2.6" fill="url(#r139)"/><rect x="1118.1" y="410.9" width="356.8" height="2.6" fill="url(#r140)"/><rect x="1119.3" y="412.9" width="353.6" height="2.6" fill="url(#r141)"/><rect x="1120.6" y="414.9" width="350.4" height="2.6" fill="url(#r142)"/><rect x="1121.8" y="416.9" width="347.2" height="2.6" fill="url(#r143)"/><rect x="1123.1" y="418.9" width="344.0" height="2.6" fill="url(#r144)"/><rect x="1124.3" y="420.9" width="340.8" height="2.6" fill="url(#r145)"/><rect x="1125.6" y="422.9" width="337.6" height="2.6" fill="url(#r146)"/><rect x="1126.8" y="424.9" width="334.4" height="2.6" fill="url(#r147)"/><rect x="1128.1" y="426.9" width="331.1" height="2.6" fill="url(#r148)"/><rect x="1129.4" y="428.9" width="327.9" height="2.6" fill="url(#r149)"/><rect x="1130.6" y="430.9" width="324.7" height="2.6" fill="url(#r150)"/><rect x="1131.9" y="432.9" width="321.4" height="2.6" fill="url(#r151)"/><rect x="1133.2" y="434.9" width="318.2" height="2.6" fill="url(#r152)"/><rect x="1134.5" y="436.9" width="314.9" height="2.6" fill="url(#r153)"/><rect x="1135.8" y="438.9" width="311.7" height="2.6" fill="url(#r154)"/><rect x="1137.1" y="440.9" width="308.4" height="2.6" fill="url(#r155)"/><rect x="1138.4" y="442.9" width="305.1" height="2.6" fill="url(#r156)"/><rect x="1139.8" y="444.9" width="301.9" height="2.6" fill="url(#r157)"/><rect x="1141.1" y="446.9" width="298.6" height="2.6" fill="url(#r158)"/><rect x="1142.5" y="448.9" width="295.3" height="2.6" fill="url(#r159)"/><rect x="1143.8" y="450.9" width="291.9" height="2.6" fill="url(#r160)"/><rect x="1145.2" y="452.9" width="288.6" height="2.6" fill="url(#r161)"/><rect x="1146.5" y="454.9" width="285.3" height="2.6" fill="url(#r162)"/><rect x="1147.9" y="456.9" width="282.0" height="2.6" fill="url(#r163)"/><rect x="1149.3" y="458.9" width="278.6" height="2.6" fill="url(#r164)"/><rect x="1150.7" y="460.9" width="275.3" height="2.6" fill="url(#r165)"/><rect x="1152.1" y="462.9" width="271.9" height="2.6" fill="url(#r166)"/><rect x="1153.5" y="464.9" width="268.5" height="2.6" fill="url(#r167)"/><rect x="1155.0" y="466.9" width="265.1" height="2.6" fill="url(#r168)"/><rect x="1156.4" y="468.9" width="261.7" height="2.6" fill="url(#r169)"/><rect x="1157.8" y="470.9" width="258.4" height="2.6" fill="url(#r170)"/><rect x="1159.3" y="472.9" width="255.0" height="2.6" fill="url(#r171)"/><rect x="1160.8" y="474.9" width="251.5" height="2.6" fill="url(#r172)"/><rect x="1162.2" y="476.9" width="248.1" height="2.6" fill="url(#r173)"/><rect x="1163.7" y="478.9" width="244.7" height="2.6" fill="url(#r174)"/><rect x="1165.2" y="480.9" width="241.2" height="2.6" fill="url(#r175)"/><rect x="1166.7" y="482.9" width="237.8" height="2.6" fill="url(#r176)"/><rect x="1168.2" y="484.9" width="234.3" height="2.6" fill="url(#r177)"/><rect x="1169.7" y="486.9" width="230.8" height="2.6" fill="url(#r178)"/><rect x="1171.2" y="488.9" width="227.3" height="2.6" fill="url(#r179)"/><rect x="1172.8" y="490.9" width="223.8" height="2.6" fill="url(#r180)"/><rect x="1174.3" y="492.9" width="220.3" height="2.6" fill="url(#r181)"/><rect x="1175.9" y="494.9" width="216.8" height="2.6" fill="url(#r182)"/><rect x="1177.5" y="496.9" width="213.3" height="2.6" fill="url(#r183)"/><rect x="1179.1" y="498.9" width="209.7" height="2.6" fill="url(#r184)"/><rect x="1180.7" y="500.9" width="206.1" height="2.6" fill="url(#r185)"/><rect x="1182.3" y="502.9" width="202.5" height="2.6" fill="url(#r186)"/><rect x="1184.0" y="504.9" width="198.9" height="2.6" fill="url(#r187)"/><rect x="1185.7" y="506.9" width="195.3" height="2.6" fill="url(#r188)"/><rect x="1187.3" y="508.9" width="191.7" height="2.6" fill="url(#r189)"/><rect x="1189.1" y="510.9" width="188.0" height="2.6" fill="url(#r190)"/><rect x="1190.8" y="512.9" width="184.3" height="2.6" fill="url(#r191)"/><rect x="1192.5" y="514.9" width="180.6" height="2.6" fill="url(#r192)"/><rect x="1194.2" y="516.9" width="176.9" height="2.6" fill="url(#r193)"/><rect x="1196.0" y="518.9" width="173.2" height="2.6" fill="url(#r194)"/><rect x="1197.8" y="520.9" width="169.5" height="2.6" fill="url(#r195)"/><rect x="1199.6" y="522.9" width="165.7" height="2.6" fill="url(#r196)"/><rect x="1201.4" y="524.9" width="161.9" height="2.6" fill="url(#r197)"/><rect x="1203.3" y="526.9" width="158.1" height="2.6" fill="url(#r198)"/><rect x="1205.2" y="528.9" width="154.2" height="2.6" fill="url(#r199)"/><rect x="1207.2" y="530.9" width="150.3" height="2.6" fill="url(#r200)"/><rect x="1209.2" y="532.9" width="146.4" height="2.6" fill="url(#r201)"/><rect x="1211.2" y="534.9" width="142.4" height="2.6" fill="url(#r202)"/><rect x="1213.3" y="536.9" width="138.4" height="2.6" fill="url(#r203)"/><rect x="1215.3" y="538.9" width="134.3" height="2.6" fill="url(#r204)"/><rect x="1217.4" y="540.9" width="130.3" height="2.6" fill="url(#r205)"/><rect x="1219.5" y="542.9" width="126.2" height="2.6" fill="url(#r206)"/><rect x="1221.6" y="544.9" width="122.2" height="2.6" fill="url(#r207)"/><rect x="1223.8" y="546.9" width="118.0" height="2.6" fill="url(#r208)"/><rect x="1226.0" y="548.9" width="113.8" height="2.6" fill="url(#r209)"/><rect x="1228.3" y="550.9" width="109.6" height="2.6" fill="url(#r210)"/><rect x="1230.6" y="552.9" width="105.4" height="2.6" fill="url(#r211)"/><rect x="1232.9" y="554.9" width="101.2" height="2.6" fill="url(#r212)"/><rect x="1235.2" y="556.9" width="96.9" height="2.6" fill="url(#r213)"/><rect x="1237.5" y="558.9" width="92.6" height="2.6" fill="url(#r214)"/><rect x="1239.9" y="560.9" width="88.3" height="2.6" fill="url(#r215)"/><rect x="1242.3" y="562.9" width="83.9" height="2.6" fill="url(#r216)"/><rect x="1244.7" y="564.9" width="79.5" height="2.6" fill="url(#r217)"/><rect x="1247.1" y="566.9" width="75.1" height="2.6" fill="url(#r218)"/><rect x="1249.6" y="568.9" width="70.8" height="2.6" fill="url(#r219)"/><rect x="1252.0" y="570.9" width="66.4" height="2.6" fill="url(#r220)"/><rect x="1254.4" y="572.9" width="62.0" height="2.6" fill="url(#r221)"/><rect x="1256.9" y="574.9" width="57.5" height="2.6" fill="url(#r222)"/><rect x="1259.3" y="576.9" width="53.2" height="2.6" fill="url(#r223)"/><rect x="1261.8" y="578.9" width="48.8" height="2.6" fill="url(#r224)"/><rect x="1264.2" y="580.9" width="44.4" height="2.6" fill="url(#r225)"/><rect x="1266.6" y="582.9" width="40.0" height="2.6" fill="url(#r226)"/><rect x="1269.0" y="584.9" width="35.7" height="2.6" fill="url(#r227)"/><rect x="1271.3" y="586.9" width="31.4" height="2.6" fill="url(#r228)"/><rect x="1273.6" y="588.9" width="27.1" height="2.6" fill="url(#r229)"/><rect x="1276.0" y="590.9" width="22.8" height="2.6" fill="url(#r230)"/><rect x="1278.5" y="592.9" width="18.3" height="2.6" fill="url(#r231)"/><rect x="1281.3" y="594.9" width="13.6" height="2.6" fill="url(#r232)"/><rect x="1284.7" y="596.9" width="8.2" height="2.6" fill="url(#r233)"/><path d="M998.6,100.9 H1678.6 V632.3 H998.6 Z M1498.4,184.6 L1151.9,152.2 L1205.6,483.2 Z" fill="#000" fill-opacity="0.39" fill-rule="evenodd" filter="url(#fSoft)"/></g></g></g>
<rect x="1018.6" y="120.9" width="639.9999999999999" height="491.4" fill="none" stroke="#a4a4a4" stroke-width="1.3"/>
<line x1="1013.10" y1="612.40" x2="1018.60" y2="612.40" stroke="#d0d0d0" stroke-width="1.3"/>
<text x="1004.3" y="617.4" font-size="13.4" fill="#dcdcdc" textLength="7.9" lengthAdjust="spacingAndGlyphs">0</text>
<line x1="1018.90" y1="612.30" x2="1018.90" y2="618.80" stroke="#d0d0d0" stroke-width="2"/>
<text x="1015.0" y="633.6" font-size="13.4" fill="#dcdcdc" textLength="7.9" lengthAdjust="spacingAndGlyphs">0</text>
<line x1="1013.10" y1="571.49" x2="1018.60" y2="571.49" stroke="#d0d0d0" stroke-width="1.3"/>
<text x="984.6" y="576.5" font-size="13.4" fill="#dcdcdc" textLength="27.6" lengthAdjust="spacingAndGlyphs">0,05</text>
<line x1="1072.10" y1="612.30" x2="1072.10" y2="618.80" stroke="#d0d0d0" stroke-width="1.3"/>
<text x="1058.3" y="633.6" font-size="13.4" fill="#dcdcdc" textLength="27.6" lengthAdjust="spacingAndGlyphs">0,05</text>
<line x1="1013.10" y1="530.58" x2="1018.60" y2="530.58" stroke="#d0d0d0" stroke-width="1.3"/>
<text x="992.5" y="535.6" font-size="13.4" fill="#dcdcdc" textLength="19.7" lengthAdjust="spacingAndGlyphs">0,1</text>
<line x1="1125.30" y1="612.30" x2="1125.30" y2="618.80" stroke="#d0d0d0" stroke-width="1.3"/>
<text x="1115.4" y="633.6" font-size="13.4" fill="#dcdcdc" textLength="19.7" lengthAdjust="spacingAndGlyphs">0,1</text>
<line x1="1013.10" y1="489.67" x2="1018.60" y2="489.67" stroke="#d0d0d0" stroke-width="1.3"/>
<text x="984.6" y="494.7" font-size="13.4" fill="#dcdcdc" textLength="27.6" lengthAdjust="spacingAndGlyphs">0,15</text>
<line x1="1178.50" y1="612.30" x2="1178.50" y2="618.80" stroke="#d0d0d0" stroke-width="1.3"/>
<text x="1164.7" y="633.6" font-size="13.4" fill="#dcdcdc" textLength="27.6" lengthAdjust="spacingAndGlyphs">0,15</text>
<line x1="1013.10" y1="448.76" x2="1018.60" y2="448.76" stroke="#d0d0d0" stroke-width="1.3"/>
<text x="992.5" y="453.8" font-size="13.4" fill="#dcdcdc" textLength="19.7" lengthAdjust="spacingAndGlyphs">0,2</text>
<line x1="1231.70" y1="612.30" x2="1231.70" y2="618.80" stroke="#d0d0d0" stroke-width="1.3"/>
<text x="1221.8" y="633.6" font-size="13.4" fill="#dcdcdc" textLength="19.7" lengthAdjust="spacingAndGlyphs">0,2</text>
<line x1="1013.10" y1="407.85" x2="1018.60" y2="407.85" stroke="#d0d0d0" stroke-width="1.3"/>
<text x="984.6" y="412.8" font-size="13.4" fill="#dcdcdc" textLength="27.6" lengthAdjust="spacingAndGlyphs">0,25</text>
<line x1="1284.90" y1="612.30" x2="1284.90" y2="618.80" stroke="#d0d0d0" stroke-width="1.3"/>
<text x="1271.1" y="633.6" font-size="13.4" fill="#dcdcdc" textLength="27.6" lengthAdjust="spacingAndGlyphs">0,25</text>
<line x1="1013.10" y1="366.94" x2="1018.60" y2="366.94" stroke="#d0d0d0" stroke-width="1.3"/>
<text x="992.5" y="371.9" font-size="13.4" fill="#dcdcdc" textLength="19.7" lengthAdjust="spacingAndGlyphs">0,3</text>
<line x1="1338.10" y1="612.30" x2="1338.10" y2="618.80" stroke="#d0d0d0" stroke-width="1.3"/>
<text x="1328.2" y="633.6" font-size="13.4" fill="#dcdcdc" textLength="19.7" lengthAdjust="spacingAndGlyphs">0,3</text>
<line x1="1013.10" y1="326.03" x2="1018.60" y2="326.03" stroke="#d0d0d0" stroke-width="1.3"/>
<text x="984.6" y="331.0" font-size="13.4" fill="#dcdcdc" textLength="27.6" lengthAdjust="spacingAndGlyphs">0,35</text>
<line x1="1391.30" y1="612.30" x2="1391.30" y2="618.80" stroke="#d0d0d0" stroke-width="1.3"/>
<text x="1377.5" y="633.6" font-size="13.4" fill="#dcdcdc" textLength="27.6" lengthAdjust="spacingAndGlyphs">0,35</text>
<line x1="1013.10" y1="285.12" x2="1018.60" y2="285.12" stroke="#d0d0d0" stroke-width="1.3"/>
<text x="992.5" y="290.1" font-size="13.4" fill="#dcdcdc" textLength="19.7" lengthAdjust="spacingAndGlyphs">0,4</text>
<line x1="1444.50" y1="612.30" x2="1444.50" y2="618.80" stroke="#d0d0d0" stroke-width="1.3"/>
<text x="1434.6" y="633.6" font-size="13.4" fill="#dcdcdc" textLength="19.7" lengthAdjust="spacingAndGlyphs">0,4</text>
<line x1="1013.10" y1="244.21" x2="1018.60" y2="244.21" stroke="#d0d0d0" stroke-width="1.3"/>
<text x="984.6" y="249.2" font-size="13.4" fill="#dcdcdc" textLength="27.6" lengthAdjust="spacingAndGlyphs">0,45</text>
<line x1="1497.70" y1="612.30" x2="1497.70" y2="618.80" stroke="#d0d0d0" stroke-width="1.3"/>
<text x="1483.9" y="633.6" font-size="13.4" fill="#dcdcdc" textLength="27.6" lengthAdjust="spacingAndGlyphs">0,45</text>
<line x1="1013.10" y1="203.30" x2="1018.60" y2="203.30" stroke="#d0d0d0" stroke-width="1.3"/>
<text x="992.5" y="208.3" font-size="13.4" fill="#dcdcdc" textLength="19.7" lengthAdjust="spacingAndGlyphs">0,5</text>
<line x1="1550.90" y1="612.30" x2="1550.90" y2="618.80" stroke="#d0d0d0" stroke-width="1.3"/>
<text x="1541.0" y="633.6" font-size="13.4" fill="#dcdcdc" textLength="19.7" lengthAdjust="spacingAndGlyphs">0,5</text>
<line x1="1013.10" y1="162.39" x2="1018.60" y2="162.39" stroke="#d0d0d0" stroke-width="1.3"/>
<text x="984.6" y="167.4" font-size="13.4" fill="#dcdcdc" textLength="27.6" lengthAdjust="spacingAndGlyphs">0,55</text>
<line x1="1604.10" y1="612.30" x2="1604.10" y2="618.80" stroke="#d0d0d0" stroke-width="1.3"/>
<text x="1590.3" y="633.6" font-size="13.4" fill="#dcdcdc" textLength="27.6" lengthAdjust="spacingAndGlyphs">0,55</text>
<text x="1279.6" y="114.4" font-size="13.4" fill="#dcdcdc" textLength="83.8" lengthAdjust="spacingAndGlyphs">CIE 1976 u'v'</text>
<g clip-path="url(#cPlot)"><rect x="1201.8" y="199.8" width="13.4" height="13.4" fill="#a3c0a3" fill-opacity="0.33" stroke="#ffffff" stroke-width="1.4"/><rect x="1183.7" y="182.8" width="13.4" height="13.4" fill="#88c088" fill-opacity="0.33" stroke="#ffffff" stroke-width="1.4"/><rect x="1168.8" y="167.9" width="13.4" height="13.4" fill="#6bc06b" fill-opacity="0.33" stroke="#ffffff" stroke-width="1.4"/><rect x="1156.8" y="155.7" width="13.4" height="13.4" fill="#4cc04c" fill-opacity="0.33" stroke="#ffffff" stroke-width="1.4"/><rect x="1144.6" y="143.6" width="13.4" height="13.4" fill="#08c008" fill-opacity="0.33" stroke="#ffffff" stroke-width="1.4"/><rect x="1224.8" y="203.6" width="13.4" height="13.4" fill="#c0c0a3" fill-opacity="0.33" stroke="#ffffff" stroke-width="1.4"/><rect x="1225.6" y="188.5" width="13.4" height="13.4" fill="#c0c088" fill-opacity="0.33" stroke="#ffffff" stroke-width="1.4"/><rect x="1227.4" y="174.8" width="13.4" height="13.4" fill="#c0c06b" fill-opacity="0.33" stroke="#ffffff" stroke-width="1.4"/><rect x="1228.0" y="162.9" width="13.4" height="13.4" fill="#c0c04c" fill-opacity="0.33" stroke="#ffffff" stroke-width="1.4"/><rect x="1228.9" y="151.5" width="13.4" height="13.4" fill="#c0c008" fill-opacity="0.33" stroke="#ffffff" stroke-width="1.4"/><rect x="1209.9" y="224.2" width="13.4" height="13.4" fill="#a3c0c0" fill-opacity="0.33" stroke="#ffffff" stroke-width="1.4"/><rect x="1197.6" y="225.4" width="13.4" height="13.4" fill="#88c0c0" fill-opacity="0.33" stroke="#ffffff" stroke-width="1.4"/><rect x="1183.7" y="228.2" width="13.4" height="13.4" fill="#6bc0c0" fill-opacity="0.33" stroke="#ffffff" stroke-width="1.4"/><rect x="1171.7" y="229.6" width="13.4" height="13.4" fill="#4cc0c0" fill-opacity="0.33" stroke="#ffffff" stroke-width="1.4"/><rect x="1158.3" y="232.0" width="13.4" height="13.4" fill="#08c0c0" fill-opacity="0.33" stroke="#ffffff" stroke-width="1.4"/><rect x="1239.8" y="237.7" width="13.4" height="13.4" fill="#c0a3c0" fill-opacity="0.33" stroke="#ffffff" stroke-width="1.4"/><rect x="1258.7" y="256.7" width="13.4" height="13.4" fill="#c088c0" fill-opacity="0.33" stroke="#ffffff" stroke-width="1.4"/><rect x="1277.8" y="276.7" width="13.4" height="13.4" fill="#c06bc0" fill-opacity="0.33" stroke="#ffffff" stroke-width="1.4"/><rect x="1303.7" y="302.8" width="13.4" height="13.4" fill="#c04cc0" fill-opacity="0.33" stroke="#ffffff" stroke-width="1.4"/><rect x="1336.8" y="333.8" width="13.4" height="13.4" fill="#c008c0" fill-opacity="0.33" stroke="#ffffff" stroke-width="1.4"/><rect x="1219.4" y="250.9" width="13.4" height="13.4" fill="#a3a3c0" fill-opacity="0.33" stroke="#ffffff" stroke-width="1.4"/><rect x="1216.7" y="287.7" width="13.4" height="13.4" fill="#8888c0" fill-opacity="0.33" stroke="#ffffff" stroke-width="1.4"/><rect x="1212.8" y="332.9" width="13.4" height="13.4" fill="#6b6bc0" fill-opacity="0.33" stroke="#ffffff" stroke-width="1.4"/><rect x="1206.8" y="389.8" width="13.4" height="13.4" fill="#4c4cc0" fill-opacity="0.33" stroke="#ffffff" stroke-width="1.4"/><rect x="1198.8" y="475.7" width="13.4" height="13.4" fill="#0808c0" fill-opacity="0.33" stroke="#ffffff" stroke-width="1.4"/><rect x="1270.7" y="212.9" width="13.4" height="13.4" fill="#c0a3a3" fill-opacity="0.33" stroke="#ffffff" stroke-width="1.4"/><rect x="1323.7" y="203.6" width="13.4" height="13.4" fill="#c08888" fill-opacity="0.33" stroke="#ffffff" stroke-width="1.4"/><rect x="1372.8" y="196.7" width="13.4" height="13.4" fill="#c06b6b" fill-opacity="0.33" stroke="#ffffff" stroke-width="1.4"/><rect x="1427.8" y="186.8" width="13.4" height="13.4" fill="#c04c4c" fill-opacity="0.33" stroke="#ffffff" stroke-width="1.4"/><rect x="1491.8" y="176.2" width="13.4" height="13.4" fill="#c00808" fill-opacity="0.33" stroke="#ffffff" stroke-width="1.4"/><circle cx="1207.1" cy="205.9" r="4.2" fill="#a3c0a3" fill-opacity="0.88" stroke="#101010" stroke-width="1.1"/><circle cx="1190.4" cy="188.6" r="4.2" fill="#88c088" fill-opacity="0.88" stroke="#101010" stroke-width="1.1"/><circle cx="1175.5" cy="174.9" r="4.2" fill="#6bc06b" fill-opacity="0.88" stroke="#101010" stroke-width="1.1"/><circle cx="1163.5" cy="162.4" r="4.2" fill="#4cc04c" fill-opacity="0.88" stroke="#101010" stroke-width="1.1"/><circle cx="1151.1" cy="149.3" r="4.2" fill="#08c008" fill-opacity="0.88" stroke="#101010" stroke-width="1.1"/><circle cx="1230.2" cy="210.1" r="4.2" fill="#c0c0a3" fill-opacity="0.88" stroke="#101010" stroke-width="1.1"/><circle cx="1231.5" cy="194.9" r="4.2" fill="#c0c088" fill-opacity="0.88" stroke="#101010" stroke-width="1.1"/><circle cx="1233.2" cy="181.5" r="4.2" fill="#c0c06b" fill-opacity="0.88" stroke="#101010" stroke-width="1.1"/><circle cx="1234.1" cy="169.6" r="4.2" fill="#c0c04c" fill-opacity="0.88" stroke="#101010" stroke-width="1.1"/><circle cx="1235.3" cy="156.8" r="4.2" fill="#c0c008" fill-opacity="0.88" stroke="#101010" stroke-width="1.1"/><circle cx="1215.1" cy="229.4" r="4.2" fill="#a3c0c0" fill-opacity="0.88" stroke="#101010" stroke-width="1.1"/><circle cx="1203.2" cy="231.9" r="4.2" fill="#88c0c0" fill-opacity="0.88" stroke="#101010" stroke-width="1.1"/><circle cx="1189.1" cy="234.9" r="4.2" fill="#6bc0c0" fill-opacity="0.88" stroke="#101010" stroke-width="1.1"/><circle cx="1176.9" cy="236.0" r="4.2" fill="#4cc0c0" fill-opacity="0.88" stroke="#101010" stroke-width="1.1"/><circle cx="1165.0" cy="239.0" r="4.2" fill="#08c0c0" fill-opacity="0.88" stroke="#101010" stroke-width="1.1"/><circle cx="1245.1" cy="244.4" r="4.2" fill="#c0a3c0" fill-opacity="0.88" stroke="#101010" stroke-width="1.1"/><circle cx="1264.1" cy="263.4" r="4.2" fill="#c088c0" fill-opacity="0.88" stroke="#101010" stroke-width="1.1"/><circle cx="1284.5" cy="283.8" r="4.2" fill="#c06bc0" fill-opacity="0.88" stroke="#101010" stroke-width="1.1"/><circle cx="1310.4" cy="309.5" r="4.2" fill="#c04cc0" fill-opacity="0.88" stroke="#101010" stroke-width="1.1"/><circle cx="1344.4" cy="342.4" r="4.2" fill="#c008c0" fill-opacity="0.88" stroke="#101010" stroke-width="1.1"/><circle cx="1226.1" cy="257.9" r="4.2" fill="#a3a3c0" fill-opacity="0.88" stroke="#101010" stroke-width="1.1"/><circle cx="1222.2" cy="295.9" r="4.2" fill="#8888c0" fill-opacity="0.88" stroke="#101010" stroke-width="1.1"/><circle cx="1216.5" cy="342.4" r="4.2" fill="#6b6bc0" fill-opacity="0.88" stroke="#101010" stroke-width="1.1"/><circle cx="1209.3" cy="401.0" r="4.2" fill="#4c4cc0" fill-opacity="0.88" stroke="#101010" stroke-width="1.1"/><circle cx="1199.8" cy="483.9" r="4.2" fill="#0808c0" fill-opacity="0.88" stroke="#101010" stroke-width="1.1"/><circle cx="1277.4" cy="220.1" r="4.2" fill="#c0a3a3" fill-opacity="0.88" stroke="#101010" stroke-width="1.1"/><circle cx="1332.0" cy="210.0" r="4.2" fill="#c08888" fill-opacity="0.88" stroke="#101010" stroke-width="1.1"/><circle cx="1380.7" cy="202.2" r="4.2" fill="#c06b6b" fill-opacity="0.88" stroke="#101010" stroke-width="1.1"/><circle cx="1439.5" cy="192.5" r="4.2" fill="#c04c4c" fill-opacity="0.88" stroke="#101010" stroke-width="1.1"/><circle cx="1506.6" cy="181.6" r="4.2" fill="#c00808" fill-opacity="0.88" stroke="#101010" stroke-width="1.1"/><rect x="1221.8" y="221.0" width="13.2" height="13.2" fill="#fff" fill-opacity="0.2" stroke="#101010" stroke-width="1.5"/><circle cx="1228.4" cy="227.8" r="4.3" fill="#ffffff" stroke="#101010" stroke-width="1.1"/></g>
<rect x="1440.50" y="460.40" width="211.30" height="144.00" fill="url(#gInset)"/>
<path d="M1440.5,460.4 H1651.8 V588.0 L1440.5,475.4 Z" fill="#000" fill-opacity="0.40"/>
<rect x="1440.5" y="460.4" width="211.3" height="144.0" fill="none" stroke="#a8a890" stroke-width="1.2"/>
<rect x="1538.8" y="524.8" width="13.4" height="13.4" fill="none" stroke="#fff" stroke-width="1.4"/>
<circle cx="1548.4" cy="524.9" r="4.1" fill="#b0a800" stroke="#101010" stroke-width="1.1"/>
<text x="51.4" y="679.5" font-size="26.8" fill="#f2f2f2" textLength="232.0" lengthAdjust="spacingAndGlyphs">Avg dE2000: 2,82</text>
<text x="47.5" y="720.2" font-size="26.8" fill="#f2f2f2" textLength="240.5" lengthAdjust="spacingAndGlyphs">Max dE2000: 3,72</text>
<text x="16.3" y="767.7" font-size="26.8" fill="#f2f2f2" textLength="218.0" lengthAdjust="spacingAndGlyphs">Current Reading</text>
<text x="15.3" y="803.6" font-size="23.3" fill="#f2f2f2" textLength="73.9" lengthAdjust="spacingAndGlyphs">x: 0,42</text>
<text x="172.2" y="803.6" font-size="23.3" fill="#f2f2f2" textLength="102.4" lengthAdjust="spacingAndGlyphs">y: 0,5075</text>
<text x="15.3" y="844.4" font-size="23.3" fill="#f2f2f2" textLength="95.9" lengthAdjust="spacingAndGlyphs">fL: 34,01</text>
<text x="15.3" y="878.7" font-size="23.3" fill="#f2f2f2" textLength="159.2" lengthAdjust="spacingAndGlyphs">cd/m²: 116,54</text>
<rect x="357.70" y="686.70" width="249.70" height="180.10" fill="#252525"/>
<line x1="357.70" y1="705.30" x2="607.40" y2="705.30" stroke="#8c8c8c" stroke-width="1.2"/>
<line x1="352.70" y1="705.30" x2="357.70" y2="705.30" stroke="#d0d0d0" stroke-width="1.4"/>
<text x="327.1" y="710.2" font-size="13.4" fill="#dcdcdc" textLength="23.7" lengthAdjust="spacingAndGlyphs">104</text>
<line x1="357.70" y1="742.40" x2="607.40" y2="742.40" stroke="#8c8c8c" stroke-width="1.2"/>
<line x1="352.70" y1="742.40" x2="357.70" y2="742.40" stroke="#d0d0d0" stroke-width="1.4"/>
<text x="327.1" y="747.3" font-size="13.4" fill="#dcdcdc" textLength="23.7" lengthAdjust="spacingAndGlyphs">102</text>
<line x1="357.70" y1="777.90" x2="607.40" y2="777.90" stroke="#8c8c8c" stroke-width="1.2"/>
<line x1="352.70" y1="777.90" x2="357.70" y2="777.90" stroke="#d0d0d0" stroke-width="1.4"/>
<text x="327.1" y="782.8" font-size="13.4" fill="#dcdcdc" textLength="23.7" lengthAdjust="spacingAndGlyphs">100</text>
<line x1="357.70" y1="814.40" x2="607.40" y2="814.40" stroke="#8c8c8c" stroke-width="1.2"/>
<line x1="352.70" y1="814.40" x2="357.70" y2="814.40" stroke="#d0d0d0" stroke-width="1.4"/>
<text x="335.0" y="819.3" font-size="13.4" fill="#dcdcdc" textLength="15.8" lengthAdjust="spacingAndGlyphs">98</text>
<line x1="357.70" y1="850.10" x2="607.40" y2="850.10" stroke="#8c8c8c" stroke-width="1.2"/>
<line x1="352.70" y1="850.10" x2="357.70" y2="850.10" stroke="#d0d0d0" stroke-width="1.4"/>
<text x="335.0" y="855.0" font-size="13.4" fill="#dcdcdc" textLength="15.8" lengthAdjust="spacingAndGlyphs">96</text>
<rect x="357.7" y="686.7" width="249.7" height="180.1" fill="none" stroke="#9c9c9c" stroke-width="1.3"/>
<line x1="357.70" y1="866.80" x2="357.70" y2="872.80" stroke="#d0d0d0" stroke-width="1.4"/>
<line x1="607.40" y1="866.80" x2="607.40" y2="872.80" stroke="#d0d0d0" stroke-width="1.4"/>
<rect x="382.70" y="862.30" width="65.20" height="4.50" fill="#000"/>
<rect x="383.70" y="863.40" width="63.20" height="2.90" fill="url(#gRb)"/>
<rect x="447.50" y="857.90" width="67.10" height="8.90" fill="#000"/>
<rect x="448.50" y="859.00" width="65.10" height="7.30" fill="url(#gGb)"/>
<rect x="514.20" y="824.90" width="66.70" height="41.90" fill="#000"/>
<rect x="515.20" y="826.00" width="64.70" height="40.30" fill="url(#gBb)"/>
<text x="426.3" y="682.0" font-size="13.4" fill="#dcdcdc" textLength="82.2" lengthAdjust="spacingAndGlyphs">RGB Balance</text>
<text x="464.5" y="883.7" font-size="13.4" fill="#dcdcdc" textLength="36.3" lengthAdjust="spacingAndGlyphs">100%</text>
<rect x="627.20" y="654.60" width="731.20" height="237.40" fill="#161616"/>
<rect x="629.00" y="656.00" width="727.00" height="28.70" fill="url(#gTh)"/>
<rect x="629.00" y="684.70" width="727.00" height="26.04" fill="#404040"/>
<text x="647.5" y="703.6" font-size="15.4" fill="#f4f4f4" textLength="85.5" lengthAdjust="spacingAndGlyphs" font-weight="bold" stroke="#f4f4f4" stroke-width="0.45">x: CIE31</text>
<text x="830.6" y="703.6" font-size="14.2" fill="#f2f2f2" textLength="68.2" lengthAdjust="spacingAndGlyphs">0,3340</text>
<text x="937.1" y="703.6" font-size="14.2" fill="#f2f2f2" textLength="68.2" lengthAdjust="spacingAndGlyphs">0,3560</text>
<text x="1043.6" y="703.6" font-size="14.2" fill="#f2f2f2" textLength="68.2" lengthAdjust="spacingAndGlyphs">0,3774</text>
<text x="1150.1" y="703.6" font-size="14.2" fill="#f2f2f2" textLength="68.2" lengthAdjust="spacingAndGlyphs">0,3969</text>
<text x="1256.6" y="703.6" font-size="14.2" fill="#f2f2f2" textLength="68.2" lengthAdjust="spacingAndGlyphs">0,4200</text>
<rect x="629.00" y="710.44" width="727.00" height="26.04" fill="#808080"/>
<text x="647.5" y="729.3" font-size="15.4" fill="#f4f4f4" textLength="85.5" lengthAdjust="spacingAndGlyphs" font-weight="bold" stroke="#f4f4f4" stroke-width="0.45">y: CIE31</text>
<text x="830.6" y="729.3" font-size="14.2" fill="#f2f2f2" textLength="68.2" lengthAdjust="spacingAndGlyphs">0,3655</text>
<text x="937.1" y="729.3" font-size="14.2" fill="#f2f2f2" textLength="68.2" lengthAdjust="spacingAndGlyphs">0,4014</text>
<text x="1043.6" y="729.3" font-size="14.2" fill="#f2f2f2" textLength="68.2" lengthAdjust="spacingAndGlyphs">0,4364</text>
<text x="1150.1" y="729.3" font-size="14.2" fill="#f2f2f2" textLength="68.2" lengthAdjust="spacingAndGlyphs">0,4689</text>
<text x="1256.6" y="729.3" font-size="14.2" fill="#f2f2f2" textLength="68.2" lengthAdjust="spacingAndGlyphs">0,5075</text>
<rect x="629.00" y="736.18" width="727.00" height="26.04" fill="#404040"/>
<text x="647.5" y="755.1" font-size="15.4" fill="#f4f4f4" textLength="11.5" lengthAdjust="spacingAndGlyphs" font-weight="bold" stroke="#f4f4f4" stroke-width="0.45">Y</text>
<text x="830.6" y="755.1" font-size="14.2" fill="#f2f2f2" textLength="92.6" lengthAdjust="spacingAndGlyphs">123,1015</text>
<text x="937.1" y="755.1" font-size="14.2" fill="#f2f2f2" textLength="92.6" lengthAdjust="spacingAndGlyphs">120,9891</text>
<text x="1043.6" y="755.1" font-size="14.2" fill="#f2f2f2" textLength="92.6" lengthAdjust="spacingAndGlyphs">119,1036</text>
<text x="1150.1" y="755.1" font-size="14.2" fill="#f2f2f2" textLength="92.6" lengthAdjust="spacingAndGlyphs">117,7915</text>
<text x="1256.6" y="755.1" font-size="14.2" fill="#f2f2f2" textLength="92.6" lengthAdjust="spacingAndGlyphs">116,5401</text>
<rect x="629.00" y="761.92" width="727.00" height="26.04" fill="#808080"/>
<text x="647.5" y="780.8" font-size="15.4" fill="#f4f4f4" textLength="156.5" lengthAdjust="spacingAndGlyphs" font-weight="bold" stroke="#f4f4f4" stroke-width="0.45">Target x:CIE31</text>
<text x="830.6" y="780.8" font-size="14.2" fill="#f2f2f2" textLength="68.2" lengthAdjust="spacingAndGlyphs">0,3344</text>
<text x="937.1" y="780.8" font-size="14.2" fill="#f2f2f2" textLength="68.2" lengthAdjust="spacingAndGlyphs">0,3564</text>
<text x="1043.6" y="780.8" font-size="14.2" fill="#f2f2f2" textLength="68.2" lengthAdjust="spacingAndGlyphs">0,3773</text>
<text x="1150.1" y="780.8" font-size="14.2" fill="#f2f2f2" textLength="68.2" lengthAdjust="spacingAndGlyphs">0,3969</text>
<text x="1256.6" y="780.8" font-size="14.2" fill="#f2f2f2" textLength="68.2" lengthAdjust="spacingAndGlyphs">0,4193</text>
<rect x="629.00" y="787.66" width="727.00" height="26.04" fill="#404040"/>
<text x="647.5" y="806.6" font-size="15.4" fill="#f4f4f4" textLength="156.5" lengthAdjust="spacingAndGlyphs" font-weight="bold" stroke="#f4f4f4" stroke-width="0.45">Target y:CIE31</text>
<text x="830.6" y="806.6" font-size="14.2" fill="#f2f2f2" textLength="68.2" lengthAdjust="spacingAndGlyphs">0,3648</text>
<text x="937.1" y="806.6" font-size="14.2" fill="#f2f2f2" textLength="68.2" lengthAdjust="spacingAndGlyphs">0,4013</text>
<text x="1043.6" y="806.6" font-size="14.2" fill="#f2f2f2" textLength="68.2" lengthAdjust="spacingAndGlyphs">0,4358</text>
<text x="1150.1" y="806.6" font-size="14.2" fill="#f2f2f2" textLength="68.2" lengthAdjust="spacingAndGlyphs">0,4682</text>
<text x="1256.6" y="806.6" font-size="14.2" fill="#f2f2f2" textLength="68.2" lengthAdjust="spacingAndGlyphs">0,5053</text>
<rect x="629.00" y="813.40" width="727.00" height="26.04" fill="#808080"/>
<text x="647.5" y="832.3" font-size="15.4" fill="#f4f4f4" textLength="90.2" lengthAdjust="spacingAndGlyphs" font-weight="bold" stroke="#f4f4f4" stroke-width="0.45">Target Y</text>
<text x="830.6" y="832.3" font-size="14.2" fill="#f2f2f2" textLength="92.6" lengthAdjust="spacingAndGlyphs">142,7623</text>
<text x="937.1" y="832.3" font-size="14.2" fill="#f2f2f2" textLength="92.6" lengthAdjust="spacingAndGlyphs">140,2564</text>
<text x="1043.6" y="832.3" font-size="14.2" fill="#f2f2f2" textLength="92.6" lengthAdjust="spacingAndGlyphs">138,3310</text>
<text x="1150.1" y="832.3" font-size="14.2" fill="#f2f2f2" textLength="92.6" lengthAdjust="spacingAndGlyphs">136,8199</text>
<text x="1256.6" y="832.3" font-size="14.2" fill="#f2f2f2" textLength="92.6" lengthAdjust="spacingAndGlyphs">135,3591</text>
<rect x="629.00" y="839.14" width="727.00" height="26.04" fill="#404040"/>
<text x="647.5" y="858.0" font-size="15.4" fill="#f4f4f4" textLength="89.6" lengthAdjust="spacingAndGlyphs" font-weight="bold" stroke="#f4f4f4" stroke-width="0.45">ΔE 2000</text>
<text x="830.6" y="858.0" font-size="14.2" fill="#f2f2f2" textLength="68.2" lengthAdjust="spacingAndGlyphs">3,3098</text>
<text x="937.1" y="858.0" font-size="14.2" fill="#f2f2f2" textLength="68.2" lengthAdjust="spacingAndGlyphs">3,3338</text>
<text x="1043.6" y="858.0" font-size="14.2" fill="#f2f2f2" textLength="68.2" lengthAdjust="spacingAndGlyphs">3,3797</text>
<text x="1150.1" y="858.0" font-size="14.2" fill="#f2f2f2" textLength="68.2" lengthAdjust="spacingAndGlyphs">3,3954</text>
<text x="1256.6" y="858.0" font-size="14.2" fill="#f2f2f2" textLength="68.2" lengthAdjust="spacingAndGlyphs">3,3684</text>
<rect x="629.00" y="864.88" width="727.00" height="26.04" fill="#808080"/>
<text x="647.5" y="883.8" font-size="15.4" fill="#f4f4f4" textLength="71.3" lengthAdjust="spacingAndGlyphs" font-weight="bold" stroke="#f4f4f4" stroke-width="0.45">ΔE ITP</text>
<text x="830.6" y="883.8" font-size="14.2" fill="#f2f2f2" textLength="78.4" lengthAdjust="spacingAndGlyphs">10,9227</text>
<text x="937.1" y="883.8" font-size="14.2" fill="#f2f2f2" textLength="78.4" lengthAdjust="spacingAndGlyphs">10,8658</text>
<text x="1043.6" y="883.8" font-size="14.2" fill="#f2f2f2" textLength="78.4" lengthAdjust="spacingAndGlyphs">10,9875</text>
<text x="1150.1" y="883.8" font-size="14.2" fill="#f2f2f2" textLength="78.4" lengthAdjust="spacingAndGlyphs">10,9940</text>
<text x="1256.6" y="883.8" font-size="14.2" fill="#f2f2f2" textLength="78.4" lengthAdjust="spacingAndGlyphs">10,9892</text>
<text x="857.4" y="676.0" font-size="13.4" fill="#ffffff" textLength="39.7" lengthAdjust="spacingAndGlyphs">20%</text>
<text x="963.9" y="676.0" font-size="13.4" fill="#ffffff" textLength="39.7" lengthAdjust="spacingAndGlyphs">40%</text>
<text x="1070.0" y="676.0" font-size="13.4" fill="#ffffff" textLength="40.3" lengthAdjust="spacingAndGlyphs">60%</text>
<text x="1176.5" y="676.0" font-size="13.4" fill="#ffffff" textLength="40.5" lengthAdjust="spacingAndGlyphs">80%</text>
<text x="1277.6" y="676.0" font-size="13.4" fill="#ffffff" textLength="51.2" lengthAdjust="spacingAndGlyphs">100%</text>
<rect x="0.00" y="930.00" width="1669.00" height="77.00" fill="url(#gBar)"/>
<path d="M1.0,1009 V935.1 Q1.0,930.6 5.5,930.6 H53.2 Q57.7,930.6 57.7,935.1 V1009 Z" fill="url(#gSw)" stroke="#2a2a2a" stroke-width="1"/>
<circle cx="29.7" cy="942.5" r="9.5" fill="url(#gUp)"/>
<path d="M24.2,945 h11 l-5.5,-5.6 z" fill="#111"/>
<rect x="7.6" y="963.2" width="44.2" height="37" rx="4.5" fill="#ffff00" stroke="#c0c020" stroke-width="1"/>
<path d="M64.8,1009 V935.1 Q64.8,930.6 69.3,930.6 H247.7 Q252.2,930.6 252.2,935.1 V1009 Z" fill="url(#gSw)" stroke="#2a2a2a" stroke-width="1"/>
<rect x="71.6" y="937.0" width="173.8" height="45" rx="4.5" fill="#bfbfa3" stroke="#9d9d86" stroke-width="1"/>
<text x="146.3" y="1000.5" font-size="12.0" fill="#242424" textLength="24.5" lengthAdjust="spacingAndGlyphs" font-weight="bold">20%</text>
<path d="M255.3,1009 V935.1 Q255.3,930.6 259.8,930.6 H438.2 Q442.7,930.6 442.7,935.1 V1009 Z" fill="url(#gSw)" stroke="#2a2a2a" stroke-width="1"/>
<rect x="262.1" y="937.0" width="173.8" height="45" rx="4.5" fill="#bfbf89" stroke="#9d9d70" stroke-width="1"/>
<text x="336.8" y="1000.5" font-size="12.0" fill="#242424" textLength="24.5" lengthAdjust="spacingAndGlyphs" font-weight="bold">40%</text>
<path d="M445.6,1009 V935.1 Q445.6,930.6 450.1,930.6 H628.5 Q633.0,930.6 633.0,935.1 V1009 Z" fill="url(#gSw)" stroke="#2a2a2a" stroke-width="1"/>
<rect x="452.4" y="937.0" width="173.8" height="45" rx="4.5" fill="#bebe6c" stroke="#9c9c59" stroke-width="1"/>
<text x="527.1" y="1000.5" font-size="12.0" fill="#242424" textLength="24.5" lengthAdjust="spacingAndGlyphs" font-weight="bold">60%</text>
<path d="M635.0,1009 V935.1 Q635.0,930.6 639.5,930.6 H817.8 Q822.3,930.6 822.3,935.1 V1009 Z" fill="url(#gSw)" stroke="#2a2a2a" stroke-width="1"/>
<rect x="641.8" y="937.0" width="173.7" height="45" rx="4.5" fill="#bfc04e" stroke="#9d9d40" stroke-width="1"/>
<text x="716.4" y="1000.5" font-size="12.0" fill="#242424" textLength="24.5" lengthAdjust="spacingAndGlyphs" font-weight="bold">80%</text>
<path d="M825.0,1009 V935.1 Q825.0,930.6 829.5,930.6 H1008.3 Q1012.8,930.6 1012.8,935.1 V1009 Z" fill="url(#gSwSel)" stroke="#2a2a2a" stroke-width="1"/>
<rect x="831.8" y="937.0" width="174.2" height="45" rx="4.5" fill="#c4c000" stroke="#a19d00" stroke-width="1"/>
<text x="903.2" y="1000.5" font-size="12.0" fill="#ffffff" textLength="31.3" lengthAdjust="spacingAndGlyphs" font-weight="bold">100%</text>
<path d="M1266.0,1009 V935.6 Q1266.0,930.6 1271.0,930.6 H1320.7 Q1325.7,930.6 1325.7,935.6 V1009 Z" fill="url(#gCt)"/>
<line x1="1266.00" y1="953.20" x2="1325.70" y2="953.20" stroke="#4a4a4a" stroke-width="1.2"/>
<line x1="1266.00" y1="954.30" x2="1325.70" y2="954.30" stroke="#9a9a9a" stroke-width="0.8"/>
<circle cx="1296" cy="942" r="9.3" fill="url(#gUp)"/>
<path d="M1290.5,944.5 h11 l-5.5,-5.6 z" fill="#111"/>
<rect x="1277.5" y="962.3" width="36.5" height="36" rx="4.5" fill="url(#gStopBox)" stroke="#262626" stroke-width="2.6"/>
<rect x="1287.60" y="971.50" width="17.00" height="17.50" fill="url(#gStopSq)"/>
<path d="M1327.5,967.8 V935.6 Q1327.5,930.6 1332.5,930.6 H1385.6 V967.8 Z" fill="url(#gCt)"/>
<circle cx="1356.7" cy="949" r="12.8" fill="url(#gCirc)"/>
<rect x="1385.60" y="930.60" width="55.90" height="37.20" fill="url(#gCt)"/>
<line x1="1385.60" y1="930.60" x2="1385.60" y2="967.80" stroke="#505050" stroke-width="1.2"/>
<circle cx="1413.8" cy="949" r="12.8" fill="url(#gCirc)"/>
<rect x="1441.50" y="930.60" width="56.10" height="37.20" fill="url(#gCtD)"/>
<line x1="1441.50" y1="930.60" x2="1441.50" y2="967.80" stroke="#505050" stroke-width="1.2"/>
<circle cx="1470.0" cy="949" r="12.8" fill="url(#gCircD)"/>
<rect x="1497.60" y="930.60" width="56.60" height="37.20" fill="url(#gCt)"/>
<line x1="1497.60" y1="930.60" x2="1497.60" y2="967.80" stroke="#505050" stroke-width="1.2"/>
<circle cx="1526.3" cy="949" r="12.8" fill="url(#gCirc)"/>
<rect x="1554.20" y="930.60" width="56.40" height="37.20" fill="url(#gCt)"/>
<line x1="1554.20" y1="930.60" x2="1554.20" y2="967.80" stroke="#505050" stroke-width="1.2"/>
<circle cx="1582.4" cy="949" r="12.8" fill="url(#gCirc)"/>
<rect x="1610.60" y="930.60" width="60.40" height="37.20" fill="url(#gCt)"/>
<line x1="1610.60" y1="930.60" x2="1610.60" y2="967.80" stroke="#505050" stroke-width="1.2"/>
<circle cx="1639.0" cy="949" r="12.8" fill="url(#gCirc)"/>
<rect x="1351.50" y="943.80" width="10.40" height="10.40" fill="#2a2a2a"/>
<path d="M1409.8,943 v12 l10.2,-6 z" fill="#2a2a2a"/>
<path d="M1466.2,943.6 h-2.6 v10.8 h2.6 M1473.8,943.6 h2.6 v10.8 h-2.6" fill="none" stroke="#2a2a2a" stroke-width="2.3"/>
<path d="M1467.3,949 h5.4" stroke="#2a2a2a" stroke-width="1.6" stroke-dasharray="1.6,1.2"/>
<path d="M1526.3,949 c-2,-3.4 -7.6,-3.4 -7.6,0 c0,3.4 5.6,3.4 7.6,0 c2,-3.4 7.6,-3.4 7.6,0 c0,3.4 -5.6,3.4 -7.6,0 z" fill="none" stroke="#2a2a2a" stroke-width="1.9"/>
<path d="M1576.6,947.6 a6,6 0 0 1 10.4,-2.6 M1588.2,950.4 a6,6 0 0 1 -10.4,2.6" fill="none" stroke="#2a2a2a" stroke-width="2.3"/>
<path d="M1588.8,941.2 v5.4 h-5.4 z M1576,956.8 v-5.4 h5.4 z" fill="#2a2a2a"/>
<line x1="1327.50" y1="967.80" x2="1671.00" y2="967.80" stroke="#4a4a4a" stroke-width="1.3"/>
<path d="M1327.5,1009 V973.3 Q1327.5,968.5 1332.5,968.5 H1497.6 V1009 Z" fill="url(#gCtB)"/>
<rect x="1497.60" y="968.50" width="180.00" height="40.50" fill="url(#gCtB)"/>
<line x1="1497.60" y1="968.50" x2="1497.60" y2="1007.00" stroke="#4a4a4a" stroke-width="1.3"/>
<circle cx="1366" cy="988.5" r="12.6" fill="url(#gCirc)"/>
<circle cx="1632.7" cy="988.5" r="12.6" fill="url(#gCirc)"/>
<path d="M1365.5,983.2 l-4.6,5.3 l4.6,5.3 M1371.3,983.2 l-4.6,5.3 l4.6,5.3" fill="none" stroke="#333" stroke-width="2.1"/>
<path d="M1627.4,983.2 l4.6,5.3 l-4.6,5.3 M1633.2,983.2 l4.6,5.3 l-4.6,5.3" fill="none" stroke="#333" stroke-width="2.1"/>
<text x="1399.2" y="997.5" font-size="25.5" fill="#2e2e2e" textLength="63.7" lengthAdjust="spacingAndGlyphs" stroke="#2e2e2e" stroke-width="0.5">Back</text>
<text x="1533.3" y="997.5" font-size="25.5" fill="#2e2e2e" textLength="64.2" lengthAdjust="spacingAndGlyphs" stroke="#2e2e2e" stroke-width="0.5">Next</text>
</svg>
</body></html>
